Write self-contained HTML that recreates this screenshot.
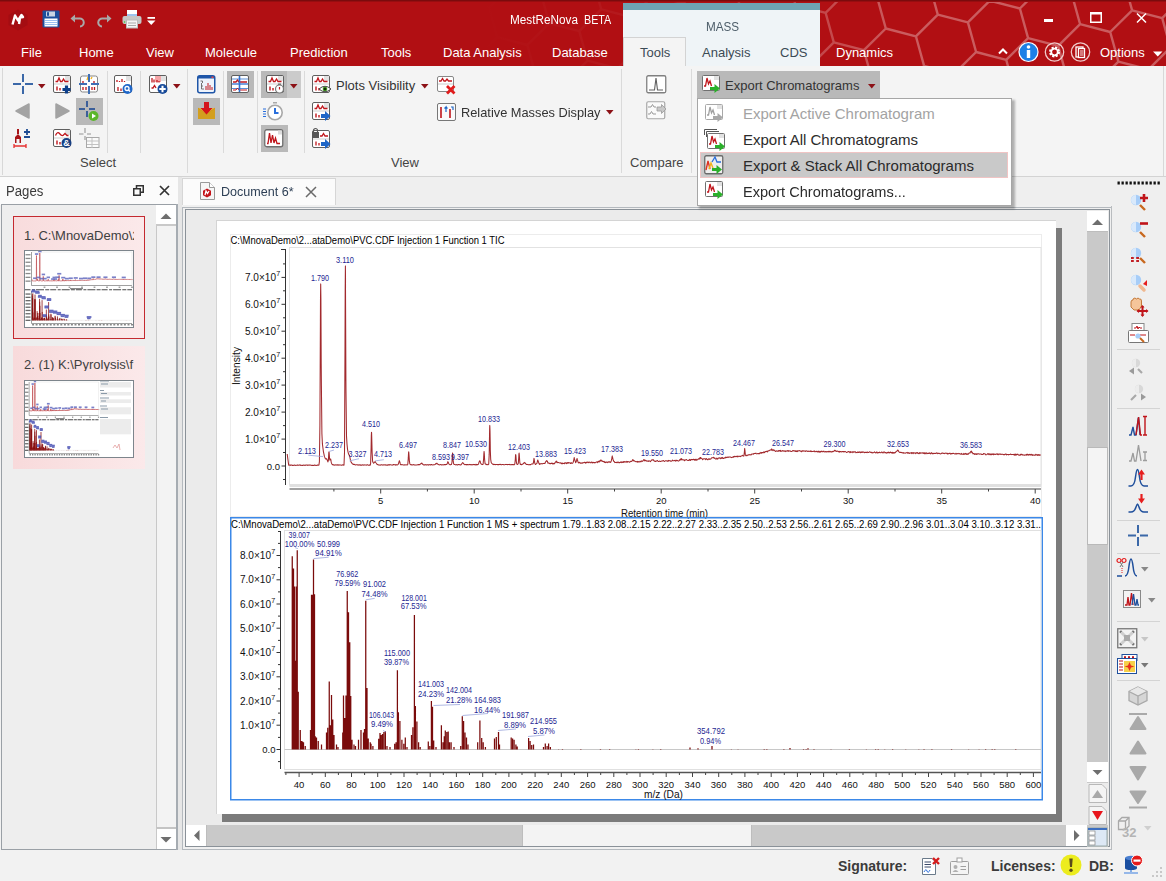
<!DOCTYPE html><html><head><meta charset="utf-8"><style>
*{margin:0;padding:0;box-sizing:border-box}
html,body{width:1166px;height:881px;overflow:hidden;background:#f2f2f2;font-family:"Liberation Sans",sans-serif;position:relative}
.a{position:absolute}
.t{position:absolute;white-space:nowrap;line-height:1}
.tab{color:#fff;font-size:13px;top:46px}
.ctab{color:#3c4a55;font-size:13px;top:46px}
.sep{position:absolute;width:1px;background:#dadada}
.glab{color:#444;font-size:13px;top:156px}
.hl{position:absolute;background:#b9b9b9}
.rtxt{color:#333;font-size:13px}
svg{position:absolute;overflow:visible}
</style></head><body>
<div class="a" style="left:0;top:0;width:1166px;height:66px;background:#b10f13"></div>
<div class="a" style="left:0;top:0;width:1166px;height:1px;background:#7a0b0d"></div><div class="a" style="left:0;top:1px;width:1166px;height:1px;background:#970d10"></div>
<svg style="left:0;top:0" width="1166" height="66"><defs><linearGradient id="hg" x1="480" x2="900" y1="0" y2="0" gradientUnits="userSpaceOnUse"><stop offset="0" stop-color="#fff" stop-opacity="0"/><stop offset="0.45" stop-color="#fff" stop-opacity="0.06"/><stop offset="1" stop-color="#fff" stop-opacity="0.32"/></linearGradient><clipPath id="hc"><rect x="0" y="2" width="1166" height="64"/></clipPath></defs><path clip-path="url(#hc)" d="M483.5 88.5L475.3 58.9M458.9 -0.2L489.0 7.6M497.2 37.2L527.3 45.0M497.2 37.2L489.0 7.6M497.2 37.2L475.3 58.9M535.5 74.6L565.6 82.4M535.5 74.6L527.3 45.0M535.5 74.6L513.6 96.3M510.9 -14.1L489.0 7.6M549.2 23.3L579.3 31.1M549.2 23.3L541.0 -6.3M549.2 23.3L527.3 45.0M587.5 60.7L617.6 68.5M587.5 60.7L579.3 31.1M587.5 60.7L565.6 82.4M625.8 98.1L617.6 68.5M601.2 9.3L631.3 17.2M601.2 9.3L593.0 -20.2M601.2 9.3L579.3 31.1M639.5 46.7L669.6 54.6M639.5 46.7L631.3 17.2M639.5 46.7L617.6 68.5M677.8 84.1L669.6 54.6M653.2 -4.6L683.3 3.3M653.2 -4.6L645.0 -34.1M653.2 -4.6L631.3 17.2M691.5 32.8L721.6 40.7M691.5 32.8L683.3 3.3M691.5 32.8L669.6 54.6M729.8 70.2L759.9 78.1M729.8 70.2L721.6 40.7M729.8 70.2L707.9 92.0M705.2 -18.5L683.3 3.3M743.5 18.9L773.6 26.8M743.5 18.9L735.3 -10.6M743.5 18.9L721.6 40.7M781.8 56.3L811.9 64.2M781.8 56.3L773.6 26.8M781.8 56.3L759.9 78.1M820.1 93.7L811.9 64.2M795.5 5.0L825.6 12.8M795.5 5.0L787.3 -24.6M795.5 5.0L773.6 26.8M833.8 42.4L863.9 50.2M833.8 42.4L825.6 12.8M833.8 42.4L811.9 64.2M872.1 79.8L863.9 50.2M847.5 -8.9L877.6 -1.1M847.5 -8.9L825.6 12.8M885.8 28.5L915.9 36.3M885.8 28.5L877.6 -1.1M885.8 28.5L863.9 50.2M924.1 65.9L954.2 73.7M924.1 65.9L915.9 36.3M924.1 65.9L902.2 87.6M962.4 103.3L954.2 73.7M899.5 -22.8L877.6 -1.1M937.8 14.6L967.9 22.4M937.8 14.6L929.6 -15.0M937.8 14.6L915.9 36.3M976.1 52.0L1006.2 59.8M976.1 52.0L967.9 22.4M976.1 52.0L954.2 73.7M1014.4 89.4L1006.2 59.8M989.8 0.7L1019.9 8.5M989.8 0.7L981.6 -28.9M989.8 0.7L967.9 22.4M1028.1 38.1L1058.2 45.9M1028.1 38.1L1019.9 8.5M1028.1 38.1L1006.2 59.8M1066.4 75.5L1058.2 45.9M1041.8 -13.2L1019.9 8.5M1080.1 24.2L1110.2 32.0M1080.1 24.2L1071.9 -5.4M1080.1 24.2L1058.2 45.9M1118.4 61.6L1148.5 69.4M1118.4 61.6L1110.2 32.0M1118.4 61.6L1096.5 83.3M1156.7 99.0L1148.5 69.4M1132.1 10.3L1162.2 18.1M1132.1 10.3L1123.9 -19.3M1132.1 10.3L1110.2 32.0M1170.4 47.7L1200.5 55.5M1170.4 47.7L1162.2 18.1M1170.4 47.7L1148.5 69.4M1184.1 -3.7L1214.2 4.2M1184.1 -3.7L1175.9 -33.2M1184.1 -3.7L1162.2 18.1" stroke="url(#hg)" stroke-width="2.4" fill="none"/></svg>
<div class="a" style="left:623px;top:3px;width:197px;height:63px;background:#eff4f7"></div>
<div class="a" style="left:623px;top:3px;width:197px;height:7px;background:#6ea3b3"></div>
<div class="t" style="left:706px;top:19.5px;font-size:13px;color:#4d5d69;transform:scaleX(0.9);transform-origin:0 0">MASS</div>
<div class="a" style="left:623px;top:37px;width:63px;height:30px;background:#f4f4f4;border:1px solid #d3d3d3;border-bottom:none"></div>
<div class="t" style="left:510px;top:14px;font-size:12.5px;color:#fff;transform:scaleX(0.94);transform-origin:0 0">MestReNova</div>
<div class="t" style="left:584px;top:14px;font-size:12.5px;color:#fff;transform:scaleX(0.86);transform-origin:0 0">BETA</div>
<div class="t tab" style="left:21px">File</div>
<div class="t tab" style="left:79px">Home</div>
<div class="t tab" style="left:146px">View</div>
<div class="t tab" style="left:205px">Molecule</div>
<div class="t tab" style="left:290px">Prediction</div>
<div class="t tab" style="left:381px">Tools</div>
<div class="t tab" style="left:443px">Data Analysis</div>
<div class="t tab" style="left:552px">Database</div>
<div class="t tab" style="left:836px">Dynamics</div>
<div class="t tab" style="left:1100px">Options</div>
<div class="t ctab" style="left:640px">Tools</div>
<div class="t ctab" style="left:702px">Analysis</div>
<div class="t ctab" style="left:780px">CDS</div>
<div class="a" style="left:0;top:66px;width:1166px;height:111px;background:#f4f4f4;border-bottom:1px solid #d3d3d3"></div>
<div class="a" style="left:2px;top:68px;width:1px;height:107px;background:#d8d8d8"></div>
<div class="a" style="left:1163px;top:66px;width:1px;height:110px;background:#d8d8d8"></div>
<div class="sep" style="left:107px;top:71px;height:82px"></div>
<div class="sep" style="left:140px;top:71px;height:82px"></div>
<div class="sep" style="left:187px;top:69px;height:104px"></div>
<div class="sep" style="left:223px;top:71px;height:82px"></div>
<div class="sep" style="left:257px;top:71px;height:82px"></div>
<div class="sep" style="left:304px;top:71px;height:82px"></div>
<div class="sep" style="left:621px;top:69px;height:104px"></div>
<div class="sep" style="left:691px;top:69px;height:104px"></div>
<div class="t glab" style="left:80px">Select</div>
<div class="t glab" style="left:391px">View</div>
<div class="t glab" style="left:630px">Compare</div>
<div class="hl" style="left:76px;top:98px;width:27px;height:27px"></div>
<div class="hl" style="left:193px;top:98px;width:27px;height:27px"></div>
<div class="hl" style="left:227px;top:71px;width:27px;height:27px"></div>
<div class="hl" style="left:261px;top:71px;width:26px;height:27px"></div>
<div class="hl" style="left:261px;top:125px;width:27px;height:27px"></div>
<div class="a" style="left:287px;top:71px;width:14px;height:27px;background:#cbcbcb"></div>
<div class="t rtxt" style="left:336px;top:79px">Plots Visibility</div>
<div class="t rtxt" style="left:461px;top:106px;transform:scaleX(0.985);transform-origin:0 0">Relative Masses Display</div>
<div class="hl" style="left:697px;top:71px;width:183px;height:27px"></div>
<div class="t rtxt" style="left:725px;top:79px">Export Chromatograms</div>
<div class="a" style="left:0;top:177px;width:178px;height:28px;background:#fbfbfb"></div>
<div class="t" style="left:6px;top:184px;font-size:14px;color:#3a3a3a;transform:scaleX(0.94);transform-origin:0 0">Pages</div>
<div class="a" style="left:1px;top:204px;width:177px;height:646px;background:#eeeeee;border:1px solid #9aa0a6;border-width:1px 1px 1px 1px"></div>
<div class="a" style="left:176px;top:204px;width:2px;height:646px;background:#a6acb2"></div>
<div class="a" style="left:156px;top:205px;width:20px;height:644px;background:#f3f3f3;border-left:1px solid #c8c8c8"></div>
<div class="a" style="left:156px;top:205px;width:20px;height:21px;background:#fff;border-bottom:2px solid #c9c9c9"></div>
<div class="a" style="left:156px;top:827px;width:20px;height:22px;background:#fff;border-top:2px solid #c4c4c4;border-left:1px solid #c8c8c8"></div>
<svg style="left:156px;top:205px" width="20" height="21"><path d="M4.5 14L10 8.5L15.5 14Z" fill="#6e6e6e"/></svg>
<svg style="left:156px;top:829px" width="20" height="20"><path d="M4.5 8L10 13.5L15.5 8Z" fill="#6e6e6e"/></svg>
<div class="a" style="left:13px;top:216px;width:132px;height:123px;background:linear-gradient(90deg,#f8dcdd,#fbe9ea);border:1px solid #c42a30"></div>
<div class="t" style="left:24px;top:229px;font-size:13px;color:#404040;width:110px;overflow:hidden">1. C:\MnovaDemo\2</div>
<div class="a" style="left:13px;top:346px;width:132px;height:123px;background:linear-gradient(90deg,#f8dadb,#fbe9ea)"></div>
<div class="t" style="left:24px;top:358px;font-size:13px;color:#404040;width:110px;overflow:hidden">2. (1) K:\Pyrolysis\f</div>
<div class="a" style="left:24px;top:250px;width:110px;height:78px;background:#fff;border:1px solid #7d858c"></div>
<div class="a" style="left:24px;top:380px;width:110px;height:78px;background:#fff;border:1px solid #7d858c"></div>
<div class="a" style="left:178px;top:177px;width:988px;height:673px;background:#efefef"></div>
<div class="a" style="left:178px;top:177px;width:4px;height:673px;background:#e6e6e6"></div>
<div class="a" style="left:182px;top:178px;width:154px;height:27px;background:#fbfbfb;border:1px solid #d6d6d6;border-bottom:none"></div>
<div class="t" style="left:221px;top:185px;font-size:13.5px;color:#2d3f55;transform:scaleX(0.93);transform-origin:0 0">Document 6*</div>
<svg style="left:305px;top:186px" width="12" height="12"><path d="M1 1L11 11M11 1L1 11" stroke="#6a6a6a" stroke-width="1.5"/></svg>
<div class="a" style="left:182px;top:205px;width:930px;height:645px;background:#f0f0f0"></div>
<div class="a" style="left:182px;top:207px;width:930px;height:643px;background:#f0f0f0;border:1px solid #b4b9be"></div><div class="a" style="left:185px;top:209px;width:925px;height:638px;background:#ebebeb;border:1.5px solid #8a9198"></div>
<div class="a" style="left:222px;top:228px;width:840px;height:594px;background:#7b7b7b"></div>
<div class="a" style="left:216px;top:220px;width:840px;height:594px;background:#fff;border:1px solid #d4d4d4;border-width:1px 0 0 1px"></div>
<div class="a" style="left:1087px;top:211px;width:21px;height:636px;background:#c9c9c9"></div>
<div class="a" style="left:1087px;top:447px;width:21px;height:98px;background:#f4f4f4;border:1px solid #b9b9b9"></div>
<div class="a" style="left:1087px;top:211px;width:21px;height:21px;background:#fff;border-bottom:1px solid #bdbdbd"></div>
<svg style="left:1087px;top:211px" width="21" height="21"><path d="M5 14L10.5 8.5L16 14Z" fill="#6e6e6e"/></svg>
<div class="a" style="left:1087px;top:762px;width:21px;height:20px;background:#fff"></div>
<svg style="left:1087px;top:762px" width="21" height="20"><path d="M5.5 8L10.5 13L15.5 8Z" fill="#6e6e6e"/></svg>
<div class="a" style="left:1087px;top:783px;width:21px;height:42px;background:#ececec"></div>
<svg style="left:1087px;top:783px" width="21" height="42"><path d="M2 1.5H15L19.5 6V19.5H2Z" fill="#f4f4f4" stroke="#b8b8b8"/><path d="M5 15L10.5 7L16 15Z" fill="#a8a8a8"/><path d="M2 23.5H15L19.5 28V41.5H2Z" fill="#f4f4f4" stroke="#b8b8b8"/><path d="M5 28L10.5 37L16 28Z" fill="#e8141b"/></svg>
<div class="a" style="left:186px;top:825px;width:901px;height:21px;background:#c9c9c9"></div>
<div class="a" style="left:522px;top:825px;width:230px;height:21px;background:#f3f3f3;border:1px solid #bdbdbd;border-width:0 1px"></div>
<div class="a" style="left:186px;top:825px;width:21px;height:21px;background:#fff;border-right:1px solid #bdbdbd"></div>
<svg style="left:186px;top:825px" width="21" height="21"><path d="M13.5 5L8 10.5L13.5 16Z" fill="#6e6e6e"/></svg>
<div class="a" style="left:1066px;top:825px;width:21px;height:21px;background:#fff"></div>
<svg style="left:1066px;top:825px" width="21" height="21"><path d="M8 5L13.5 10.5L8 16Z" fill="#6e6e6e"/></svg>
<svg style="left:1087px;top:826px" width="21" height="21"><rect x="1" y="2" width="19" height="18" fill="#dde8f5" stroke="#9aa"/><rect x="1" y="2" width="19" height="2" fill="#3d6fc0"/><rect x="2" y="5" width="6" height="4" fill="#fff" stroke="#888" stroke-width="0.7"/><rect x="2" y="10" width="6" height="4" fill="#fff" stroke="#888" stroke-width="0.7"/><rect x="2" y="15" width="6" height="4" fill="#fff" stroke="#888" stroke-width="0.7"/></svg>
<svg style="left:0;top:0" width="1166" height="881" font-family="Liberation Sans, sans-serif"><g id="cg"><rect x="230.5" y="234.5" width="811" height="282" fill="none" stroke="#ececec" stroke-width="1"/>
<text x="230.5" y="244.0" font-size="10.0" fill="#000" text-anchor="start" textLength="274.0" lengthAdjust="spacingAndGlyphs">C:\MnovaDemo\2...ataDemo\PVC.CDF Injection 1 Function 1 TIC</text>
<rect x="289.5" y="247.5" width="751.5" height="237.5" fill="none" stroke="#e2e2e2" stroke-width="1"/>
<rect x="289.5" y="484" width="751.5" height="3" fill="#e0e0e0"/>
<path d="M285.5 249V485" stroke="#333" stroke-width="1"/>
<path d="M283 479.5H285.5M281.5 466.0H285.5M283 452.5H285.5M281.5 439.1H285.5M283 425.6H285.5M281.5 412.1H285.5M283 398.6H285.5M281.5 385.1H285.5M283 371.7H285.5M281.5 358.2H285.5M283 344.7H285.5M281.5 331.2H285.5M283 317.8H285.5M281.5 304.3H285.5M283 290.8H285.5M281.5 277.4H285.5M283 263.9H285.5M281 249.5H285.5" stroke="#333" stroke-width="1"/>
<text x="280.0" y="469.5" font-size="9.5" fill="#111" text-anchor="end">0.0</text>
<text x="276.0" y="442.6" font-size="10.0" fill="#111" text-anchor="end" textLength="31.0" lengthAdjust="spacingAndGlyphs">1.0×10</text>
<text x="276.3" y="437.8" font-size="7.0" fill="#111" text-anchor="start" textLength="4.0" lengthAdjust="spacingAndGlyphs">7</text>
<text x="276.0" y="415.6" font-size="10.0" fill="#111" text-anchor="end" textLength="31.0" lengthAdjust="spacingAndGlyphs">2.0×10</text>
<text x="276.3" y="410.8" font-size="7.0" fill="#111" text-anchor="start" textLength="4.0" lengthAdjust="spacingAndGlyphs">7</text>
<text x="276.0" y="388.6" font-size="10.0" fill="#111" text-anchor="end" textLength="31.0" lengthAdjust="spacingAndGlyphs">3.0×10</text>
<text x="276.3" y="383.8" font-size="7.0" fill="#111" text-anchor="start" textLength="4.0" lengthAdjust="spacingAndGlyphs">7</text>
<text x="276.0" y="361.7" font-size="10.0" fill="#111" text-anchor="end" textLength="31.0" lengthAdjust="spacingAndGlyphs">4.0×10</text>
<text x="276.3" y="356.9" font-size="7.0" fill="#111" text-anchor="start" textLength="4.0" lengthAdjust="spacingAndGlyphs">7</text>
<text x="276.0" y="334.8" font-size="10.0" fill="#111" text-anchor="end" textLength="31.0" lengthAdjust="spacingAndGlyphs">5.0×10</text>
<text x="276.3" y="329.9" font-size="7.0" fill="#111" text-anchor="start" textLength="4.0" lengthAdjust="spacingAndGlyphs">7</text>
<text x="276.0" y="307.8" font-size="10.0" fill="#111" text-anchor="end" textLength="31.0" lengthAdjust="spacingAndGlyphs">6.0×10</text>
<text x="276.3" y="303.0" font-size="7.0" fill="#111" text-anchor="start" textLength="4.0" lengthAdjust="spacingAndGlyphs">7</text>
<text x="276.0" y="280.9" font-size="10.0" fill="#111" text-anchor="end" textLength="31.0" lengthAdjust="spacingAndGlyphs">7.0×10</text>
<text x="276.3" y="276.1" font-size="7.0" fill="#111" text-anchor="start" textLength="4.0" lengthAdjust="spacingAndGlyphs">7</text>
<text x="0.0" y="0.0" font-size="10.0" fill="#111" text-anchor="middle" textLength="38.0" lengthAdjust="spacingAndGlyphs" transform="translate(239.5 366) rotate(-90)">Intensity</text>
<path d="M289.5 489H1041" stroke="#444" stroke-width="1"/>
<path d="M333.9 489V491.5M380.7 489V493.5M427.4 489V491.5M474.2 489V493.5M521.0 489V491.5M567.7 489V493.5M614.5 489V491.5M661.2 489V493.5M708.0 489V491.5M754.7 489V493.5M801.5 489V491.5M848.2 489V493.5M895.0 489V491.5M941.7 489V493.5M988.5 489V491.5M1035.2 489V493.5" stroke="#444" stroke-width="1"/>
<text x="380.7" y="504.0" font-size="9.5" fill="#111" text-anchor="middle">5</text>
<text x="474.2" y="504.0" font-size="9.5" fill="#111" text-anchor="middle">10</text>
<text x="567.7" y="504.0" font-size="9.5" fill="#111" text-anchor="middle">15</text>
<text x="661.2" y="504.0" font-size="9.5" fill="#111" text-anchor="middle">20</text>
<text x="754.7" y="504.0" font-size="9.5" fill="#111" text-anchor="middle">25</text>
<text x="848.2" y="504.0" font-size="9.5" fill="#111" text-anchor="middle">30</text>
<text x="941.7" y="504.0" font-size="9.5" fill="#111" text-anchor="middle">35</text>
<text x="1035.2" y="504.0" font-size="9.5" fill="#111" text-anchor="middle">40</text>
<text x="621.0" y="516.5" font-size="10.0" fill="#111" text-anchor="start" textLength="87.0" lengthAdjust="spacingAndGlyphs">Retention time (min)</text>
<path d="M287.2 454.0 287.7 457.9 288.2 461.5 288.7 465.3 289.2 465.3 289.7 464.9 290.2 464.9 290.7 465.4 291.2 465.0 291.7 465.0 292.2 465.5 292.7 465.2 293.2 465.4 293.7 465.2 294.2 465.3 294.7 465.0 295.2 465.3 295.7 465.4 296.2 465.2 296.7 465.3 297.2 465.3 297.8 464.9 298.3 465.3 298.8 465.2 299.3 465.0 299.8 464.9 300.3 465.4 300.8 465.1 301.3 465.3 301.8 465.4 302.3 465.3 302.8 465.4 303.3 465.1 303.8 465.3 304.3 465.1 304.8 465.4 305.3 465.4 305.8 464.9 306.3 464.9 306.8 465.0 307.3 465.4 307.8 465.1 308.3 465.2 308.8 465.0 309.3 465.1 309.8 465.1 310.3 465.0 310.8 465.2 311.3 465.2 311.8 465.4 312.3 465.2 312.8 465.4 313.3 465.3 313.8 465.4 314.3 465.2 314.8 464.9 315.3 465.3 315.8 465.4 316.3 465.4 316.8 465.2 317.3 465.2 317.8 464.9 318.3 465.3 318.9 465.1 319.4 461.6 319.9 425.5 320.4 320.9 320.5 298.3 320.7 283.9 320.9 298.3 320.9 298.3 321.2 363.6 321.4 386.1 321.9 433.4 322.4 443.9 322.9 447.8 323.4 451.6 323.9 453.9 324.4 456.4 324.9 457.6 325.4 458.7 325.9 458.9 326.4 458.7 326.5 459.1 326.7 458.9 326.9 459.2 326.9 459.5 327.3 460.1 327.4 460.5 327.9 461.9 328.4 460.3 328.8 452.8 328.9 452.1 329.0 451.9 329.2 453.2 329.4 456.3 329.6 458.8 329.9 460.1 330.4 459.0 330.4 459.0 330.6 459.0 330.8 459.6 330.9 460.2 331.1 461.4 331.4 462.9 331.9 464.1 332.4 464.5 332.9 464.9 333.4 464.7 333.9 464.8 334.4 465.2 334.9 465.0 335.4 465.0 335.9 464.7 336.4 465.0 336.9 465.1 337.4 464.7 337.9 465.1 338.4 465.1 338.9 464.8 339.5 465.1 340.0 465.0 340.5 465.1 341.0 465.0 341.5 465.2 342.0 465.2 342.5 464.8 343.0 464.8 343.5 465.1 344.0 465.1 344.5 452.6 345.0 346.3 345.2 289.5 345.4 265.9 345.5 276.9 345.5 288.2 345.9 379.6 346.0 392.5 346.5 436.1 347.0 444.1 347.5 449.1 348.0 451.9 348.5 453.9 349.0 454.6 349.2 454.8 349.4 455.2 349.5 455.8 349.6 455.9 350.0 457.7 350.0 457.9 350.5 460.4 351.0 461.7 351.5 462.7 352.0 463.3 352.5 464.0 353.0 464.1 353.5 464.5 354.0 464.3 354.5 464.5 355.0 464.8 355.5 465.0 356.0 464.8 356.5 464.7 357.0 464.7 357.5 464.9 358.0 464.8 358.5 465.1 359.0 465.2 359.5 464.8 360.0 464.8 360.6 465.2 361.1 465.1 361.6 465.2 362.1 464.9 362.6 464.8 363.1 464.9 363.6 465.2 364.1 464.8 364.6 464.9 365.1 464.9 365.6 464.9 366.1 464.9 366.6 465.2 367.1 464.8 367.6 464.7 368.1 465.2 368.6 465.2 369.1 465.3 369.6 464.9 370.1 465.2 370.6 463.8 371.1 448.0 371.3 436.0 371.5 432.2 371.6 432.9 371.7 436.1 372.1 451.8 372.1 452.1 372.6 461.2 373.1 462.5 373.6 463.2 374.1 462.7 374.6 462.4 375.1 461.4 375.1 461.9 375.3 461.8 375.5 462.1 375.6 462.3 375.9 462.7 376.1 463.0 376.6 463.5 377.1 464.6 377.6 464.5 378.1 464.7 378.6 465.0 379.1 464.9 379.6 464.9 380.1 465.2 380.6 465.0 381.2 464.8 381.7 464.8 382.2 465.1 382.7 464.9 383.2 465.1 383.7 464.8 384.2 464.7 384.7 464.9 385.2 465.1 385.7 464.7 386.2 465.1 386.7 465.2 387.2 465.1 387.7 465.1 388.2 464.6 388.7 465.0 389.2 465.1 389.7 464.6 390.2 464.8 390.7 464.8 391.2 464.9 391.7 464.9 392.2 464.9 392.7 465.1 393.2 464.6 393.7 464.6 394.2 464.7 394.7 464.7 395.2 464.6 395.7 465.2 396.2 465.1 396.7 464.6 397.2 464.9 397.7 464.7 398.2 464.3 398.7 462.8 399.2 461.2 399.2 461.1 399.4 460.8 399.6 461.1 399.7 461.7 400.0 462.5 400.2 463.7 400.7 464.7 401.2 464.7 401.7 464.6 402.3 464.7 402.8 464.8 403.3 464.9 403.8 465.0 404.3 464.8 404.8 465.0 405.3 464.9 405.8 464.8 406.3 464.8 406.8 464.9 407.3 465.0 407.8 464.2 408.3 457.9 408.5 453.4 408.7 451.7 408.8 452.4 408.9 453.7 409.3 459.6 409.3 460.3 409.8 463.7 410.3 464.5 410.8 464.8 411.3 464.6 411.8 465.0 412.3 464.9 412.8 464.7 413.3 464.8 413.8 464.6 414.3 465.0 414.8 464.9 415.3 465.1 415.8 465.0 416.3 464.9 416.8 465.0 417.3 464.9 417.8 464.6 418.3 464.9 418.8 464.5 419.3 464.6 419.8 464.8 420.3 464.1 420.8 463.7 421.3 463.3 421.7 463.6 421.8 463.1 421.8 463.0 422.0 463.7 422.3 463.5 422.4 464.0 422.8 464.3 423.4 464.7 423.9 465.0 424.4 464.8 424.9 465.0 425.4 464.5 425.9 465.0 426.4 464.8 426.9 464.9 427.4 464.6 427.9 464.9 428.4 465.1 428.9 464.5 429.4 464.7 429.9 464.8 430.4 465.0 430.9 464.6 431.4 464.6 431.9 464.6 432.4 464.9 432.9 464.9 433.4 464.7 433.9 464.7 434.4 464.7 434.9 464.5 435.4 464.2 435.9 463.6 436.4 463.4 436.6 463.6 436.8 463.2 436.9 463.5 437.0 463.2 437.4 463.9 437.4 463.9 437.9 464.3 438.4 464.5 438.9 464.7 439.4 464.8 439.9 465.0 440.4 464.5 440.9 464.5 441.4 464.9 441.9 465.0 442.4 464.8 442.9 464.7 443.4 464.9 444.0 464.6 444.5 464.6 445.0 464.6 445.5 464.8 446.0 464.6 446.5 464.5 447.0 464.1 447.5 462.7 447.7 461.8 447.9 461.9 448.0 461.8 448.1 462.3 448.5 463.1 448.5 463.0 449.0 464.1 449.5 464.4 450.0 464.7 450.5 464.7 451.0 464.5 451.5 464.5 452.0 462.0 452.5 454.3 452.5 453.4 452.6 453.0 452.8 454.4 453.0 457.2 453.2 460.4 453.5 463.3 454.0 464.4 454.5 464.5 455.0 464.6 455.5 464.8 456.0 464.9 456.5 464.6 457.0 464.8 457.5 465.0 458.0 464.7 458.5 464.5 459.0 464.5 459.5 464.8 460.0 464.8 460.5 465.0 461.0 464.8 461.5 464.2 462.0 463.5 462.5 462.8 462.7 462.6 462.9 462.8 463.0 463.0 463.1 463.1 463.5 463.2 463.5 463.7 464.0 464.0 464.5 464.5 465.1 464.8 465.6 464.4 466.1 464.4 466.6 464.9 467.1 464.6 467.6 464.6 468.1 464.7 468.6 464.8 469.1 464.4 469.6 464.6 470.1 464.6 470.6 464.7 471.1 464.5 471.6 464.7 472.1 464.9 472.6 464.6 473.1 464.7 473.6 464.4 474.1 464.5 474.6 464.8 475.1 464.4 475.6 464.9 476.1 464.9 476.6 464.4 477.1 464.9 477.6 464.5 478.1 464.5 478.6 463.7 479.1 461.9 479.6 460.9 479.6 460.9 479.8 460.8 480.0 460.9 480.1 461.5 480.4 462.3 480.6 462.9 481.1 463.9 481.6 464.2 482.1 464.6 482.6 464.5 483.1 464.3 483.6 458.8 483.9 453.2 484.1 451.4 484.1 451.9 484.3 453.6 484.6 459.3 484.7 460.2 485.1 463.7 485.7 464.0 486.2 464.7 486.7 464.3 487.2 464.5 487.7 464.7 488.2 464.7 488.7 464.2 489.2 454.4 489.6 430.2 489.7 427.1 489.8 425.4 490.0 430.6 490.2 441.6 490.3 449.9 490.7 459.3 491.2 462.5 491.7 463.3 492.2 463.7 492.7 464.1 493.2 464.6 493.7 464.2 494.2 464.5 494.7 464.4 495.2 464.7 495.7 464.5 496.2 464.5 496.7 464.5 497.2 464.6 497.7 464.8 498.2 464.5 498.7 464.8 499.2 464.4 499.7 464.5 500.2 464.3 500.7 464.4 501.2 464.8 501.7 464.7 502.2 464.4 502.7 464.4 503.2 464.5 503.7 464.7 504.2 464.8 504.7 464.7 505.2 464.6 505.7 464.4 506.2 464.5 506.8 464.4 507.3 464.6 507.8 464.6 508.3 464.4 508.8 464.4 509.3 464.7 509.8 464.3 510.3 464.7 510.8 464.8 511.3 464.8 511.8 464.5 512.3 464.6 512.8 464.6 513.3 464.6 513.8 464.8 514.3 464.7 514.8 464.0 515.3 459.5 515.5 455.7 515.7 454.6 515.8 455.2 515.9 455.8 516.3 461.3 516.3 461.5 516.8 464.1 517.3 464.4 517.8 464.4 518.3 463.3 518.8 456.7 518.9 454.1 519.1 453.0 519.3 454.8 519.3 454.8 519.7 460.7 519.8 462.3 520.3 464.4 520.8 464.2 521.3 464.6 521.8 464.6 522.3 464.2 522.8 464.2 523.3 463.7 523.8 462.9 524.3 462.7 524.5 462.8 524.7 462.4 524.8 462.9 524.9 462.9 525.3 462.9 525.3 463.5 525.8 463.8 526.3 464.4 526.8 464.5 527.4 464.6 527.9 464.4 528.4 464.7 528.9 464.8 529.4 464.7 529.9 464.5 530.4 464.8 530.9 464.5 531.4 464.0 531.9 463.9 532.4 463.9 532.9 464.0 533.4 462.7 533.9 459.1 533.9 459.1 534.0 458.4 534.2 459.2 534.4 460.8 534.6 462.1 534.9 463.6 535.4 464.5 535.9 464.1 536.4 463.7 536.9 463.5 537.4 461.3 537.6 460.3 537.8 460.0 537.9 460.5 538.0 460.8 538.3 461.7 538.4 461.6 538.9 463.3 539.4 464.4 539.9 463.7 540.4 464.0 540.9 463.7 541.4 463.7 541.9 463.6 542.4 463.9 542.9 463.6 543.4 463.4 543.9 463.5 544.4 463.4 544.9 463.5 545.4 462.3 545.9 461.4 546.4 461.0 546.6 460.8 546.8 461.1 546.9 460.5 547.0 461.0 547.4 461.5 547.4 461.2 547.9 463.2 548.5 462.9 549.0 463.1 549.5 463.7 550.0 463.3 550.5 463.8 551.0 463.5 551.5 463.2 552.0 463.1 552.5 463.9 553.0 463.3 553.5 463.9 554.0 463.5 554.5 463.8 555.0 462.7 555.5 462.1 556.0 461.4 556.3 461.9 556.5 461.6 556.5 461.3 556.7 461.1 557.0 462.2 557.0 462.6 557.5 462.6 558.0 462.4 558.5 462.6 559.0 462.8 559.5 462.9 560.0 462.8 560.5 462.8 561.0 463.5 561.5 463.7 562.0 462.9 562.5 463.8 563.0 463.2 563.5 463.5 564.0 463.6 564.5 463.7 565.0 462.5 565.5 462.9 566.0 463.2 566.5 463.6 567.0 462.5 567.5 462.8 568.0 463.4 568.5 462.5 569.1 462.8 569.6 462.8 570.1 463.2 570.6 463.5 571.1 462.5 571.6 463.2 572.1 463.2 572.6 463.3 573.1 462.4 573.6 461.0 574.1 458.0 574.1 458.0 574.2 457.6 574.4 458.8 574.6 459.0 574.8 459.9 575.1 460.9 575.6 462.7 576.1 462.0 576.6 460.2 576.9 458.9 577.0 458.8 577.1 458.5 577.2 459.5 577.6 460.0 577.6 460.6 578.1 462.4 578.6 462.9 579.1 462.3 579.6 462.5 580.1 463.2 580.6 462.9 581.1 463.2 581.6 463.2 582.1 462.7 582.6 463.2 583.1 463.0 583.6 462.5 584.1 462.6 584.6 462.2 585.1 462.6 585.6 463.2 586.1 462.2 586.6 462.7 587.1 462.2 587.6 462.1 588.1 462.8 588.6 462.3 589.1 462.1 589.6 462.2 590.2 462.8 590.7 462.7 591.2 462.0 591.7 462.2 592.2 463.1 592.7 462.2 593.2 462.6 593.7 462.4 594.2 462.9 594.7 462.6 595.2 462.8 595.7 462.5 596.2 462.1 596.7 462.0 597.2 461.8 597.7 462.6 598.2 461.5 598.7 461.2 599.2 462.0 599.7 460.7 600.2 461.2 600.7 460.0 601.2 460.4 601.2 460.1 601.4 460.8 601.5 460.7 601.7 460.8 601.9 461.1 602.2 461.4 602.7 461.0 603.2 461.6 603.7 461.6 604.2 461.4 604.7 462.4 605.2 462.3 605.7 462.6 606.2 461.9 606.7 462.3 607.2 462.2 607.7 462.6 608.2 461.8 608.7 462.1 609.2 462.2 609.7 461.7 610.2 462.3 610.7 462.4 611.3 460.9 611.8 458.4 612.1 456.7 612.3 455.9 612.3 456.0 612.4 457.3 612.8 458.1 612.8 458.6 613.3 460.3 613.8 461.4 614.3 461.6 614.8 462.6 615.3 462.4 615.8 462.6 616.3 462.7 616.8 462.2 617.3 462.6 617.8 462.1 618.3 462.0 618.8 462.6 619.3 462.6 619.8 462.6 620.3 462.0 620.8 462.4 621.3 461.9 621.8 462.6 622.3 462.5 622.8 461.8 623.3 462.5 623.8 461.6 624.3 461.5 624.8 462.2 625.3 461.7 625.8 462.0 626.3 462.1 626.8 461.4 627.3 462.2 627.8 461.6 628.3 461.8 628.8 461.7 629.3 462.1 629.8 462.1 630.3 461.6 630.8 461.3 631.3 461.4 631.9 461.2 632.4 460.1 632.9 459.5 633.0 460.1 633.1 460.0 633.3 460.5 633.4 460.5 633.7 460.9 633.9 460.5 634.4 460.9 634.9 461.3 635.4 461.6 635.9 461.7 636.4 461.7 636.9 461.5 637.4 462.1 637.9 461.4 638.4 461.6 638.9 462.1 639.4 462.0 639.9 461.3 640.4 461.2 640.9 461.9 641.4 460.9 641.9 461.0 642.4 461.4 642.9 461.1 643.4 460.2 643.9 459.6 644.2 459.6 644.4 460.3 644.4 459.9 644.6 460.6 644.9 460.7 644.9 460.9 645.4 460.2 645.9 460.7 646.4 460.7 646.9 461.3 647.4 461.2 647.9 460.8 648.4 461.4 648.9 460.8 649.4 461.1 649.9 461.0 650.4 461.6 650.9 461.0 651.4 460.4 651.9 459.7 652.4 459.7 652.6 459.9 652.8 459.9 653.0 460.3 653.0 460.2 653.3 459.8 653.5 459.8 654.0 460.9 654.5 461.3 655.0 461.1 655.5 461.5 656.0 461.2 656.5 460.9 657.0 460.7 657.5 460.5 658.0 461.3 658.5 461.5 659.0 461.5 659.5 461.0 660.0 461.2 660.5 461.5 661.0 461.4 661.5 461.1 662.0 460.9 662.5 461.0 663.0 460.6 663.5 460.6 664.0 461.1 664.5 461.5 665.0 461.0 665.5 460.8 666.0 460.7 666.5 460.8 667.0 461.2 667.5 460.8 668.0 461.4 668.5 460.4 669.0 460.6 669.5 460.8 670.0 460.7 670.5 461.2 671.0 461.1 671.5 461.2 672.0 460.8 672.5 460.1 673.0 460.8 673.6 460.7 674.1 460.6 674.6 460.4 675.1 460.9 675.6 461.1 676.1 460.1 676.6 460.8 677.1 460.4 677.6 460.6 678.1 461.0 678.6 461.1 679.1 460.6 679.6 459.8 680.1 460.3 680.6 458.9 681.1 458.8 681.1 459.4 681.3 458.7 681.5 458.8 681.6 459.7 681.8 459.9 682.1 459.3 682.6 459.8 683.1 459.9 683.6 459.8 684.1 460.0 684.6 460.8 685.1 459.7 685.6 459.9 686.1 459.8 686.6 459.6 687.1 460.1 687.6 460.4 688.1 460.5 688.6 460.2 689.1 460.4 689.6 459.4 690.1 459.7 690.6 460.5 691.1 459.4 691.6 459.6 692.1 459.8 692.6 459.5 693.1 459.8 693.6 459.2 694.1 459.4 694.7 460.3 695.2 459.3 695.7 460.1 696.2 459.2 696.7 460.2 697.2 459.8 697.7 459.7 698.2 459.0 698.7 458.7 699.2 459.2 699.7 458.0 700.2 457.6 700.3 458.3 700.5 458.3 700.7 457.5 700.7 458.6 701.0 458.3 701.2 458.3 701.7 458.3 702.2 459.0 702.7 459.8 703.2 459.0 703.7 458.8 704.2 458.8 704.7 458.7 705.2 459.0 705.7 459.6 706.2 458.6 706.7 458.7 707.2 459.6 707.7 459.6 708.2 459.6 708.7 458.7 709.2 458.8 709.7 459.4 710.2 458.9 710.7 459.1 711.2 458.5 711.7 457.8 712.2 457.7 712.7 457.7 713.1 457.6 713.2 457.3 713.2 457.2 713.4 457.4 713.7 457.5 713.8 457.7 714.2 458.4 714.7 457.9 715.3 458.6 715.8 459.1 716.3 459.0 716.8 458.1 717.3 459.1 717.8 458.9 718.3 458.0 718.8 458.1 719.3 457.9 719.8 457.7 720.3 458.8 720.8 458.0 721.3 458.5 721.8 457.6 722.3 457.4 722.8 458.4 723.3 458.2 723.8 458.4 724.3 458.0 724.8 457.7 725.3 458.0 725.8 457.1 726.3 457.6 726.8 457.4 727.3 457.0 727.8 457.5 728.3 457.1 728.8 457.3 729.3 457.1 729.8 456.9 730.3 456.9 730.8 457.2 731.3 457.6 731.8 457.5 732.3 457.3 732.8 457.2 733.3 456.5 733.8 457.3 734.3 456.4 734.8 456.2 735.3 456.6 735.8 456.8 736.4 456.3 736.9 456.6 737.4 456.1 737.9 456.9 738.4 456.2 738.9 456.2 739.4 456.2 739.9 456.5 740.4 456.6 740.9 456.0 741.4 455.9 741.9 456.0 742.4 455.3 742.9 455.7 743.4 456.1 743.9 455.9 744.4 451.8 744.5 450.4 744.7 448.4 744.9 450.5 744.9 450.1 745.3 454.1 745.4 454.9 745.9 455.8 746.4 455.2 746.9 455.7 747.4 455.4 747.9 454.9 748.4 454.7 748.9 454.9 749.4 454.7 749.9 454.6 750.4 454.8 750.9 455.0 751.4 454.6 751.9 453.9 752.4 453.9 752.9 454.0 753.4 454.2 753.9 453.6 754.4 453.4 754.9 453.6 755.4 453.5 755.9 453.1 756.4 453.6 757.0 454.0 757.5 453.5 758.0 453.6 758.5 453.6 759.0 453.6 759.5 453.6 760.0 452.9 760.5 453.1 761.0 452.4 761.5 453.2 762.0 452.5 762.5 452.5 763.0 452.9 763.5 452.1 764.0 451.9 764.5 452.6 765.0 452.2 765.5 451.5 766.0 451.4 766.5 451.6 767.0 451.1 767.5 451.9 768.0 451.0 768.5 450.8 769.0 450.7 769.5 450.5 770.0 450.1 770.5 450.0 771.0 449.8 771.3 449.5 771.5 449.0 771.5 450.1 771.7 449.8 772.0 449.2 772.1 449.6 772.5 450.2 773.0 450.7 773.5 449.8 774.0 449.9 774.5 450.7 775.0 450.7 775.5 451.4 776.0 451.3 776.5 450.8 777.0 450.9 777.5 451.1 778.1 451.5 778.6 450.6 779.1 450.9 779.6 450.5 780.1 451.2 780.6 450.4 781.1 451.5 781.6 451.0 782.1 451.1 782.6 450.5 783.1 450.7 783.6 451.0 784.1 451.4 784.6 451.0 785.1 450.7 785.6 451.6 786.1 451.2 786.6 451.0 787.1 450.6 787.6 450.8 788.1 451.5 788.6 450.6 789.1 451.0 789.6 451.1 790.1 450.8 790.6 451.3 791.1 451.5 791.6 451.4 792.1 451.3 792.6 450.7 793.1 450.5 793.6 450.9 794.1 450.8 794.6 450.7 795.1 451.5 795.6 450.7 796.1 451.5 796.6 451.6 797.1 450.6 797.6 451.6 798.1 451.0 798.6 450.8 799.2 450.7 799.7 450.6 800.2 451.1 800.7 451.0 801.2 451.6 801.7 451.6 802.2 450.6 802.7 451.1 803.2 451.1 803.7 450.8 804.2 450.9 804.7 450.9 805.2 451.5 805.7 451.1 806.2 450.8 806.7 450.9 807.2 451.2 807.7 451.4 808.2 451.0 808.7 451.5 809.2 451.0 809.7 451.5 810.2 451.5 810.7 450.9 811.2 451.6 811.7 451.2 812.2 451.4 812.7 451.5 813.2 451.5 813.7 451.3 814.2 450.9 814.7 451.7 815.2 451.8 815.7 451.4 816.2 451.5 816.7 451.2 817.2 451.9 817.7 451.7 818.2 451.1 818.7 451.9 819.2 452.1 819.8 451.3 820.3 452.1 820.8 451.5 821.3 451.1 821.8 451.8 822.3 451.3 822.8 451.8 823.3 451.7 823.8 451.1 824.3 451.6 824.8 452.0 825.3 451.6 825.8 451.6 826.3 452.0 826.8 451.6 827.3 451.6 827.8 451.7 828.3 452.0 828.8 451.3 829.3 451.2 829.8 452.0 830.3 451.7 830.8 451.4 831.3 452.0 831.8 452.0 832.3 451.4 832.8 451.8 833.3 451.5 833.8 451.3 834.3 450.6 834.8 450.2 834.9 451.0 835.1 451.0 835.3 450.6 835.3 450.8 835.7 451.0 835.8 450.7 836.3 451.4 836.8 451.3 837.3 451.3 837.8 451.1 838.3 451.7 838.8 451.5 839.3 452.1 839.8 451.4 840.3 451.7 840.9 451.5 841.4 451.8 841.9 452.0 842.4 451.4 842.9 451.4 843.4 451.9 843.9 451.6 844.4 451.9 844.9 451.5 845.4 451.5 845.9 452.0 846.4 452.5 846.9 452.4 847.4 452.0 847.9 451.9 848.4 451.5 848.9 451.7 849.4 451.8 849.9 452.6 850.4 451.6 850.9 452.6 851.4 452.0 851.9 452.0 852.4 451.8 852.9 452.6 853.4 451.7 853.9 452.2 854.4 452.1 854.9 451.7 855.4 451.8 855.9 452.7 856.4 452.5 856.9 452.4 857.4 452.6 857.9 451.7 858.4 452.4 858.9 452.5 859.4 451.9 859.9 452.1 860.4 452.8 860.9 452.0 861.5 452.5 862.0 451.8 862.5 452.4 863.0 452.0 863.5 452.3 864.0 452.1 864.5 452.7 865.0 452.6 865.5 452.3 866.0 452.5 866.5 452.2 867.0 452.7 867.5 452.0 868.0 452.4 868.5 452.4 869.0 452.2 869.5 451.8 870.0 452.0 870.5 452.5 871.0 452.0 871.5 452.7 872.0 452.4 872.5 452.9 873.0 452.8 873.5 452.7 874.0 452.3 874.5 451.9 875.0 452.5 875.5 452.7 876.0 453.0 876.5 452.1 877.0 452.1 877.5 453.0 878.0 452.8 878.5 452.5 879.0 452.8 879.5 452.1 880.0 452.6 880.5 452.7 881.0 452.7 881.5 452.1 882.0 452.1 882.6 452.7 883.1 453.0 883.6 452.1 884.1 452.0 884.6 452.1 885.1 452.9 885.6 452.5 886.1 452.6 886.6 453.2 887.1 452.8 887.6 452.3 888.1 452.9 888.6 452.1 889.1 452.4 889.6 452.9 890.1 452.3 890.6 452.1 891.1 452.7 891.6 452.5 892.1 453.3 892.6 452.2 893.1 453.1 893.6 452.6 894.1 453.1 894.6 452.6 895.1 452.8 895.6 452.2 896.1 451.6 896.6 451.3 897.1 451.1 897.6 450.1 897.8 450.0 898.0 450.4 898.1 450.2 898.4 450.7 898.6 451.3 899.1 451.9 899.6 452.4 900.1 452.4 900.6 452.2 901.1 452.3 901.6 452.7 902.1 452.5 902.6 453.0 903.2 452.6 903.7 453.2 904.2 453.0 904.7 453.1 905.2 453.2 905.7 452.9 906.2 452.8 906.7 452.7 907.2 452.4 907.7 453.3 908.2 453.0 908.7 452.5 909.2 453.5 909.7 453.1 910.2 453.1 910.7 452.9 911.2 452.6 911.7 453.6 912.2 452.6 912.7 452.9 913.2 453.6 913.7 452.6 914.2 453.1 914.7 453.0 915.2 452.8 915.7 453.6 916.2 453.0 916.7 452.5 917.2 453.1 917.7 452.5 918.2 453.4 918.7 453.6 919.2 453.6 919.7 452.6 920.2 453.4 920.7 452.9 921.2 453.1 921.7 452.9 922.2 453.0 922.7 452.8 923.2 453.4 923.7 452.7 924.3 453.8 924.8 452.7 925.3 453.8 925.8 452.9 926.3 452.8 926.8 453.6 927.3 453.3 927.8 453.6 928.3 453.3 928.8 453.4 929.3 452.8 929.8 453.5 930.3 453.3 930.8 453.9 931.3 452.7 931.8 452.8 932.3 453.6 932.8 453.9 933.3 453.3 933.8 453.6 934.3 453.5 934.8 453.3 935.3 453.4 935.8 453.5 936.3 452.8 936.8 453.2 937.3 453.7 937.8 453.1 938.3 453.4 938.8 453.2 939.3 453.3 939.8 453.7 940.3 453.8 940.8 454.0 941.3 453.5 941.8 453.1 942.3 453.3 942.8 453.0 943.3 453.2 943.8 453.6 944.3 453.7 944.9 453.2 945.4 453.2 945.9 453.1 946.4 453.2 946.9 453.6 947.4 453.3 947.9 454.1 948.4 453.7 948.9 453.4 949.4 453.5 949.9 453.1 950.4 453.9 950.9 453.9 951.4 453.5 951.9 453.9 952.4 453.4 952.9 453.3 953.4 453.4 953.9 453.3 954.4 453.8 954.9 453.9 955.4 454.0 955.9 453.2 956.4 454.0 956.9 453.7 957.4 453.6 957.9 453.7 958.4 453.7 958.9 453.4 959.4 453.6 959.9 454.0 960.4 454.0 960.9 454.3 961.4 453.4 961.9 454.3 962.4 454.2 962.9 454.1 963.4 454.4 963.9 453.4 964.4 454.2 964.9 454.3 965.4 453.4 966.0 454.0 966.5 454.4 967.0 453.6 967.5 454.3 968.0 454.4 968.5 453.7 969.0 453.2 969.5 452.9 970.0 453.1 970.5 451.9 971.0 451.3 971.1 451.4 971.3 452.0 971.5 451.3 971.5 451.1 971.9 452.6 972.0 452.0 972.5 452.7 973.0 453.9 973.5 453.4 974.0 453.4 974.5 454.4 975.0 453.7 975.5 453.7 976.0 454.5 976.5 453.7 977.0 454.5 977.5 453.8 978.0 453.8 978.5 453.7 979.0 454.1 979.5 454.1 980.0 454.0 980.5 454.1 981.0 453.9 981.5 454.5 982.0 454.6 982.5 454.4 983.0 454.5 983.5 453.6 984.0 453.8 984.5 453.8 985.0 453.7 985.5 454.7 986.0 454.7 986.6 454.7 987.1 454.3 987.6 453.7 988.1 454.1 988.6 453.7 989.1 454.7 989.6 453.9 990.1 454.0 990.6 454.8 991.1 453.9 991.6 454.8 992.1 454.0 992.6 454.5 993.1 453.8 993.6 454.8 994.1 454.2 994.6 454.1 995.1 454.5 995.6 454.4 996.1 454.0 996.6 453.9 997.1 454.4 997.6 453.8 998.1 454.8 998.6 454.2 999.1 454.0 999.6 454.2 1000.1 453.9 1000.6 454.2 1001.1 454.5 1001.6 454.3 1002.1 454.2 1002.6 454.2 1003.1 454.4 1003.6 454.8 1004.1 454.4 1004.6 454.8 1005.1 454.4 1005.6 454.0 1006.1 454.1 1006.6 454.9 1007.1 454.5 1007.7 454.4 1008.2 454.5 1008.7 454.9 1009.2 454.4 1009.7 454.4 1010.2 454.4 1010.7 454.0 1011.2 454.6 1011.7 454.5 1012.2 454.6 1012.7 454.5 1013.2 454.5 1013.7 454.8 1014.2 454.2 1014.7 455.2 1015.2 454.1 1015.7 455.1 1016.2 454.2 1016.7 455.0 1017.2 454.4 1017.7 454.1 1018.2 454.7 1018.7 455.1 1019.2 455.1 1019.7 455.1 1020.2 455.3 1020.7 454.2 1021.2 454.6 1021.7 454.2 1022.2 455.0 1022.7 454.7 1023.2 455.0 1023.7 455.1 1024.2 455.3 1024.7 455.0 1025.2 455.2 1025.7 454.8 1026.2 454.3 1026.7 455.3 1027.2 454.3 1027.7 454.3 1028.2 455.2 1028.8 454.6 1029.3 455.0 1029.8 454.3 1030.3 454.5 1030.8 455.1 1031.3 454.3 1031.8 454.9 1032.3 455.4 1032.8 454.5 1033.3 455.1 1033.8 455.2 1034.3 455.0 1034.8 455.2 1035.3 455.2 1035.8 454.3 1036.3 454.6 1036.8 455.0 1037.3 455.5 1037.8 454.6 1038.3 455.1 1038.8 454.5 1039.3 455.4 1039.8 454.9 1040.3 455.0 1040.8 455.2" fill="none" stroke="#a22a2e" stroke-width="1.05" stroke-linejoin="round"/>
<text x="311.0" y="281.0" font-size="9.0" fill="#1d2692" text-anchor="start" textLength="18.0" lengthAdjust="spacingAndGlyphs">1.790</text>
<text x="336.0" y="263.0" font-size="9.0" fill="#1d2692" text-anchor="start" textLength="18.0" lengthAdjust="spacingAndGlyphs">3.110</text>
<text x="298.0" y="454.0" font-size="9.0" fill="#1d2692" text-anchor="start" textLength="18.0" lengthAdjust="spacingAndGlyphs">2.113</text>
<text x="325.0" y="448.0" font-size="9.0" fill="#1d2692" text-anchor="start" textLength="18.0" lengthAdjust="spacingAndGlyphs">2.237</text>
<text x="348.6" y="457.0" font-size="9.0" fill="#1d2692" text-anchor="start" textLength="18.0" lengthAdjust="spacingAndGlyphs">3.327</text>
<text x="362.0" y="427.0" font-size="9.0" fill="#1d2692" text-anchor="start" textLength="18.0" lengthAdjust="spacingAndGlyphs">4.510</text>
<text x="374.0" y="457.0" font-size="9.0" fill="#1d2692" text-anchor="start" textLength="18.0" lengthAdjust="spacingAndGlyphs">4.713</text>
<text x="399.0" y="447.7" font-size="9.0" fill="#1d2692" text-anchor="start" textLength="18.0" lengthAdjust="spacingAndGlyphs">6.497</text>
<text x="443.0" y="448.0" font-size="9.0" fill="#1d2692" text-anchor="start" textLength="18.0" lengthAdjust="spacingAndGlyphs">8.847</text>
<text x="465.0" y="447.0" font-size="9.0" fill="#1d2692" text-anchor="start" textLength="21.9" lengthAdjust="spacingAndGlyphs">10.530</text>
<text x="478.0" y="421.5" font-size="9.0" fill="#1d2692" text-anchor="start" textLength="21.9" lengthAdjust="spacingAndGlyphs">10.833</text>
<text x="432.0" y="459.5" font-size="9.0" fill="#1d2692" text-anchor="start" textLength="18.0" lengthAdjust="spacingAndGlyphs">8.593</text>
<text x="451.0" y="459.5" font-size="9.0" fill="#1d2692" text-anchor="start" textLength="18.0" lengthAdjust="spacingAndGlyphs">9.397</text>
<text x="508.0" y="450.0" font-size="9.0" fill="#1d2692" text-anchor="start" textLength="21.9" lengthAdjust="spacingAndGlyphs">12.403</text>
<text x="535.0" y="457.0" font-size="9.0" fill="#1d2692" text-anchor="start" textLength="21.9" lengthAdjust="spacingAndGlyphs">13.883</text>
<text x="564.0" y="454.0" font-size="9.0" fill="#1d2692" text-anchor="start" textLength="21.9" lengthAdjust="spacingAndGlyphs">15.423</text>
<text x="601.0" y="452.0" font-size="9.0" fill="#1d2692" text-anchor="start" textLength="21.9" lengthAdjust="spacingAndGlyphs">17.383</text>
<text x="641.0" y="456.0" font-size="9.0" fill="#1d2692" text-anchor="start" textLength="21.9" lengthAdjust="spacingAndGlyphs">19.550</text>
<text x="670.0" y="454.0" font-size="9.0" fill="#1d2692" text-anchor="start" textLength="21.9" lengthAdjust="spacingAndGlyphs">21.073</text>
<text x="702.0" y="455.0" font-size="9.0" fill="#1d2692" text-anchor="start" textLength="21.9" lengthAdjust="spacingAndGlyphs">22.783</text>
<text x="733.0" y="446.0" font-size="9.0" fill="#1d2692" text-anchor="start" textLength="21.9" lengthAdjust="spacingAndGlyphs">24.467</text>
<text x="772.0" y="446.0" font-size="9.0" fill="#1d2692" text-anchor="start" textLength="21.9" lengthAdjust="spacingAndGlyphs">26.547</text>
<text x="823.5" y="447.0" font-size="9.0" fill="#1d2692" text-anchor="start" textLength="21.9" lengthAdjust="spacingAndGlyphs">29.300</text>
<text x="887.0" y="447.0" font-size="9.0" fill="#1d2692" text-anchor="start" textLength="21.9" lengthAdjust="spacingAndGlyphs">32.653</text>
<text x="960.0" y="448.0" font-size="9.0" fill="#1d2692" text-anchor="start" textLength="21.9" lengthAdjust="spacingAndGlyphs">36.583</text>
<path d="M308.3 455.2L323.0 456.6M329.0 451.5L334.0 450.0M349.5 460.9L359.0 458.7M375.2 460.9L383.8 459.7" stroke="#9aa6dc" stroke-width="0.8" fill="none"/><rect x="230.75" y="517.75" width="811.5" height="282" fill="none" stroke="#3b88e8" stroke-width="1.5"/>
<text x="231.0" y="528.0" font-size="10.0" fill="#000" text-anchor="start" textLength="810.0" lengthAdjust="spacingAndGlyphs">C:\MnovaDemo\2...ataDemo\PVC.CDF Injection 1 Function 1 MS + spectrum 1.79..1.83 2.08..2.15 2.22..2.27 2.33..2.35 2.50..2.53 2.56..2.61 2.65..2.69 2.90..2.96 3.01..3.04 3.10..3.12 3.31..</text>
<rect x="284.5" y="530.5" width="756.5" height="239" fill="none" stroke="#e0e0e0" stroke-width="1"/>
<path d="M284.5 749.5H1041" stroke="#c8c8c8" stroke-width="1"/>
<path d="M280.5 531V769" stroke="#333" stroke-width="1"/>
<path d="M278 761.6H280.5M276.5 749.5H280.5M278 737.4H280.5M276.5 725.2H280.5M278 713.1H280.5M276.5 701.0H280.5M278 688.9H280.5M276.5 676.8H280.5M278 664.6H280.5M276.5 652.5H280.5M278 640.4H280.5M276.5 628.2H280.5M278 616.1H280.5M276.5 604.0H280.5M278 591.9H280.5M276.5 579.8H280.5M278 567.6H280.5M276.5 555.5H280.5M278 543.4H280.5M278 531.5H280.5" stroke="#333" stroke-width="1"/>
<text x="275.5" y="753.0" font-size="9.5" fill="#111" text-anchor="end">0.0</text>
<text x="271.0" y="728.8" font-size="10.0" fill="#111" text-anchor="end" textLength="31.0" lengthAdjust="spacingAndGlyphs">1.0×10</text>
<text x="271.3" y="724.0" font-size="7.0" fill="#111" text-anchor="start" textLength="4.0" lengthAdjust="spacingAndGlyphs">7</text>
<text x="271.0" y="704.5" font-size="10.0" fill="#111" text-anchor="end" textLength="31.0" lengthAdjust="spacingAndGlyphs">2.0×10</text>
<text x="271.3" y="699.7" font-size="7.0" fill="#111" text-anchor="start" textLength="4.0" lengthAdjust="spacingAndGlyphs">7</text>
<text x="271.0" y="680.2" font-size="10.0" fill="#111" text-anchor="end" textLength="31.0" lengthAdjust="spacingAndGlyphs">3.0×10</text>
<text x="271.3" y="675.5" font-size="7.0" fill="#111" text-anchor="start" textLength="4.0" lengthAdjust="spacingAndGlyphs">7</text>
<text x="271.0" y="656.0" font-size="10.0" fill="#111" text-anchor="end" textLength="31.0" lengthAdjust="spacingAndGlyphs">4.0×10</text>
<text x="271.3" y="651.2" font-size="7.0" fill="#111" text-anchor="start" textLength="4.0" lengthAdjust="spacingAndGlyphs">7</text>
<text x="271.0" y="631.8" font-size="10.0" fill="#111" text-anchor="end" textLength="31.0" lengthAdjust="spacingAndGlyphs">5.0×10</text>
<text x="271.3" y="627.0" font-size="7.0" fill="#111" text-anchor="start" textLength="4.0" lengthAdjust="spacingAndGlyphs">7</text>
<text x="271.0" y="607.5" font-size="10.0" fill="#111" text-anchor="end" textLength="31.0" lengthAdjust="spacingAndGlyphs">6.0×10</text>
<text x="271.3" y="602.7" font-size="7.0" fill="#111" text-anchor="start" textLength="4.0" lengthAdjust="spacingAndGlyphs">7</text>
<text x="271.0" y="583.2" font-size="10.0" fill="#111" text-anchor="end" textLength="31.0" lengthAdjust="spacingAndGlyphs">7.0×10</text>
<text x="271.3" y="578.5" font-size="7.0" fill="#111" text-anchor="start" textLength="4.0" lengthAdjust="spacingAndGlyphs">7</text>
<text x="271.0" y="559.0" font-size="10.0" fill="#111" text-anchor="end" textLength="31.0" lengthAdjust="spacingAndGlyphs">8.0×10</text>
<text x="271.3" y="554.2" font-size="7.0" fill="#111" text-anchor="start" textLength="4.0" lengthAdjust="spacingAndGlyphs">7</text>
<path d="M284.5 772.5H1041" stroke="#555" stroke-width="1.5"/>
<path d="M285.9 773V775.0M299.1 773V777.0M312.2 773V775.0M325.3 773V777.0M338.4 773V775.0M351.5 773V777.0M364.6 773V775.0M377.7 773V777.0M390.9 773V775.0M404.0 773V777.0M417.1 773V775.0M430.2 773V777.0M443.3 773V775.0M456.4 773V777.0M469.5 773V775.0M482.7 773V777.0M495.8 773V775.0M508.9 773V777.0M522.0 773V775.0M535.1 773V777.0M548.2 773V775.0M561.3 773V777.0M574.4 773V775.0M587.6 773V777.0M600.7 773V775.0M613.8 773V777.0M626.9 773V775.0M640.0 773V777.0M653.1 773V775.0M666.2 773V777.0M679.4 773V775.0M692.5 773V777.0M705.6 773V775.0M718.7 773V777.0M731.8 773V775.0M744.9 773V777.0M758.0 773V775.0M771.2 773V777.0M784.3 773V775.0M797.4 773V777.0M810.5 773V775.0M823.6 773V777.0M836.7 773V775.0M849.8 773V777.0M863.0 773V775.0M876.1 773V777.0M889.2 773V775.0M902.3 773V777.0M915.4 773V775.0M928.5 773V777.0M941.6 773V775.0M954.8 773V777.0M967.9 773V775.0M981.0 773V777.0M994.1 773V775.0M1007.2 773V777.0M1020.3 773V775.0M1033.4 773V777.0" stroke="#444" stroke-width="1"/>
<text x="299.1" y="787.8" font-size="9.5" fill="#111" text-anchor="middle">40</text>
<text x="325.3" y="787.8" font-size="9.5" fill="#111" text-anchor="middle">60</text>
<text x="351.5" y="787.8" font-size="9.5" fill="#111" text-anchor="middle">80</text>
<text x="377.7" y="787.8" font-size="9.5" fill="#111" text-anchor="middle">100</text>
<text x="404.0" y="787.8" font-size="9.5" fill="#111" text-anchor="middle">120</text>
<text x="430.2" y="787.8" font-size="9.5" fill="#111" text-anchor="middle">140</text>
<text x="456.4" y="787.8" font-size="9.5" fill="#111" text-anchor="middle">160</text>
<text x="482.7" y="787.8" font-size="9.5" fill="#111" text-anchor="middle">180</text>
<text x="508.9" y="787.8" font-size="9.5" fill="#111" text-anchor="middle">200</text>
<text x="535.1" y="787.8" font-size="9.5" fill="#111" text-anchor="middle">220</text>
<text x="561.3" y="787.8" font-size="9.5" fill="#111" text-anchor="middle">240</text>
<text x="587.6" y="787.8" font-size="9.5" fill="#111" text-anchor="middle">260</text>
<text x="613.8" y="787.8" font-size="9.5" fill="#111" text-anchor="middle">280</text>
<text x="640.0" y="787.8" font-size="9.5" fill="#111" text-anchor="middle">300</text>
<text x="666.2" y="787.8" font-size="9.5" fill="#111" text-anchor="middle">320</text>
<text x="692.5" y="787.8" font-size="9.5" fill="#111" text-anchor="middle">340</text>
<text x="718.7" y="787.8" font-size="9.5" fill="#111" text-anchor="middle">360</text>
<text x="744.9" y="787.8" font-size="9.5" fill="#111" text-anchor="middle">380</text>
<text x="771.2" y="787.8" font-size="9.5" fill="#111" text-anchor="middle">400</text>
<text x="797.4" y="787.8" font-size="9.5" fill="#111" text-anchor="middle">420</text>
<text x="823.6" y="787.8" font-size="9.5" fill="#111" text-anchor="middle">440</text>
<text x="849.8" y="787.8" font-size="9.5" fill="#111" text-anchor="middle">460</text>
<text x="876.1" y="787.8" font-size="9.5" fill="#111" text-anchor="middle">480</text>
<text x="902.3" y="787.8" font-size="9.5" fill="#111" text-anchor="middle">500</text>
<text x="928.5" y="787.8" font-size="9.5" fill="#111" text-anchor="middle">520</text>
<text x="954.8" y="787.8" font-size="9.5" fill="#111" text-anchor="middle">540</text>
<text x="981.0" y="787.8" font-size="9.5" fill="#111" text-anchor="middle">560</text>
<text x="1007.2" y="787.8" font-size="9.5" fill="#111" text-anchor="middle">580</text>
<text x="1033.4" y="787.8" font-size="9.5" fill="#111" text-anchor="middle">600</text>
<text x="644.0" y="798.0" font-size="10.0" fill="#111" text-anchor="start" textLength="39.0" lengthAdjust="spacingAndGlyphs">m/z (Da)</text>
<path d="M292.25 749.5V556.2M293.50 749.5V568.4M294.50 749.5V586.5M295.50 749.5V660.7M296.30 749.5V586.5M297.25 749.5V550.2M298.25 749.5V691.8M300.25 749.5V730.1M301.50 749.5V741.0M302.50 749.5V741.5M303.50 749.5V742.2M305.25 749.5V745.9M310.50 749.5V730.1M311.50 749.5V594.8M312.30 749.5V594.8M313.50 749.5V559.6M314.50 749.5V594.3M315.25 749.5V736.2M316.50 749.5V737.4M318.25 749.5V741.0M321.50 749.5V744.6M326.50 749.5V732.5M327.75 749.5V727.7M329.25 749.5V681.6M330.25 749.5V725.2M331.50 749.5V694.9M332.75 749.5V719.4M334.00 749.5V735.0M336.50 749.5V744.6M338.00 749.5V747.1M342.75 749.5V732.5M343.50 749.5V695.4M344.75 749.5V718.0M346.00 749.5V695.4M347.25 749.5V590.9M348.50 749.5V612.2M349.75 749.5V642.3M350.75 749.5V696.1M352.00 749.5V739.8M354.00 749.5V744.6M355.50 749.5V745.9M358.50 749.5V739.8M361.00 749.5V730.1M363.50 749.5V732.5M364.50 749.5V728.9M365.75 749.5V600.8M367.00 749.5V687.9M368.25 749.5V738.6M370.25 749.5V742.2M371.00 749.5V743.7M372.90 749.5V745.9M378.70 749.5V738.8M380.00 749.5V733.0M381.20 749.5V735.0M382.50 749.5V734.0M383.90 749.5V732.0M385.40 749.5V731.1M387.00 749.5V745.9M390.00 749.5V747.1M394.70 749.5V743.7M396.10 749.5V742.2M397.40 749.5V670.2M398.40 749.5V712.2M399.90 749.5V721.1M401.90 749.5V739.8M403.80 749.5V743.7M405.30 749.5V737.4M407.00 749.5V747.1M411.50 749.5V735.0M412.90 749.5V727.2M414.40 749.5V614.9M415.40 749.5V705.9M416.90 749.5V721.4M418.60 749.5V742.2M420.20 749.5V747.1M428.30 749.5V741.5M429.80 749.5V745.9M431.40 749.5V701.0M432.50 749.5V706.8M433.70 749.5V740.5M436.00 749.5V747.1M441.40 749.5V725.2M443.00 749.5V742.2M444.30 749.5V736.2M445.30 749.5V730.6M446.80 749.5V732.0M448.20 749.5V731.6M449.50 749.5V742.2M451.10 749.5V742.2M454.00 749.5V747.1M460.70 749.5V745.9M462.30 749.5V716.3M463.60 749.5V721.1M465.00 749.5V732.5M466.50 749.5V737.4M468.00 749.5V744.6M477.70 749.5V742.2M479.90 749.5V720.6M481.70 749.5V737.9M483.20 749.5V742.2M485.40 749.5V747.1M494.50 749.5V738.6M496.30 749.5V737.1M498.50 749.5V732.0M499.50 749.5V744.6M511.20 749.5V737.4M512.60 749.5V738.6M514.10 749.5V739.8M515.90 749.5V744.6M517.20 749.5V746.6M528.60 749.5V738.1M530.10 749.5V741.0M531.70 749.5V745.1M533.50 749.5V744.6M543.50 749.5V747.1M545.30 749.5V743.4M547.10 749.5V745.9M548.60 749.5V743.4M550.40 749.5V747.1M690.00 749.5V747.6M698.00 749.5V748.3M712.00 749.5V745.9M790.00 749.5V748.0M808.00 749.5V748.3M558.55 749.5V749.3M562.48 749.5V749.1M580.82 749.5V749.0M600.47 749.5V749.0M609.64 749.5V749.0M635.84 749.5V749.3M638.46 749.5V749.1M652.87 749.5V749.3M660.73 749.5V749.0M731.47 749.5V749.3M738.02 749.5V749.3M764.22 749.5V749.1M766.84 749.5V749.0M783.87 749.5V749.1M803.52 749.5V749.1M806.14 749.5V749.0M814.00 749.5V749.1M831.03 749.5V749.3M849.37 749.5V749.1M866.40 749.5V749.3M875.57 749.5V749.1M878.19 749.5V749.1M884.74 749.5V749.3M892.60 749.5V749.0M905.70 749.5V749.3M918.80 749.5V749.3M924.04 749.5V749.0M931.90 749.5V749.0M951.55 749.5V749.1M968.58 749.5V749.3M979.06 749.5V749.3M985.61 749.5V749.1M992.16 749.5V749.1M994.78 749.5V749.0M1015.74 749.5V749.1" stroke="#7a0b0b" stroke-width="1.25" fill="none"/>
<text x="288.5" y="538.0" font-size="9.0" fill="#1d2692" text-anchor="start" textLength="21.4" lengthAdjust="spacingAndGlyphs">39.007</text>
<text x="284.8" y="546.7" font-size="9.0" fill="#1d2692" text-anchor="start" textLength="29.5" lengthAdjust="spacingAndGlyphs">100.00%</text>
<text x="317.0" y="546.7" font-size="9.0" fill="#1d2692" text-anchor="start" textLength="23.0" lengthAdjust="spacingAndGlyphs">50.999</text>
<text x="315.0" y="555.9" font-size="9.0" fill="#1d2692" text-anchor="start" textLength="26.7" lengthAdjust="spacingAndGlyphs">94.91%</text>
<text x="336.3" y="576.9" font-size="9.0" fill="#1d2692" text-anchor="start" textLength="22.0" lengthAdjust="spacingAndGlyphs">76.962</text>
<text x="334.5" y="586.0" font-size="9.0" fill="#1d2692" text-anchor="start" textLength="25.7" lengthAdjust="spacingAndGlyphs">79.59%</text>
<text x="363.0" y="586.7" font-size="9.0" fill="#1d2692" text-anchor="start" textLength="23.0" lengthAdjust="spacingAndGlyphs">91.002</text>
<text x="361.6" y="596.7" font-size="9.0" fill="#1d2692" text-anchor="start" textLength="26.0" lengthAdjust="spacingAndGlyphs">74.48%</text>
<text x="401.4" y="600.9" font-size="9.0" fill="#1d2692" text-anchor="start" textLength="25.4" lengthAdjust="spacingAndGlyphs">128.001</text>
<text x="400.7" y="609.4" font-size="9.0" fill="#1d2692" text-anchor="start" textLength="26.0" lengthAdjust="spacingAndGlyphs">67.53%</text>
<text x="384.0" y="656.0" font-size="9.0" fill="#1d2692" text-anchor="start" textLength="26.0" lengthAdjust="spacingAndGlyphs">115.000</text>
<text x="384.0" y="665.0" font-size="9.0" fill="#1d2692" text-anchor="start" textLength="25.0" lengthAdjust="spacingAndGlyphs">39.87%</text>
<text x="369.0" y="717.5" font-size="9.0" fill="#1d2692" text-anchor="start" textLength="25.0" lengthAdjust="spacingAndGlyphs">106.043</text>
<text x="371.0" y="726.5" font-size="9.0" fill="#1d2692" text-anchor="start" textLength="22.0" lengthAdjust="spacingAndGlyphs">9.49%</text>
<text x="418.0" y="687.0" font-size="9.0" fill="#1d2692" text-anchor="start" textLength="26.0" lengthAdjust="spacingAndGlyphs">141.003</text>
<text x="418.0" y="697.0" font-size="9.0" fill="#1d2692" text-anchor="start" textLength="26.0" lengthAdjust="spacingAndGlyphs">24.23%</text>
<text x="446.0" y="693.0" font-size="9.0" fill="#1d2692" text-anchor="start" textLength="26.0" lengthAdjust="spacingAndGlyphs">142.004</text>
<text x="446.0" y="703.0" font-size="9.0" fill="#1d2692" text-anchor="start" textLength="26.0" lengthAdjust="spacingAndGlyphs">21.28%</text>
<text x="474.0" y="703.0" font-size="9.0" fill="#1d2692" text-anchor="start" textLength="27.0" lengthAdjust="spacingAndGlyphs">164.983</text>
<text x="474.0" y="713.0" font-size="9.0" fill="#1d2692" text-anchor="start" textLength="26.0" lengthAdjust="spacingAndGlyphs">16.44%</text>
<text x="502.0" y="718.0" font-size="9.0" fill="#1d2692" text-anchor="start" textLength="27.0" lengthAdjust="spacingAndGlyphs">191.987</text>
<text x="504.0" y="728.0" font-size="9.0" fill="#1d2692" text-anchor="start" textLength="22.0" lengthAdjust="spacingAndGlyphs">8.89%</text>
<text x="530.0" y="724.0" font-size="9.0" fill="#1d2692" text-anchor="start" textLength="27.0" lengthAdjust="spacingAndGlyphs">214.955</text>
<text x="533.0" y="734.0" font-size="9.0" fill="#1d2692" text-anchor="start" textLength="22.0" lengthAdjust="spacingAndGlyphs">5.87%</text>
<text x="697.0" y="734.0" font-size="9.0" fill="#1d2692" text-anchor="start" textLength="28.0" lengthAdjust="spacingAndGlyphs">354.792</text>
<text x="700.0" y="743.5" font-size="9.0" fill="#1d2692" text-anchor="start" textLength="21.0" lengthAdjust="spacingAndGlyphs">0.94%</text>
<path d="M295.0 547.6L297.8 548.6M313.6 558.6L328.7 557.2M365.8 599.8L374.7 598.4M383.0 730.5L386.0 732.0M433.5 705.5L460.0 704.5M462.5 715.5L488.0 713.5M498.0 730.5L516.0 729.0M528.0 736.5L544.5 735.0" stroke="#9aa6dc" stroke-width="0.8" fill="none"/></g></svg><svg style="left:24px;top:250px" width="110" height="78" viewBox="0 0 110 78"><g transform="scale(1.000 1)"><path d="M287.2 454.0 287.7 457.9 288.2 461.5 288.7 465.3 289.2 465.3 289.7 464.9 290.2 464.9 290.7 465.4 291.2 465.0 291.7 465.0 292.2 465.5 292.7 465.2 293.2 465.4 293.7 465.2 294.2 465.3 294.7 465.0 295.2 465.3 295.7 465.4 296.2 465.2 296.7 465.3 297.2 465.3 297.8 464.9 298.3 465.3 298.8 465.2 299.3 465.0 299.8 464.9 300.3 465.4 300.8 465.1 301.3 465.3 301.8 465.4 302.3 465.3 302.8 465.4 303.3 465.1 303.8 465.3 304.3 465.1 304.8 465.4 305.3 465.4 305.8 464.9 306.3 464.9 306.8 465.0 307.3 465.4 307.8 465.1 308.3 465.2 308.8 465.0 309.3 465.1 309.8 465.1 310.3 465.0 310.8 465.2 311.3 465.2 311.8 465.4 312.3 465.2 312.8 465.4 313.3 465.3 313.8 465.4 314.3 465.2 314.8 464.9 315.3 465.3 315.8 465.4 316.3 465.4 316.8 465.2 317.3 465.2 317.8 464.9 318.3 465.3 318.9 465.1 319.4 461.6 319.9 425.5 320.4 320.9 320.5 298.3 320.7 283.9 320.9 298.3 320.9 298.3 321.2 363.6 321.4 386.1 321.9 433.4 322.4 443.9 322.9 447.8 323.4 451.6 323.9 453.9 324.4 456.4 324.9 457.6 325.4 458.7 325.9 458.9 326.4 458.7 326.5 459.1 326.7 458.9 326.9 459.2 326.9 459.5 327.3 460.1 327.4 460.5 327.9 461.9 328.4 460.3 328.8 452.8 328.9 452.1 329.0 451.9 329.2 453.2 329.4 456.3 329.6 458.8 329.9 460.1 330.4 459.0 330.4 459.0 330.6 459.0 330.8 459.6 330.9 460.2 331.1 461.4 331.4 462.9 331.9 464.1 332.4 464.5 332.9 464.9 333.4 464.7 333.9 464.8 334.4 465.2 334.9 465.0 335.4 465.0 335.9 464.7 336.4 465.0 336.9 465.1 337.4 464.7 337.9 465.1 338.4 465.1 338.9 464.8 339.5 465.1 340.0 465.0 340.5 465.1 341.0 465.0 341.5 465.2 342.0 465.2 342.5 464.8 343.0 464.8 343.5 465.1 344.0 465.1 344.5 452.6 345.0 346.3 345.2 289.5 345.4 265.9 345.5 276.9 345.5 288.2 345.9 379.6 346.0 392.5 346.5 436.1 347.0 444.1 347.5 449.1 348.0 451.9 348.5 453.9 349.0 454.6 349.2 454.8 349.4 455.2 349.5 455.8 349.6 455.9 350.0 457.7 350.0 457.9 350.5 460.4 351.0 461.7 351.5 462.7 352.0 463.3 352.5 464.0 353.0 464.1 353.5 464.5 354.0 464.3 354.5 464.5 355.0 464.8 355.5 465.0 356.0 464.8 356.5 464.7 357.0 464.7 357.5 464.9 358.0 464.8 358.5 465.1 359.0 465.2 359.5 464.8 360.0 464.8 360.6 465.2 361.1 465.1 361.6 465.2 362.1 464.9 362.6 464.8 363.1 464.9 363.6 465.2 364.1 464.8 364.6 464.9 365.1 464.9 365.6 464.9 366.1 464.9 366.6 465.2 367.1 464.8 367.6 464.7 368.1 465.2 368.6 465.2 369.1 465.3 369.6 464.9 370.1 465.2 370.6 463.8 371.1 448.0 371.3 436.0 371.5 432.2 371.6 432.9 371.7 436.1 372.1 451.8 372.1 452.1 372.6 461.2 373.1 462.5 373.6 463.2 374.1 462.7 374.6 462.4 375.1 461.4 375.1 461.9 375.3 461.8 375.5 462.1 375.6 462.3 375.9 462.7 376.1 463.0 376.6 463.5 377.1 464.6 377.6 464.5 378.1 464.7 378.6 465.0 379.1 464.9 379.6 464.9 380.1 465.2 380.6 465.0 381.2 464.8 381.7 464.8 382.2 465.1 382.7 464.9 383.2 465.1 383.7 464.8 384.2 464.7 384.7 464.9 385.2 465.1 385.7 464.7 386.2 465.1 386.7 465.2 387.2 465.1 387.7 465.1 388.2 464.6 388.7 465.0 389.2 465.1 389.7 464.6 390.2 464.8 390.7 464.8 391.2 464.9 391.7 464.9 392.2 464.9 392.7 465.1 393.2 464.6 393.7 464.6 394.2 464.7 394.7 464.7 395.2 464.6 395.7 465.2 396.2 465.1 396.7 464.6 397.2 464.9 397.7 464.7 398.2 464.3 398.7 462.8 399.2 461.2 399.2 461.1 399.4 460.8 399.6 461.1 399.7 461.7 400.0 462.5 400.2 463.7 400.7 464.7 401.2 464.7 401.7 464.6 402.3 464.7 402.8 464.8 403.3 464.9 403.8 465.0 404.3 464.8 404.8 465.0 405.3 464.9 405.8 464.8 406.3 464.8 406.8 464.9 407.3 465.0 407.8 464.2 408.3 457.9 408.5 453.4 408.7 451.7 408.8 452.4 408.9 453.7 409.3 459.6 409.3 460.3 409.8 463.7 410.3 464.5 410.8 464.8 411.3 464.6 411.8 465.0 412.3 464.9 412.8 464.7 413.3 464.8 413.8 464.6 414.3 465.0 414.8 464.9 415.3 465.1 415.8 465.0 416.3 464.9 416.8 465.0 417.3 464.9 417.8 464.6 418.3 464.9 418.8 464.5 419.3 464.6 419.8 464.8 420.3 464.1 420.8 463.7 421.3 463.3 421.7 463.6 421.8 463.1 421.8 463.0 422.0 463.7 422.3 463.5 422.4 464.0 422.8 464.3 423.4 464.7 423.9 465.0 424.4 464.8 424.9 465.0 425.4 464.5 425.9 465.0 426.4 464.8 426.9 464.9 427.4 464.6 427.9 464.9 428.4 465.1 428.9 464.5 429.4 464.7 429.9 464.8 430.4 465.0 430.9 464.6 431.4 464.6 431.9 464.6 432.4 464.9 432.9 464.9 433.4 464.7 433.9 464.7 434.4 464.7 434.9 464.5 435.4 464.2 435.9 463.6 436.4 463.4 436.6 463.6 436.8 463.2 436.9 463.5 437.0 463.2 437.4 463.9 437.4 463.9 437.9 464.3 438.4 464.5 438.9 464.7 439.4 464.8 439.9 465.0 440.4 464.5 440.9 464.5 441.4 464.9 441.9 465.0 442.4 464.8 442.9 464.7 443.4 464.9 444.0 464.6 444.5 464.6 445.0 464.6 445.5 464.8 446.0 464.6 446.5 464.5 447.0 464.1 447.5 462.7 447.7 461.8 447.9 461.9 448.0 461.8 448.1 462.3 448.5 463.1 448.5 463.0 449.0 464.1 449.5 464.4 450.0 464.7 450.5 464.7 451.0 464.5 451.5 464.5 452.0 462.0 452.5 454.3 452.5 453.4 452.6 453.0 452.8 454.4 453.0 457.2 453.2 460.4 453.5 463.3 454.0 464.4 454.5 464.5 455.0 464.6 455.5 464.8 456.0 464.9 456.5 464.6 457.0 464.8 457.5 465.0 458.0 464.7 458.5 464.5 459.0 464.5 459.5 464.8 460.0 464.8 460.5 465.0 461.0 464.8 461.5 464.2 462.0 463.5 462.5 462.8 462.7 462.6 462.9 462.8 463.0 463.0 463.1 463.1 463.5 463.2 463.5 463.7 464.0 464.0 464.5 464.5 465.1 464.8 465.6 464.4 466.1 464.4 466.6 464.9 467.1 464.6 467.6 464.6 468.1 464.7 468.6 464.8 469.1 464.4 469.6 464.6 470.1 464.6 470.6 464.7 471.1 464.5 471.6 464.7 472.1 464.9 472.6 464.6 473.1 464.7 473.6 464.4 474.1 464.5 474.6 464.8 475.1 464.4 475.6 464.9 476.1 464.9 476.6 464.4 477.1 464.9 477.6 464.5 478.1 464.5 478.6 463.7 479.1 461.9 479.6 460.9 479.6 460.9 479.8 460.8 480.0 460.9 480.1 461.5 480.4 462.3 480.6 462.9 481.1 463.9 481.6 464.2 482.1 464.6 482.6 464.5 483.1 464.3 483.6 458.8 483.9 453.2 484.1 451.4 484.1 451.9 484.3 453.6 484.6 459.3 484.7 460.2 485.1 463.7 485.7 464.0 486.2 464.7 486.7 464.3 487.2 464.5 487.7 464.7 488.2 464.7 488.7 464.2 489.2 454.4 489.6 430.2 489.7 427.1 489.8 425.4 490.0 430.6 490.2 441.6 490.3 449.9 490.7 459.3 491.2 462.5 491.7 463.3 492.2 463.7 492.7 464.1 493.2 464.6 493.7 464.2 494.2 464.5 494.7 464.4 495.2 464.7 495.7 464.5 496.2 464.5 496.7 464.5 497.2 464.6 497.7 464.8 498.2 464.5 498.7 464.8 499.2 464.4 499.7 464.5 500.2 464.3 500.7 464.4 501.2 464.8 501.7 464.7 502.2 464.4 502.7 464.4 503.2 464.5 503.7 464.7 504.2 464.8 504.7 464.7 505.2 464.6 505.7 464.4 506.2 464.5 506.8 464.4 507.3 464.6 507.8 464.6 508.3 464.4 508.8 464.4 509.3 464.7 509.8 464.3 510.3 464.7 510.8 464.8 511.3 464.8 511.8 464.5 512.3 464.6 512.8 464.6 513.3 464.6 513.8 464.8 514.3 464.7 514.8 464.0 515.3 459.5 515.5 455.7 515.7 454.6 515.8 455.2 515.9 455.8 516.3 461.3 516.3 461.5 516.8 464.1 517.3 464.4 517.8 464.4 518.3 463.3 518.8 456.7 518.9 454.1 519.1 453.0 519.3 454.8 519.3 454.8 519.7 460.7 519.8 462.3 520.3 464.4 520.8 464.2 521.3 464.6 521.8 464.6 522.3 464.2 522.8 464.2 523.3 463.7 523.8 462.9 524.3 462.7 524.5 462.8 524.7 462.4 524.8 462.9 524.9 462.9 525.3 462.9 525.3 463.5 525.8 463.8 526.3 464.4 526.8 464.5 527.4 464.6 527.9 464.4 528.4 464.7 528.9 464.8 529.4 464.7 529.9 464.5 530.4 464.8 530.9 464.5 531.4 464.0 531.9 463.9 532.4 463.9 532.9 464.0 533.4 462.7 533.9 459.1 533.9 459.1 534.0 458.4 534.2 459.2 534.4 460.8 534.6 462.1 534.9 463.6 535.4 464.5 535.9 464.1 536.4 463.7 536.9 463.5 537.4 461.3 537.6 460.3 537.8 460.0 537.9 460.5 538.0 460.8 538.3 461.7 538.4 461.6 538.9 463.3 539.4 464.4 539.9 463.7 540.4 464.0 540.9 463.7 541.4 463.7 541.9 463.6 542.4 463.9 542.9 463.6 543.4 463.4 543.9 463.5 544.4 463.4 544.9 463.5 545.4 462.3 545.9 461.4 546.4 461.0 546.6 460.8 546.8 461.1 546.9 460.5 547.0 461.0 547.4 461.5 547.4 461.2 547.9 463.2 548.5 462.9 549.0 463.1 549.5 463.7 550.0 463.3 550.5 463.8 551.0 463.5 551.5 463.2 552.0 463.1 552.5 463.9 553.0 463.3 553.5 463.9 554.0 463.5 554.5 463.8 555.0 462.7 555.5 462.1 556.0 461.4 556.3 461.9 556.5 461.6 556.5 461.3 556.7 461.1 557.0 462.2 557.0 462.6 557.5 462.6 558.0 462.4 558.5 462.6 559.0 462.8 559.5 462.9 560.0 462.8 560.5 462.8 561.0 463.5 561.5 463.7 562.0 462.9 562.5 463.8 563.0 463.2 563.5 463.5 564.0 463.6 564.5 463.7 565.0 462.5 565.5 462.9 566.0 463.2 566.5 463.6 567.0 462.5 567.5 462.8 568.0 463.4 568.5 462.5 569.1 462.8 569.6 462.8 570.1 463.2 570.6 463.5 571.1 462.5 571.6 463.2 572.1 463.2 572.6 463.3 573.1 462.4 573.6 461.0 574.1 458.0 574.1 458.0 574.2 457.6 574.4 458.8 574.6 459.0 574.8 459.9 575.1 460.9 575.6 462.7 576.1 462.0 576.6 460.2 576.9 458.9 577.0 458.8 577.1 458.5 577.2 459.5 577.6 460.0 577.6 460.6 578.1 462.4 578.6 462.9 579.1 462.3 579.6 462.5 580.1 463.2 580.6 462.9 581.1 463.2 581.6 463.2 582.1 462.7 582.6 463.2 583.1 463.0 583.6 462.5 584.1 462.6 584.6 462.2 585.1 462.6 585.6 463.2 586.1 462.2 586.6 462.7 587.1 462.2 587.6 462.1 588.1 462.8 588.6 462.3 589.1 462.1 589.6 462.2 590.2 462.8 590.7 462.7 591.2 462.0 591.7 462.2 592.2 463.1 592.7 462.2 593.2 462.6 593.7 462.4 594.2 462.9 594.7 462.6 595.2 462.8 595.7 462.5 596.2 462.1 596.7 462.0 597.2 461.8 597.7 462.6 598.2 461.5 598.7 461.2 599.2 462.0 599.7 460.7 600.2 461.2 600.7 460.0 601.2 460.4 601.2 460.1 601.4 460.8 601.5 460.7 601.7 460.8 601.9 461.1 602.2 461.4 602.7 461.0 603.2 461.6 603.7 461.6 604.2 461.4 604.7 462.4 605.2 462.3 605.7 462.6 606.2 461.9 606.7 462.3 607.2 462.2 607.7 462.6 608.2 461.8 608.7 462.1 609.2 462.2 609.7 461.7 610.2 462.3 610.7 462.4 611.3 460.9 611.8 458.4 612.1 456.7 612.3 455.9 612.3 456.0 612.4 457.3 612.8 458.1 612.8 458.6 613.3 460.3 613.8 461.4 614.3 461.6 614.8 462.6 615.3 462.4 615.8 462.6 616.3 462.7 616.8 462.2 617.3 462.6 617.8 462.1 618.3 462.0 618.8 462.6 619.3 462.6 619.8 462.6 620.3 462.0 620.8 462.4 621.3 461.9 621.8 462.6 622.3 462.5 622.8 461.8 623.3 462.5 623.8 461.6 624.3 461.5 624.8 462.2 625.3 461.7 625.8 462.0 626.3 462.1 626.8 461.4 627.3 462.2 627.8 461.6 628.3 461.8 628.8 461.7 629.3 462.1 629.8 462.1 630.3 461.6 630.8 461.3 631.3 461.4 631.9 461.2 632.4 460.1 632.9 459.5 633.0 460.1 633.1 460.0 633.3 460.5 633.4 460.5 633.7 460.9 633.9 460.5 634.4 460.9 634.9 461.3 635.4 461.6 635.9 461.7 636.4 461.7 636.9 461.5 637.4 462.1 637.9 461.4 638.4 461.6 638.9 462.1 639.4 462.0 639.9 461.3 640.4 461.2 640.9 461.9 641.4 460.9 641.9 461.0 642.4 461.4 642.9 461.1 643.4 460.2 643.9 459.6 644.2 459.6 644.4 460.3 644.4 459.9 644.6 460.6 644.9 460.7 644.9 460.9 645.4 460.2 645.9 460.7 646.4 460.7 646.9 461.3 647.4 461.2 647.9 460.8 648.4 461.4 648.9 460.8 649.4 461.1 649.9 461.0 650.4 461.6 650.9 461.0 651.4 460.4 651.9 459.7 652.4 459.7 652.6 459.9 652.8 459.9 653.0 460.3 653.0 460.2 653.3 459.8 653.5 459.8 654.0 460.9 654.5 461.3 655.0 461.1 655.5 461.5 656.0 461.2 656.5 460.9 657.0 460.7 657.5 460.5 658.0 461.3 658.5 461.5 659.0 461.5 659.5 461.0 660.0 461.2 660.5 461.5 661.0 461.4 661.5 461.1 662.0 460.9 662.5 461.0 663.0 460.6 663.5 460.6 664.0 461.1 664.5 461.5 665.0 461.0 665.5 460.8 666.0 460.7 666.5 460.8 667.0 461.2 667.5 460.8 668.0 461.4 668.5 460.4 669.0 460.6 669.5 460.8 670.0 460.7 670.5 461.2 671.0 461.1 671.5 461.2 672.0 460.8 672.5 460.1 673.0 460.8 673.6 460.7 674.1 460.6 674.6 460.4 675.1 460.9 675.6 461.1 676.1 460.1 676.6 460.8 677.1 460.4 677.6 460.6 678.1 461.0 678.6 461.1 679.1 460.6 679.6 459.8 680.1 460.3 680.6 458.9 681.1 458.8 681.1 459.4 681.3 458.7 681.5 458.8 681.6 459.7 681.8 459.9 682.1 459.3 682.6 459.8 683.1 459.9 683.6 459.8 684.1 460.0 684.6 460.8 685.1 459.7 685.6 459.9 686.1 459.8 686.6 459.6 687.1 460.1 687.6 460.4 688.1 460.5 688.6 460.2 689.1 460.4 689.6 459.4 690.1 459.7 690.6 460.5 691.1 459.4 691.6 459.6 692.1 459.8 692.6 459.5 693.1 459.8 693.6 459.2 694.1 459.4 694.7 460.3 695.2 459.3 695.7 460.1 696.2 459.2 696.7 460.2 697.2 459.8 697.7 459.7 698.2 459.0 698.7 458.7 699.2 459.2 699.7 458.0 700.2 457.6 700.3 458.3 700.5 458.3 700.7 457.5 700.7 458.6 701.0 458.3 701.2 458.3 701.7 458.3 702.2 459.0 702.7 459.8 703.2 459.0 703.7 458.8 704.2 458.8 704.7 458.7 705.2 459.0 705.7 459.6 706.2 458.6 706.7 458.7 707.2 459.6 707.7 459.6 708.2 459.6 708.7 458.7 709.2 458.8 709.7 459.4 710.2 458.9 710.7 459.1 711.2 458.5 711.7 457.8 712.2 457.7 712.7 457.7 713.1 457.6 713.2 457.3 713.2 457.2 713.4 457.4 713.7 457.5 713.8 457.7 714.2 458.4 714.7 457.9 715.3 458.6 715.8 459.1 716.3 459.0 716.8 458.1 717.3 459.1 717.8 458.9 718.3 458.0 718.8 458.1 719.3 457.9 719.8 457.7 720.3 458.8 720.8 458.0 721.3 458.5 721.8 457.6 722.3 457.4 722.8 458.4 723.3 458.2 723.8 458.4 724.3 458.0 724.8 457.7 725.3 458.0 725.8 457.1 726.3 457.6 726.8 457.4 727.3 457.0 727.8 457.5 728.3 457.1 728.8 457.3 729.3 457.1 729.8 456.9 730.3 456.9 730.8 457.2 731.3 457.6 731.8 457.5 732.3 457.3 732.8 457.2 733.3 456.5 733.8 457.3 734.3 456.4 734.8 456.2 735.3 456.6 735.8 456.8 736.4 456.3 736.9 456.6 737.4 456.1 737.9 456.9 738.4 456.2 738.9 456.2 739.4 456.2 739.9 456.5 740.4 456.6 740.9 456.0 741.4 455.9 741.9 456.0 742.4 455.3 742.9 455.7 743.4 456.1 743.9 455.9 744.4 451.8 744.5 450.4 744.7 448.4 744.9 450.5 744.9 450.1 745.3 454.1 745.4 454.9 745.9 455.8 746.4 455.2 746.9 455.7 747.4 455.4 747.9 454.9 748.4 454.7 748.9 454.9 749.4 454.7 749.9 454.6 750.4 454.8 750.9 455.0 751.4 454.6 751.9 453.9 752.4 453.9 752.9 454.0 753.4 454.2 753.9 453.6 754.4 453.4 754.9 453.6 755.4 453.5 755.9 453.1 756.4 453.6 757.0 454.0 757.5 453.5 758.0 453.6 758.5 453.6 759.0 453.6 759.5 453.6 760.0 452.9 760.5 453.1 761.0 452.4 761.5 453.2 762.0 452.5 762.5 452.5 763.0 452.9 763.5 452.1 764.0 451.9 764.5 452.6 765.0 452.2 765.5 451.5 766.0 451.4 766.5 451.6 767.0 451.1 767.5 451.9 768.0 451.0 768.5 450.8 769.0 450.7 769.5 450.5 770.0 450.1 770.5 450.0 771.0 449.8 771.3 449.5 771.5 449.0 771.5 450.1 771.7 449.8 772.0 449.2 772.1 449.6 772.5 450.2 773.0 450.7 773.5 449.8 774.0 449.9 774.5 450.7 775.0 450.7 775.5 451.4 776.0 451.3 776.5 450.8 777.0 450.9 777.5 451.1 778.1 451.5 778.6 450.6 779.1 450.9 779.6 450.5 780.1 451.2 780.6 450.4 781.1 451.5 781.6 451.0 782.1 451.1 782.6 450.5 783.1 450.7 783.6 451.0 784.1 451.4 784.6 451.0 785.1 450.7 785.6 451.6 786.1 451.2 786.6 451.0 787.1 450.6 787.6 450.8 788.1 451.5 788.6 450.6 789.1 451.0 789.6 451.1 790.1 450.8 790.6 451.3 791.1 451.5 791.6 451.4 792.1 451.3 792.6 450.7 793.1 450.5 793.6 450.9 794.1 450.8 794.6 450.7 795.1 451.5 795.6 450.7 796.1 451.5 796.6 451.6 797.1 450.6 797.6 451.6 798.1 451.0 798.6 450.8 799.2 450.7 799.7 450.6 800.2 451.1 800.7 451.0 801.2 451.6 801.7 451.6 802.2 450.6 802.7 451.1 803.2 451.1 803.7 450.8 804.2 450.9 804.7 450.9 805.2 451.5 805.7 451.1 806.2 450.8 806.7 450.9 807.2 451.2 807.7 451.4 808.2 451.0 808.7 451.5 809.2 451.0 809.7 451.5 810.2 451.5 810.7 450.9 811.2 451.6 811.7 451.2 812.2 451.4 812.7 451.5 813.2 451.5 813.7 451.3 814.2 450.9 814.7 451.7 815.2 451.8 815.7 451.4 816.2 451.5 816.7 451.2 817.2 451.9 817.7 451.7 818.2 451.1 818.7 451.9 819.2 452.1 819.8 451.3 820.3 452.1 820.8 451.5 821.3 451.1 821.8 451.8 822.3 451.3 822.8 451.8 823.3 451.7 823.8 451.1 824.3 451.6 824.8 452.0 825.3 451.6 825.8 451.6 826.3 452.0 826.8 451.6 827.3 451.6 827.8 451.7 828.3 452.0 828.8 451.3 829.3 451.2 829.8 452.0 830.3 451.7 830.8 451.4 831.3 452.0 831.8 452.0 832.3 451.4 832.8 451.8 833.3 451.5 833.8 451.3 834.3 450.6 834.8 450.2 834.9 451.0 835.1 451.0 835.3 450.6 835.3 450.8 835.7 451.0 835.8 450.7 836.3 451.4 836.8 451.3 837.3 451.3 837.8 451.1 838.3 451.7 838.8 451.5 839.3 452.1 839.8 451.4 840.3 451.7 840.9 451.5 841.4 451.8 841.9 452.0 842.4 451.4 842.9 451.4 843.4 451.9 843.9 451.6 844.4 451.9 844.9 451.5 845.4 451.5 845.9 452.0 846.4 452.5 846.9 452.4 847.4 452.0 847.9 451.9 848.4 451.5 848.9 451.7 849.4 451.8 849.9 452.6 850.4 451.6 850.9 452.6 851.4 452.0 851.9 452.0 852.4 451.8 852.9 452.6 853.4 451.7 853.9 452.2 854.4 452.1 854.9 451.7 855.4 451.8 855.9 452.7 856.4 452.5 856.9 452.4 857.4 452.6 857.9 451.7 858.4 452.4 858.9 452.5 859.4 451.9 859.9 452.1 860.4 452.8 860.9 452.0 861.5 452.5 862.0 451.8 862.5 452.4 863.0 452.0 863.5 452.3 864.0 452.1 864.5 452.7 865.0 452.6 865.5 452.3 866.0 452.5 866.5 452.2 867.0 452.7 867.5 452.0 868.0 452.4 868.5 452.4 869.0 452.2 869.5 451.8 870.0 452.0 870.5 452.5 871.0 452.0 871.5 452.7 872.0 452.4 872.5 452.9 873.0 452.8 873.5 452.7 874.0 452.3 874.5 451.9 875.0 452.5 875.5 452.7 876.0 453.0 876.5 452.1 877.0 452.1 877.5 453.0 878.0 452.8 878.5 452.5 879.0 452.8 879.5 452.1 880.0 452.6 880.5 452.7 881.0 452.7 881.5 452.1 882.0 452.1 882.6 452.7 883.1 453.0 883.6 452.1 884.1 452.0 884.6 452.1 885.1 452.9 885.6 452.5 886.1 452.6 886.6 453.2 887.1 452.8 887.6 452.3 888.1 452.9 888.6 452.1 889.1 452.4 889.6 452.9 890.1 452.3 890.6 452.1 891.1 452.7 891.6 452.5 892.1 453.3 892.6 452.2 893.1 453.1 893.6 452.6 894.1 453.1 894.6 452.6 895.1 452.8 895.6 452.2 896.1 451.6 896.6 451.3 897.1 451.1 897.6 450.1 897.8 450.0 898.0 450.4 898.1 450.2 898.4 450.7 898.6 451.3 899.1 451.9 899.6 452.4 900.1 452.4 900.6 452.2 901.1 452.3 901.6 452.7 902.1 452.5 902.6 453.0 903.2 452.6 903.7 453.2 904.2 453.0 904.7 453.1 905.2 453.2 905.7 452.9 906.2 452.8 906.7 452.7 907.2 452.4 907.7 453.3 908.2 453.0 908.7 452.5 909.2 453.5 909.7 453.1 910.2 453.1 910.7 452.9 911.2 452.6 911.7 453.6 912.2 452.6 912.7 452.9 913.2 453.6 913.7 452.6 914.2 453.1 914.7 453.0 915.2 452.8 915.7 453.6 916.2 453.0 916.7 452.5 917.2 453.1 917.7 452.5 918.2 453.4 918.7 453.6 919.2 453.6 919.7 452.6 920.2 453.4 920.7 452.9 921.2 453.1 921.7 452.9 922.2 453.0 922.7 452.8 923.2 453.4 923.7 452.7 924.3 453.8 924.8 452.7 925.3 453.8 925.8 452.9 926.3 452.8 926.8 453.6 927.3 453.3 927.8 453.6 928.3 453.3 928.8 453.4 929.3 452.8 929.8 453.5 930.3 453.3 930.8 453.9 931.3 452.7 931.8 452.8 932.3 453.6 932.8 453.9 933.3 453.3 933.8 453.6 934.3 453.5 934.8 453.3 935.3 453.4 935.8 453.5 936.3 452.8 936.8 453.2 937.3 453.7 937.8 453.1 938.3 453.4 938.8 453.2 939.3 453.3 939.8 453.7 940.3 453.8 940.8 454.0 941.3 453.5 941.8 453.1 942.3 453.3 942.8 453.0 943.3 453.2 943.8 453.6 944.3 453.7 944.9 453.2 945.4 453.2 945.9 453.1 946.4 453.2 946.9 453.6 947.4 453.3 947.9 454.1 948.4 453.7 948.9 453.4 949.4 453.5 949.9 453.1 950.4 453.9 950.9 453.9 951.4 453.5 951.9 453.9 952.4 453.4 952.9 453.3 953.4 453.4 953.9 453.3 954.4 453.8 954.9 453.9 955.4 454.0 955.9 453.2 956.4 454.0 956.9 453.7 957.4 453.6 957.9 453.7 958.4 453.7 958.9 453.4 959.4 453.6 959.9 454.0 960.4 454.0 960.9 454.3 961.4 453.4 961.9 454.3 962.4 454.2 962.9 454.1 963.4 454.4 963.9 453.4 964.4 454.2 964.9 454.3 965.4 453.4 966.0 454.0 966.5 454.4 967.0 453.6 967.5 454.3 968.0 454.4 968.5 453.7 969.0 453.2 969.5 452.9 970.0 453.1 970.5 451.9 971.0 451.3 971.1 451.4 971.3 452.0 971.5 451.3 971.5 451.1 971.9 452.6 972.0 452.0 972.5 452.7 973.0 453.9 973.5 453.4 974.0 453.4 974.5 454.4 975.0 453.7 975.5 453.7 976.0 454.5 976.5 453.7 977.0 454.5 977.5 453.8 978.0 453.8 978.5 453.7 979.0 454.1 979.5 454.1 980.0 454.0 980.5 454.1 981.0 453.9 981.5 454.5 982.0 454.6 982.5 454.4 983.0 454.5 983.5 453.6 984.0 453.8 984.5 453.8 985.0 453.7 985.5 454.7 986.0 454.7 986.6 454.7 987.1 454.3 987.6 453.7 988.1 454.1 988.6 453.7 989.1 454.7 989.6 453.9 990.1 454.0 990.6 454.8 991.1 453.9 991.6 454.8 992.1 454.0 992.6 454.5 993.1 453.8 993.6 454.8 994.1 454.2 994.6 454.1 995.1 454.5 995.6 454.4 996.1 454.0 996.6 453.9 997.1 454.4 997.6 453.8 998.1 454.8 998.6 454.2 999.1 454.0 999.6 454.2 1000.1 453.9 1000.6 454.2 1001.1 454.5 1001.6 454.3 1002.1 454.2 1002.6 454.2 1003.1 454.4 1003.6 454.8 1004.1 454.4 1004.6 454.8 1005.1 454.4 1005.6 454.0 1006.1 454.1 1006.6 454.9 1007.1 454.5 1007.7 454.4 1008.2 454.5 1008.7 454.9 1009.2 454.4 1009.7 454.4 1010.2 454.4 1010.7 454.0 1011.2 454.6 1011.7 454.5 1012.2 454.6 1012.7 454.5 1013.2 454.5 1013.7 454.8 1014.2 454.2 1014.7 455.2 1015.2 454.1 1015.7 455.1 1016.2 454.2 1016.7 455.0 1017.2 454.4 1017.7 454.1 1018.2 454.7 1018.7 455.1 1019.2 455.1 1019.7 455.1 1020.2 455.3 1020.7 454.2 1021.2 454.6 1021.7 454.2 1022.2 455.0 1022.7 454.7 1023.2 455.0 1023.7 455.1 1024.2 455.3 1024.7 455.0 1025.2 455.2 1025.7 454.8 1026.2 454.3 1026.7 455.3 1027.2 454.3 1027.7 454.3 1028.2 455.2 1028.8 454.6 1029.3 455.0 1029.8 454.3 1030.3 454.5 1030.8 455.1 1031.3 454.3 1031.8 454.9 1032.3 455.4 1032.8 454.5 1033.3 455.1 1033.8 455.2 1034.3 455.0 1034.8 455.2 1035.3 455.2 1035.8 454.3 1036.3 454.6 1036.8 455.0 1037.3 455.5 1037.8 454.6 1038.3 455.1 1038.8 454.5 1039.3 455.4 1039.8 454.9 1040.3 455.0 1040.8 455.2" transform="matrix(0.1337 0 0 0.1401 -30.40 -34.20)" fill="none" stroke="#c45a5e" stroke-width="0.8" vector-effect="non-scaling-stroke"/><path d="M7.5 2V35.5H108" stroke="#777" stroke-width="0.7" fill="none"/><path d="M108 35.5V2H8" stroke="#ddd" stroke-width="0.5" fill="none"/><g fill="#5a62bc" opacity="0.8"><rect x="10.9" y="3.2" width="3.4" height="1.7" /><rect x="14.2" y="0.6" width="3.4" height="1.7" /><rect x="9.1" y="27.4" width="3.4" height="1.7" /><rect x="12.8" y="26.6" width="3.4" height="1.7" /><rect x="15.9" y="27.8" width="3.4" height="1.7" /><rect x="17.7" y="23.6" width="3.4" height="1.7" /><rect x="19.3" y="27.8" width="3.4" height="1.7" /><rect x="22.6" y="26.5" width="3.4" height="1.7" /><rect x="28.5" y="26.6" width="3.4" height="1.7" /><rect x="31.5" y="26.4" width="4.1" height="1.7" /><rect x="33.2" y="22.9" width="4.1" height="1.7" /><rect x="27.1" y="28.2" width="3.4" height="1.7" /><rect x="29.6" y="28.2" width="3.4" height="1.7" /><rect x="37.2" y="26.8" width="4.1" height="1.7" /><rect x="40.8" y="27.8" width="4.1" height="1.7" /><rect x="44.7" y="27.4" width="4.1" height="1.7" /><rect x="49.7" y="27.1" width="4.1" height="1.7" /><rect x="55.0" y="27.7" width="4.1" height="1.7" /><rect x="58.9" y="27.4" width="4.1" height="1.7" /><rect x="63.2" y="27.5" width="4.1" height="1.7" /><rect x="67.3" y="26.3" width="4.1" height="1.7" /><rect x="72.5" y="26.3" width="4.1" height="1.7" /><rect x="79.4" y="26.4" width="4.1" height="1.7" /><rect x="87.9" y="26.4" width="4.1" height="1.7" /><rect x="97.7" y="26.6" width="4.1" height="1.7" /></g><g fill="#8a8a8a"><rect x="1.5" y="30.5" width="5" height="1.3"/><rect x="1.5" y="26.7" width="5" height="1.3"/><rect x="1.5" y="22.9" width="5" height="1.3"/><rect x="1.5" y="19.2" width="5" height="1.3"/><rect x="1.5" y="15.4" width="5" height="1.3"/><rect x="1.5" y="11.6" width="5" height="1.3"/><rect x="1.5" y="7.8" width="5" height="1.3"/><rect x="1.5" y="4.1" width="5" height="1.3"/><rect x="19.6" y="36.6" width="1.8" height="1.2"/><rect x="32.1" y="36.6" width="1.8" height="1.2"/><rect x="44.6" y="36.6" width="1.8" height="1.2"/><rect x="57.1" y="36.6" width="1.8" height="1.2"/><rect x="69.6" y="36.6" width="1.8" height="1.2"/><rect x="82.1" y="36.6" width="1.8" height="1.2"/><rect x="94.6" y="36.6" width="1.8" height="1.2"/><rect x="107.1" y="36.6" width="1.8" height="1.2"/><rect x="46" y="38" width="13" height="1.2"/></g><path d="M0.5 39.8H108" stroke="#4a4a4a" stroke-width="1.1" stroke-dasharray="6 1.5 3 1 8 1.2 4 1"/><path d="M292.25 749.5V556.2M293.50 749.5V568.4M294.50 749.5V586.5M295.50 749.5V660.7M296.30 749.5V586.5M297.25 749.5V550.2M298.25 749.5V691.8M300.25 749.5V730.1M301.50 749.5V741.0M302.50 749.5V741.5M303.50 749.5V742.2M305.25 749.5V745.9M310.50 749.5V730.1M311.50 749.5V594.8M312.30 749.5V594.8M313.50 749.5V559.6M314.50 749.5V594.3M315.25 749.5V736.2M316.50 749.5V737.4M318.25 749.5V741.0M321.50 749.5V744.6M326.50 749.5V732.5M327.75 749.5V727.7M329.25 749.5V681.6M330.25 749.5V725.2M331.50 749.5V694.9M332.75 749.5V719.4M334.00 749.5V735.0M336.50 749.5V744.6M338.00 749.5V747.1M342.75 749.5V732.5M343.50 749.5V695.4M344.75 749.5V718.0M346.00 749.5V695.4M347.25 749.5V590.9M348.50 749.5V612.2M349.75 749.5V642.3M350.75 749.5V696.1M352.00 749.5V739.8M354.00 749.5V744.6M355.50 749.5V745.9M358.50 749.5V739.8M361.00 749.5V730.1M363.50 749.5V732.5M364.50 749.5V728.9M365.75 749.5V600.8M367.00 749.5V687.9M368.25 749.5V738.6M370.25 749.5V742.2M371.00 749.5V743.7M372.90 749.5V745.9M378.70 749.5V738.8M380.00 749.5V733.0M381.20 749.5V735.0M382.50 749.5V734.0M383.90 749.5V732.0M385.40 749.5V731.1M387.00 749.5V745.9M390.00 749.5V747.1M394.70 749.5V743.7M396.10 749.5V742.2M397.40 749.5V670.2M398.40 749.5V712.2M399.90 749.5V721.1M401.90 749.5V739.8M403.80 749.5V743.7M405.30 749.5V737.4M407.00 749.5V747.1M411.50 749.5V735.0M412.90 749.5V727.2M414.40 749.5V614.9M415.40 749.5V705.9M416.90 749.5V721.4M418.60 749.5V742.2M420.20 749.5V747.1M428.30 749.5V741.5M429.80 749.5V745.9M431.40 749.5V701.0M432.50 749.5V706.8M433.70 749.5V740.5M436.00 749.5V747.1M441.40 749.5V725.2M443.00 749.5V742.2M444.30 749.5V736.2M445.30 749.5V730.6M446.80 749.5V732.0M448.20 749.5V731.6M449.50 749.5V742.2M451.10 749.5V742.2M454.00 749.5V747.1M460.70 749.5V745.9M462.30 749.5V716.3M463.60 749.5V721.1M465.00 749.5V732.5M466.50 749.5V737.4M468.00 749.5V744.6M477.70 749.5V742.2M479.90 749.5V720.6M481.70 749.5V737.9M483.20 749.5V742.2M485.40 749.5V747.1M494.50 749.5V738.6M496.30 749.5V737.1M498.50 749.5V732.0M499.50 749.5V744.6M511.20 749.5V737.4M512.60 749.5V738.6M514.10 749.5V739.8M515.90 749.5V744.6M517.20 749.5V746.6M528.60 749.5V738.1M530.10 749.5V741.0M531.70 749.5V745.1M533.50 749.5V744.6M543.50 749.5V747.1M545.30 749.5V743.4M547.10 749.5V745.9M548.60 749.5V743.4M550.40 749.5V747.1M690.00 749.5V747.6M698.00 749.5V748.3M712.00 749.5V745.9M790.00 749.5V748.0M808.00 749.5V748.3M558.55 749.5V749.3M562.48 749.5V749.1M580.82 749.5V749.0M600.47 749.5V749.0M609.64 749.5V749.0M635.84 749.5V749.3M638.46 749.5V749.1M652.87 749.5V749.3M660.73 749.5V749.0M731.47 749.5V749.3M738.02 749.5V749.3M764.22 749.5V749.1M766.84 749.5V749.0M783.87 749.5V749.1M803.52 749.5V749.1M806.14 749.5V749.0M814.00 749.5V749.1M831.03 749.5V749.3M849.37 749.5V749.1M866.40 749.5V749.3M875.57 749.5V749.1M878.19 749.5V749.1M884.74 749.5V749.3M892.60 749.5V749.0M905.70 749.5V749.3M918.80 749.5V749.3M924.04 749.5V749.0M931.90 749.5V749.0M951.55 749.5V749.1M968.58 749.5V749.3M979.06 749.5V749.3M985.61 749.5V749.1M992.16 749.5V749.1M994.78 749.5V749.0M1015.74 749.5V749.1" transform="matrix(0.1347 0 0 0.1355 -31.20 -31.26)" fill="none" stroke="#8a1010" stroke-width="0.8" vector-effect="non-scaling-stroke"/><path d="M7.5 41V73.5H108" stroke="#777" stroke-width="0.7" fill="none"/><path d="M8 70.3H108" stroke="#ddd" stroke-width="0.4"/><g fill="#4a52b4" opacity="0.85"><rect x="7.7" y="39.5" width="3.6" height="1.8" /><rect x="7.2" y="40.7" width="5.0" height="1.8" /><rect x="11.5" y="40.7" width="3.9" height="1.8" /><rect x="11.2" y="42.0" width="4.5" height="1.8" /><rect x="14.1" y="44.8" width="3.7" height="1.8" /><rect x="13.9" y="46.0" width="4.3" height="1.8" /><rect x="17.7" y="46.1" width="3.9" height="1.8" /><rect x="17.5" y="47.5" width="4.4" height="1.8" /><rect x="22.9" y="48.1" width="4.3" height="1.8" /><rect x="22.8" y="49.2" width="4.4" height="1.8" /><rect x="20.5" y="55.5" width="4.4" height="1.8" /><rect x="20.5" y="56.7" width="4.2" height="1.8" /><rect x="18.5" y="64.2" width="4.2" height="1.8" /><rect x="18.8" y="65.4" width="3.7" height="1.8" /><rect x="25.1" y="59.7" width="4.4" height="1.8" /><rect x="25.1" y="61.1" width="4.4" height="1.8" /><rect x="28.9" y="60.5" width="4.4" height="1.8" /><rect x="28.9" y="61.9" width="4.4" height="1.8" /><rect x="32.6" y="61.9" width="4.5" height="1.8" /><rect x="32.6" y="63.3" width="4.4" height="1.8" /><rect x="36.4" y="63.9" width="4.5" height="1.8" /><rect x="36.7" y="65.3" width="3.7" height="1.8" /><rect x="40.2" y="64.7" width="4.5" height="1.8" /><rect x="40.6" y="66.1" width="3.7" height="1.8" /><rect x="62.7" y="66.1" width="4.7" height="1.8" /><rect x="63.1" y="67.4" width="3.5" height="1.8" /></g><g fill="#6a6a6a"><rect x="1.5" y="69.7" width="5" height="1.3"/><rect x="1.5" y="66.4" width="5" height="1.3"/><rect x="1.5" y="63.1" width="5" height="1.3"/><rect x="1.5" y="59.8" width="5" height="1.3"/><rect x="1.5" y="56.6" width="5" height="1.3"/><rect x="1.5" y="53.3" width="5" height="1.3"/><rect x="1.5" y="50.0" width="5" height="1.3"/><rect x="1.5" y="46.7" width="5" height="1.3"/><rect x="1.5" y="43.4" width="5" height="1.3"/><rect x="8.1" y="74.2" width="2" height="1.2"/><rect x="11.6" y="74.2" width="2" height="1.2"/><rect x="15.1" y="74.2" width="2" height="1.2"/><rect x="18.7" y="74.2" width="2" height="1.2"/><rect x="22.2" y="74.2" width="2" height="1.2"/><rect x="25.7" y="74.2" width="2" height="1.2"/><rect x="29.3" y="74.2" width="2" height="1.2"/><rect x="32.8" y="74.2" width="2" height="1.2"/><rect x="36.3" y="74.2" width="2" height="1.2"/><rect x="39.9" y="74.2" width="2" height="1.2"/><rect x="43.4" y="74.2" width="2" height="1.2"/><rect x="46.9" y="74.2" width="2" height="1.2"/><rect x="50.5" y="74.2" width="2" height="1.2"/><rect x="54.0" y="74.2" width="2" height="1.2"/><rect x="57.5" y="74.2" width="2" height="1.2"/><rect x="61.1" y="74.2" width="2" height="1.2"/><rect x="64.6" y="74.2" width="2" height="1.2"/><rect x="68.1" y="74.2" width="2" height="1.2"/><rect x="71.7" y="74.2" width="2" height="1.2"/><rect x="75.2" y="74.2" width="2" height="1.2"/><rect x="78.7" y="74.2" width="2" height="1.2"/><rect x="82.3" y="74.2" width="2" height="1.2"/><rect x="85.8" y="74.2" width="2" height="1.2"/><rect x="89.3" y="74.2" width="2" height="1.2"/><rect x="92.9" y="74.2" width="2" height="1.2"/><rect x="96.4" y="74.2" width="2" height="1.2"/><rect x="99.9" y="74.2" width="2" height="1.2"/><rect x="103.5" y="74.2" width="2" height="1.2"/><rect x="107.0" y="74.2" width="2" height="1.2"/></g></g><rect x="0.5" y="0.5" width="109" height="77" fill="none" stroke="#7d858c"/></svg><svg style="left:24px;top:380px" width="110" height="78" viewBox="0 0 110 78"><g transform="scale(0.690 1)"><path d="M287.2 454.0 287.7 457.9 288.2 461.5 288.7 465.3 289.2 465.3 289.7 464.9 290.2 464.9 290.7 465.4 291.2 465.0 291.7 465.0 292.2 465.5 292.7 465.2 293.2 465.4 293.7 465.2 294.2 465.3 294.7 465.0 295.2 465.3 295.7 465.4 296.2 465.2 296.7 465.3 297.2 465.3 297.8 464.9 298.3 465.3 298.8 465.2 299.3 465.0 299.8 464.9 300.3 465.4 300.8 465.1 301.3 465.3 301.8 465.4 302.3 465.3 302.8 465.4 303.3 465.1 303.8 465.3 304.3 465.1 304.8 465.4 305.3 465.4 305.8 464.9 306.3 464.9 306.8 465.0 307.3 465.4 307.8 465.1 308.3 465.2 308.8 465.0 309.3 465.1 309.8 465.1 310.3 465.0 310.8 465.2 311.3 465.2 311.8 465.4 312.3 465.2 312.8 465.4 313.3 465.3 313.8 465.4 314.3 465.2 314.8 464.9 315.3 465.3 315.8 465.4 316.3 465.4 316.8 465.2 317.3 465.2 317.8 464.9 318.3 465.3 318.9 465.1 319.4 461.6 319.9 425.5 320.4 320.9 320.5 298.3 320.7 283.9 320.9 298.3 320.9 298.3 321.2 363.6 321.4 386.1 321.9 433.4 322.4 443.9 322.9 447.8 323.4 451.6 323.9 453.9 324.4 456.4 324.9 457.6 325.4 458.7 325.9 458.9 326.4 458.7 326.5 459.1 326.7 458.9 326.9 459.2 326.9 459.5 327.3 460.1 327.4 460.5 327.9 461.9 328.4 460.3 328.8 452.8 328.9 452.1 329.0 451.9 329.2 453.2 329.4 456.3 329.6 458.8 329.9 460.1 330.4 459.0 330.4 459.0 330.6 459.0 330.8 459.6 330.9 460.2 331.1 461.4 331.4 462.9 331.9 464.1 332.4 464.5 332.9 464.9 333.4 464.7 333.9 464.8 334.4 465.2 334.9 465.0 335.4 465.0 335.9 464.7 336.4 465.0 336.9 465.1 337.4 464.7 337.9 465.1 338.4 465.1 338.9 464.8 339.5 465.1 340.0 465.0 340.5 465.1 341.0 465.0 341.5 465.2 342.0 465.2 342.5 464.8 343.0 464.8 343.5 465.1 344.0 465.1 344.5 452.6 345.0 346.3 345.2 289.5 345.4 265.9 345.5 276.9 345.5 288.2 345.9 379.6 346.0 392.5 346.5 436.1 347.0 444.1 347.5 449.1 348.0 451.9 348.5 453.9 349.0 454.6 349.2 454.8 349.4 455.2 349.5 455.8 349.6 455.9 350.0 457.7 350.0 457.9 350.5 460.4 351.0 461.7 351.5 462.7 352.0 463.3 352.5 464.0 353.0 464.1 353.5 464.5 354.0 464.3 354.5 464.5 355.0 464.8 355.5 465.0 356.0 464.8 356.5 464.7 357.0 464.7 357.5 464.9 358.0 464.8 358.5 465.1 359.0 465.2 359.5 464.8 360.0 464.8 360.6 465.2 361.1 465.1 361.6 465.2 362.1 464.9 362.6 464.8 363.1 464.9 363.6 465.2 364.1 464.8 364.6 464.9 365.1 464.9 365.6 464.9 366.1 464.9 366.6 465.2 367.1 464.8 367.6 464.7 368.1 465.2 368.6 465.2 369.1 465.3 369.6 464.9 370.1 465.2 370.6 463.8 371.1 448.0 371.3 436.0 371.5 432.2 371.6 432.9 371.7 436.1 372.1 451.8 372.1 452.1 372.6 461.2 373.1 462.5 373.6 463.2 374.1 462.7 374.6 462.4 375.1 461.4 375.1 461.9 375.3 461.8 375.5 462.1 375.6 462.3 375.9 462.7 376.1 463.0 376.6 463.5 377.1 464.6 377.6 464.5 378.1 464.7 378.6 465.0 379.1 464.9 379.6 464.9 380.1 465.2 380.6 465.0 381.2 464.8 381.7 464.8 382.2 465.1 382.7 464.9 383.2 465.1 383.7 464.8 384.2 464.7 384.7 464.9 385.2 465.1 385.7 464.7 386.2 465.1 386.7 465.2 387.2 465.1 387.7 465.1 388.2 464.6 388.7 465.0 389.2 465.1 389.7 464.6 390.2 464.8 390.7 464.8 391.2 464.9 391.7 464.9 392.2 464.9 392.7 465.1 393.2 464.6 393.7 464.6 394.2 464.7 394.7 464.7 395.2 464.6 395.7 465.2 396.2 465.1 396.7 464.6 397.2 464.9 397.7 464.7 398.2 464.3 398.7 462.8 399.2 461.2 399.2 461.1 399.4 460.8 399.6 461.1 399.7 461.7 400.0 462.5 400.2 463.7 400.7 464.7 401.2 464.7 401.7 464.6 402.3 464.7 402.8 464.8 403.3 464.9 403.8 465.0 404.3 464.8 404.8 465.0 405.3 464.9 405.8 464.8 406.3 464.8 406.8 464.9 407.3 465.0 407.8 464.2 408.3 457.9 408.5 453.4 408.7 451.7 408.8 452.4 408.9 453.7 409.3 459.6 409.3 460.3 409.8 463.7 410.3 464.5 410.8 464.8 411.3 464.6 411.8 465.0 412.3 464.9 412.8 464.7 413.3 464.8 413.8 464.6 414.3 465.0 414.8 464.9 415.3 465.1 415.8 465.0 416.3 464.9 416.8 465.0 417.3 464.9 417.8 464.6 418.3 464.9 418.8 464.5 419.3 464.6 419.8 464.8 420.3 464.1 420.8 463.7 421.3 463.3 421.7 463.6 421.8 463.1 421.8 463.0 422.0 463.7 422.3 463.5 422.4 464.0 422.8 464.3 423.4 464.7 423.9 465.0 424.4 464.8 424.9 465.0 425.4 464.5 425.9 465.0 426.4 464.8 426.9 464.9 427.4 464.6 427.9 464.9 428.4 465.1 428.9 464.5 429.4 464.7 429.9 464.8 430.4 465.0 430.9 464.6 431.4 464.6 431.9 464.6 432.4 464.9 432.9 464.9 433.4 464.7 433.9 464.7 434.4 464.7 434.9 464.5 435.4 464.2 435.9 463.6 436.4 463.4 436.6 463.6 436.8 463.2 436.9 463.5 437.0 463.2 437.4 463.9 437.4 463.9 437.9 464.3 438.4 464.5 438.9 464.7 439.4 464.8 439.9 465.0 440.4 464.5 440.9 464.5 441.4 464.9 441.9 465.0 442.4 464.8 442.9 464.7 443.4 464.9 444.0 464.6 444.5 464.6 445.0 464.6 445.5 464.8 446.0 464.6 446.5 464.5 447.0 464.1 447.5 462.7 447.7 461.8 447.9 461.9 448.0 461.8 448.1 462.3 448.5 463.1 448.5 463.0 449.0 464.1 449.5 464.4 450.0 464.7 450.5 464.7 451.0 464.5 451.5 464.5 452.0 462.0 452.5 454.3 452.5 453.4 452.6 453.0 452.8 454.4 453.0 457.2 453.2 460.4 453.5 463.3 454.0 464.4 454.5 464.5 455.0 464.6 455.5 464.8 456.0 464.9 456.5 464.6 457.0 464.8 457.5 465.0 458.0 464.7 458.5 464.5 459.0 464.5 459.5 464.8 460.0 464.8 460.5 465.0 461.0 464.8 461.5 464.2 462.0 463.5 462.5 462.8 462.7 462.6 462.9 462.8 463.0 463.0 463.1 463.1 463.5 463.2 463.5 463.7 464.0 464.0 464.5 464.5 465.1 464.8 465.6 464.4 466.1 464.4 466.6 464.9 467.1 464.6 467.6 464.6 468.1 464.7 468.6 464.8 469.1 464.4 469.6 464.6 470.1 464.6 470.6 464.7 471.1 464.5 471.6 464.7 472.1 464.9 472.6 464.6 473.1 464.7 473.6 464.4 474.1 464.5 474.6 464.8 475.1 464.4 475.6 464.9 476.1 464.9 476.6 464.4 477.1 464.9 477.6 464.5 478.1 464.5 478.6 463.7 479.1 461.9 479.6 460.9 479.6 460.9 479.8 460.8 480.0 460.9 480.1 461.5 480.4 462.3 480.6 462.9 481.1 463.9 481.6 464.2 482.1 464.6 482.6 464.5 483.1 464.3 483.6 458.8 483.9 453.2 484.1 451.4 484.1 451.9 484.3 453.6 484.6 459.3 484.7 460.2 485.1 463.7 485.7 464.0 486.2 464.7 486.7 464.3 487.2 464.5 487.7 464.7 488.2 464.7 488.7 464.2 489.2 454.4 489.6 430.2 489.7 427.1 489.8 425.4 490.0 430.6 490.2 441.6 490.3 449.9 490.7 459.3 491.2 462.5 491.7 463.3 492.2 463.7 492.7 464.1 493.2 464.6 493.7 464.2 494.2 464.5 494.7 464.4 495.2 464.7 495.7 464.5 496.2 464.5 496.7 464.5 497.2 464.6 497.7 464.8 498.2 464.5 498.7 464.8 499.2 464.4 499.7 464.5 500.2 464.3 500.7 464.4 501.2 464.8 501.7 464.7 502.2 464.4 502.7 464.4 503.2 464.5 503.7 464.7 504.2 464.8 504.7 464.7 505.2 464.6 505.7 464.4 506.2 464.5 506.8 464.4 507.3 464.6 507.8 464.6 508.3 464.4 508.8 464.4 509.3 464.7 509.8 464.3 510.3 464.7 510.8 464.8 511.3 464.8 511.8 464.5 512.3 464.6 512.8 464.6 513.3 464.6 513.8 464.8 514.3 464.7 514.8 464.0 515.3 459.5 515.5 455.7 515.7 454.6 515.8 455.2 515.9 455.8 516.3 461.3 516.3 461.5 516.8 464.1 517.3 464.4 517.8 464.4 518.3 463.3 518.8 456.7 518.9 454.1 519.1 453.0 519.3 454.8 519.3 454.8 519.7 460.7 519.8 462.3 520.3 464.4 520.8 464.2 521.3 464.6 521.8 464.6 522.3 464.2 522.8 464.2 523.3 463.7 523.8 462.9 524.3 462.7 524.5 462.8 524.7 462.4 524.8 462.9 524.9 462.9 525.3 462.9 525.3 463.5 525.8 463.8 526.3 464.4 526.8 464.5 527.4 464.6 527.9 464.4 528.4 464.7 528.9 464.8 529.4 464.7 529.9 464.5 530.4 464.8 530.9 464.5 531.4 464.0 531.9 463.9 532.4 463.9 532.9 464.0 533.4 462.7 533.9 459.1 533.9 459.1 534.0 458.4 534.2 459.2 534.4 460.8 534.6 462.1 534.9 463.6 535.4 464.5 535.9 464.1 536.4 463.7 536.9 463.5 537.4 461.3 537.6 460.3 537.8 460.0 537.9 460.5 538.0 460.8 538.3 461.7 538.4 461.6 538.9 463.3 539.4 464.4 539.9 463.7 540.4 464.0 540.9 463.7 541.4 463.7 541.9 463.6 542.4 463.9 542.9 463.6 543.4 463.4 543.9 463.5 544.4 463.4 544.9 463.5 545.4 462.3 545.9 461.4 546.4 461.0 546.6 460.8 546.8 461.1 546.9 460.5 547.0 461.0 547.4 461.5 547.4 461.2 547.9 463.2 548.5 462.9 549.0 463.1 549.5 463.7 550.0 463.3 550.5 463.8 551.0 463.5 551.5 463.2 552.0 463.1 552.5 463.9 553.0 463.3 553.5 463.9 554.0 463.5 554.5 463.8 555.0 462.7 555.5 462.1 556.0 461.4 556.3 461.9 556.5 461.6 556.5 461.3 556.7 461.1 557.0 462.2 557.0 462.6 557.5 462.6 558.0 462.4 558.5 462.6 559.0 462.8 559.5 462.9 560.0 462.8 560.5 462.8 561.0 463.5 561.5 463.7 562.0 462.9 562.5 463.8 563.0 463.2 563.5 463.5 564.0 463.6 564.5 463.7 565.0 462.5 565.5 462.9 566.0 463.2 566.5 463.6 567.0 462.5 567.5 462.8 568.0 463.4 568.5 462.5 569.1 462.8 569.6 462.8 570.1 463.2 570.6 463.5 571.1 462.5 571.6 463.2 572.1 463.2 572.6 463.3 573.1 462.4 573.6 461.0 574.1 458.0 574.1 458.0 574.2 457.6 574.4 458.8 574.6 459.0 574.8 459.9 575.1 460.9 575.6 462.7 576.1 462.0 576.6 460.2 576.9 458.9 577.0 458.8 577.1 458.5 577.2 459.5 577.6 460.0 577.6 460.6 578.1 462.4 578.6 462.9 579.1 462.3 579.6 462.5 580.1 463.2 580.6 462.9 581.1 463.2 581.6 463.2 582.1 462.7 582.6 463.2 583.1 463.0 583.6 462.5 584.1 462.6 584.6 462.2 585.1 462.6 585.6 463.2 586.1 462.2 586.6 462.7 587.1 462.2 587.6 462.1 588.1 462.8 588.6 462.3 589.1 462.1 589.6 462.2 590.2 462.8 590.7 462.7 591.2 462.0 591.7 462.2 592.2 463.1 592.7 462.2 593.2 462.6 593.7 462.4 594.2 462.9 594.7 462.6 595.2 462.8 595.7 462.5 596.2 462.1 596.7 462.0 597.2 461.8 597.7 462.6 598.2 461.5 598.7 461.2 599.2 462.0 599.7 460.7 600.2 461.2 600.7 460.0 601.2 460.4 601.2 460.1 601.4 460.8 601.5 460.7 601.7 460.8 601.9 461.1 602.2 461.4 602.7 461.0 603.2 461.6 603.7 461.6 604.2 461.4 604.7 462.4 605.2 462.3 605.7 462.6 606.2 461.9 606.7 462.3 607.2 462.2 607.7 462.6 608.2 461.8 608.7 462.1 609.2 462.2 609.7 461.7 610.2 462.3 610.7 462.4 611.3 460.9 611.8 458.4 612.1 456.7 612.3 455.9 612.3 456.0 612.4 457.3 612.8 458.1 612.8 458.6 613.3 460.3 613.8 461.4 614.3 461.6 614.8 462.6 615.3 462.4 615.8 462.6 616.3 462.7 616.8 462.2 617.3 462.6 617.8 462.1 618.3 462.0 618.8 462.6 619.3 462.6 619.8 462.6 620.3 462.0 620.8 462.4 621.3 461.9 621.8 462.6 622.3 462.5 622.8 461.8 623.3 462.5 623.8 461.6 624.3 461.5 624.8 462.2 625.3 461.7 625.8 462.0 626.3 462.1 626.8 461.4 627.3 462.2 627.8 461.6 628.3 461.8 628.8 461.7 629.3 462.1 629.8 462.1 630.3 461.6 630.8 461.3 631.3 461.4 631.9 461.2 632.4 460.1 632.9 459.5 633.0 460.1 633.1 460.0 633.3 460.5 633.4 460.5 633.7 460.9 633.9 460.5 634.4 460.9 634.9 461.3 635.4 461.6 635.9 461.7 636.4 461.7 636.9 461.5 637.4 462.1 637.9 461.4 638.4 461.6 638.9 462.1 639.4 462.0 639.9 461.3 640.4 461.2 640.9 461.9 641.4 460.9 641.9 461.0 642.4 461.4 642.9 461.1 643.4 460.2 643.9 459.6 644.2 459.6 644.4 460.3 644.4 459.9 644.6 460.6 644.9 460.7 644.9 460.9 645.4 460.2 645.9 460.7 646.4 460.7 646.9 461.3 647.4 461.2 647.9 460.8 648.4 461.4 648.9 460.8 649.4 461.1 649.9 461.0 650.4 461.6 650.9 461.0 651.4 460.4 651.9 459.7 652.4 459.7 652.6 459.9 652.8 459.9 653.0 460.3 653.0 460.2 653.3 459.8 653.5 459.8 654.0 460.9 654.5 461.3 655.0 461.1 655.5 461.5 656.0 461.2 656.5 460.9 657.0 460.7 657.5 460.5 658.0 461.3 658.5 461.5 659.0 461.5 659.5 461.0 660.0 461.2 660.5 461.5 661.0 461.4 661.5 461.1 662.0 460.9 662.5 461.0 663.0 460.6 663.5 460.6 664.0 461.1 664.5 461.5 665.0 461.0 665.5 460.8 666.0 460.7 666.5 460.8 667.0 461.2 667.5 460.8 668.0 461.4 668.5 460.4 669.0 460.6 669.5 460.8 670.0 460.7 670.5 461.2 671.0 461.1 671.5 461.2 672.0 460.8 672.5 460.1 673.0 460.8 673.6 460.7 674.1 460.6 674.6 460.4 675.1 460.9 675.6 461.1 676.1 460.1 676.6 460.8 677.1 460.4 677.6 460.6 678.1 461.0 678.6 461.1 679.1 460.6 679.6 459.8 680.1 460.3 680.6 458.9 681.1 458.8 681.1 459.4 681.3 458.7 681.5 458.8 681.6 459.7 681.8 459.9 682.1 459.3 682.6 459.8 683.1 459.9 683.6 459.8 684.1 460.0 684.6 460.8 685.1 459.7 685.6 459.9 686.1 459.8 686.6 459.6 687.1 460.1 687.6 460.4 688.1 460.5 688.6 460.2 689.1 460.4 689.6 459.4 690.1 459.7 690.6 460.5 691.1 459.4 691.6 459.6 692.1 459.8 692.6 459.5 693.1 459.8 693.6 459.2 694.1 459.4 694.7 460.3 695.2 459.3 695.7 460.1 696.2 459.2 696.7 460.2 697.2 459.8 697.7 459.7 698.2 459.0 698.7 458.7 699.2 459.2 699.7 458.0 700.2 457.6 700.3 458.3 700.5 458.3 700.7 457.5 700.7 458.6 701.0 458.3 701.2 458.3 701.7 458.3 702.2 459.0 702.7 459.8 703.2 459.0 703.7 458.8 704.2 458.8 704.7 458.7 705.2 459.0 705.7 459.6 706.2 458.6 706.7 458.7 707.2 459.6 707.7 459.6 708.2 459.6 708.7 458.7 709.2 458.8 709.7 459.4 710.2 458.9 710.7 459.1 711.2 458.5 711.7 457.8 712.2 457.7 712.7 457.7 713.1 457.6 713.2 457.3 713.2 457.2 713.4 457.4 713.7 457.5 713.8 457.7 714.2 458.4 714.7 457.9 715.3 458.6 715.8 459.1 716.3 459.0 716.8 458.1 717.3 459.1 717.8 458.9 718.3 458.0 718.8 458.1 719.3 457.9 719.8 457.7 720.3 458.8 720.8 458.0 721.3 458.5 721.8 457.6 722.3 457.4 722.8 458.4 723.3 458.2 723.8 458.4 724.3 458.0 724.8 457.7 725.3 458.0 725.8 457.1 726.3 457.6 726.8 457.4 727.3 457.0 727.8 457.5 728.3 457.1 728.8 457.3 729.3 457.1 729.8 456.9 730.3 456.9 730.8 457.2 731.3 457.6 731.8 457.5 732.3 457.3 732.8 457.2 733.3 456.5 733.8 457.3 734.3 456.4 734.8 456.2 735.3 456.6 735.8 456.8 736.4 456.3 736.9 456.6 737.4 456.1 737.9 456.9 738.4 456.2 738.9 456.2 739.4 456.2 739.9 456.5 740.4 456.6 740.9 456.0 741.4 455.9 741.9 456.0 742.4 455.3 742.9 455.7 743.4 456.1 743.9 455.9 744.4 451.8 744.5 450.4 744.7 448.4 744.9 450.5 744.9 450.1 745.3 454.1 745.4 454.9 745.9 455.8 746.4 455.2 746.9 455.7 747.4 455.4 747.9 454.9 748.4 454.7 748.9 454.9 749.4 454.7 749.9 454.6 750.4 454.8 750.9 455.0 751.4 454.6 751.9 453.9 752.4 453.9 752.9 454.0 753.4 454.2 753.9 453.6 754.4 453.4 754.9 453.6 755.4 453.5 755.9 453.1 756.4 453.6 757.0 454.0 757.5 453.5 758.0 453.6 758.5 453.6 759.0 453.6 759.5 453.6 760.0 452.9 760.5 453.1 761.0 452.4 761.5 453.2 762.0 452.5 762.5 452.5 763.0 452.9 763.5 452.1 764.0 451.9 764.5 452.6 765.0 452.2 765.5 451.5 766.0 451.4 766.5 451.6 767.0 451.1 767.5 451.9 768.0 451.0 768.5 450.8 769.0 450.7 769.5 450.5 770.0 450.1 770.5 450.0 771.0 449.8 771.3 449.5 771.5 449.0 771.5 450.1 771.7 449.8 772.0 449.2 772.1 449.6 772.5 450.2 773.0 450.7 773.5 449.8 774.0 449.9 774.5 450.7 775.0 450.7 775.5 451.4 776.0 451.3 776.5 450.8 777.0 450.9 777.5 451.1 778.1 451.5 778.6 450.6 779.1 450.9 779.6 450.5 780.1 451.2 780.6 450.4 781.1 451.5 781.6 451.0 782.1 451.1 782.6 450.5 783.1 450.7 783.6 451.0 784.1 451.4 784.6 451.0 785.1 450.7 785.6 451.6 786.1 451.2 786.6 451.0 787.1 450.6 787.6 450.8 788.1 451.5 788.6 450.6 789.1 451.0 789.6 451.1 790.1 450.8 790.6 451.3 791.1 451.5 791.6 451.4 792.1 451.3 792.6 450.7 793.1 450.5 793.6 450.9 794.1 450.8 794.6 450.7 795.1 451.5 795.6 450.7 796.1 451.5 796.6 451.6 797.1 450.6 797.6 451.6 798.1 451.0 798.6 450.8 799.2 450.7 799.7 450.6 800.2 451.1 800.7 451.0 801.2 451.6 801.7 451.6 802.2 450.6 802.7 451.1 803.2 451.1 803.7 450.8 804.2 450.9 804.7 450.9 805.2 451.5 805.7 451.1 806.2 450.8 806.7 450.9 807.2 451.2 807.7 451.4 808.2 451.0 808.7 451.5 809.2 451.0 809.7 451.5 810.2 451.5 810.7 450.9 811.2 451.6 811.7 451.2 812.2 451.4 812.7 451.5 813.2 451.5 813.7 451.3 814.2 450.9 814.7 451.7 815.2 451.8 815.7 451.4 816.2 451.5 816.7 451.2 817.2 451.9 817.7 451.7 818.2 451.1 818.7 451.9 819.2 452.1 819.8 451.3 820.3 452.1 820.8 451.5 821.3 451.1 821.8 451.8 822.3 451.3 822.8 451.8 823.3 451.7 823.8 451.1 824.3 451.6 824.8 452.0 825.3 451.6 825.8 451.6 826.3 452.0 826.8 451.6 827.3 451.6 827.8 451.7 828.3 452.0 828.8 451.3 829.3 451.2 829.8 452.0 830.3 451.7 830.8 451.4 831.3 452.0 831.8 452.0 832.3 451.4 832.8 451.8 833.3 451.5 833.8 451.3 834.3 450.6 834.8 450.2 834.9 451.0 835.1 451.0 835.3 450.6 835.3 450.8 835.7 451.0 835.8 450.7 836.3 451.4 836.8 451.3 837.3 451.3 837.8 451.1 838.3 451.7 838.8 451.5 839.3 452.1 839.8 451.4 840.3 451.7 840.9 451.5 841.4 451.8 841.9 452.0 842.4 451.4 842.9 451.4 843.4 451.9 843.9 451.6 844.4 451.9 844.9 451.5 845.4 451.5 845.9 452.0 846.4 452.5 846.9 452.4 847.4 452.0 847.9 451.9 848.4 451.5 848.9 451.7 849.4 451.8 849.9 452.6 850.4 451.6 850.9 452.6 851.4 452.0 851.9 452.0 852.4 451.8 852.9 452.6 853.4 451.7 853.9 452.2 854.4 452.1 854.9 451.7 855.4 451.8 855.9 452.7 856.4 452.5 856.9 452.4 857.4 452.6 857.9 451.7 858.4 452.4 858.9 452.5 859.4 451.9 859.9 452.1 860.4 452.8 860.9 452.0 861.5 452.5 862.0 451.8 862.5 452.4 863.0 452.0 863.5 452.3 864.0 452.1 864.5 452.7 865.0 452.6 865.5 452.3 866.0 452.5 866.5 452.2 867.0 452.7 867.5 452.0 868.0 452.4 868.5 452.4 869.0 452.2 869.5 451.8 870.0 452.0 870.5 452.5 871.0 452.0 871.5 452.7 872.0 452.4 872.5 452.9 873.0 452.8 873.5 452.7 874.0 452.3 874.5 451.9 875.0 452.5 875.5 452.7 876.0 453.0 876.5 452.1 877.0 452.1 877.5 453.0 878.0 452.8 878.5 452.5 879.0 452.8 879.5 452.1 880.0 452.6 880.5 452.7 881.0 452.7 881.5 452.1 882.0 452.1 882.6 452.7 883.1 453.0 883.6 452.1 884.1 452.0 884.6 452.1 885.1 452.9 885.6 452.5 886.1 452.6 886.6 453.2 887.1 452.8 887.6 452.3 888.1 452.9 888.6 452.1 889.1 452.4 889.6 452.9 890.1 452.3 890.6 452.1 891.1 452.7 891.6 452.5 892.1 453.3 892.6 452.2 893.1 453.1 893.6 452.6 894.1 453.1 894.6 452.6 895.1 452.8 895.6 452.2 896.1 451.6 896.6 451.3 897.1 451.1 897.6 450.1 897.8 450.0 898.0 450.4 898.1 450.2 898.4 450.7 898.6 451.3 899.1 451.9 899.6 452.4 900.1 452.4 900.6 452.2 901.1 452.3 901.6 452.7 902.1 452.5 902.6 453.0 903.2 452.6 903.7 453.2 904.2 453.0 904.7 453.1 905.2 453.2 905.7 452.9 906.2 452.8 906.7 452.7 907.2 452.4 907.7 453.3 908.2 453.0 908.7 452.5 909.2 453.5 909.7 453.1 910.2 453.1 910.7 452.9 911.2 452.6 911.7 453.6 912.2 452.6 912.7 452.9 913.2 453.6 913.7 452.6 914.2 453.1 914.7 453.0 915.2 452.8 915.7 453.6 916.2 453.0 916.7 452.5 917.2 453.1 917.7 452.5 918.2 453.4 918.7 453.6 919.2 453.6 919.7 452.6 920.2 453.4 920.7 452.9 921.2 453.1 921.7 452.9 922.2 453.0 922.7 452.8 923.2 453.4 923.7 452.7 924.3 453.8 924.8 452.7 925.3 453.8 925.8 452.9 926.3 452.8 926.8 453.6 927.3 453.3 927.8 453.6 928.3 453.3 928.8 453.4 929.3 452.8 929.8 453.5 930.3 453.3 930.8 453.9 931.3 452.7 931.8 452.8 932.3 453.6 932.8 453.9 933.3 453.3 933.8 453.6 934.3 453.5 934.8 453.3 935.3 453.4 935.8 453.5 936.3 452.8 936.8 453.2 937.3 453.7 937.8 453.1 938.3 453.4 938.8 453.2 939.3 453.3 939.8 453.7 940.3 453.8 940.8 454.0 941.3 453.5 941.8 453.1 942.3 453.3 942.8 453.0 943.3 453.2 943.8 453.6 944.3 453.7 944.9 453.2 945.4 453.2 945.9 453.1 946.4 453.2 946.9 453.6 947.4 453.3 947.9 454.1 948.4 453.7 948.9 453.4 949.4 453.5 949.9 453.1 950.4 453.9 950.9 453.9 951.4 453.5 951.9 453.9 952.4 453.4 952.9 453.3 953.4 453.4 953.9 453.3 954.4 453.8 954.9 453.9 955.4 454.0 955.9 453.2 956.4 454.0 956.9 453.7 957.4 453.6 957.9 453.7 958.4 453.7 958.9 453.4 959.4 453.6 959.9 454.0 960.4 454.0 960.9 454.3 961.4 453.4 961.9 454.3 962.4 454.2 962.9 454.1 963.4 454.4 963.9 453.4 964.4 454.2 964.9 454.3 965.4 453.4 966.0 454.0 966.5 454.4 967.0 453.6 967.5 454.3 968.0 454.4 968.5 453.7 969.0 453.2 969.5 452.9 970.0 453.1 970.5 451.9 971.0 451.3 971.1 451.4 971.3 452.0 971.5 451.3 971.5 451.1 971.9 452.6 972.0 452.0 972.5 452.7 973.0 453.9 973.5 453.4 974.0 453.4 974.5 454.4 975.0 453.7 975.5 453.7 976.0 454.5 976.5 453.7 977.0 454.5 977.5 453.8 978.0 453.8 978.5 453.7 979.0 454.1 979.5 454.1 980.0 454.0 980.5 454.1 981.0 453.9 981.5 454.5 982.0 454.6 982.5 454.4 983.0 454.5 983.5 453.6 984.0 453.8 984.5 453.8 985.0 453.7 985.5 454.7 986.0 454.7 986.6 454.7 987.1 454.3 987.6 453.7 988.1 454.1 988.6 453.7 989.1 454.7 989.6 453.9 990.1 454.0 990.6 454.8 991.1 453.9 991.6 454.8 992.1 454.0 992.6 454.5 993.1 453.8 993.6 454.8 994.1 454.2 994.6 454.1 995.1 454.5 995.6 454.4 996.1 454.0 996.6 453.9 997.1 454.4 997.6 453.8 998.1 454.8 998.6 454.2 999.1 454.0 999.6 454.2 1000.1 453.9 1000.6 454.2 1001.1 454.5 1001.6 454.3 1002.1 454.2 1002.6 454.2 1003.1 454.4 1003.6 454.8 1004.1 454.4 1004.6 454.8 1005.1 454.4 1005.6 454.0 1006.1 454.1 1006.6 454.9 1007.1 454.5 1007.7 454.4 1008.2 454.5 1008.7 454.9 1009.2 454.4 1009.7 454.4 1010.2 454.4 1010.7 454.0 1011.2 454.6 1011.7 454.5 1012.2 454.6 1012.7 454.5 1013.2 454.5 1013.7 454.8 1014.2 454.2 1014.7 455.2 1015.2 454.1 1015.7 455.1 1016.2 454.2 1016.7 455.0 1017.2 454.4 1017.7 454.1 1018.2 454.7 1018.7 455.1 1019.2 455.1 1019.7 455.1 1020.2 455.3 1020.7 454.2 1021.2 454.6 1021.7 454.2 1022.2 455.0 1022.7 454.7 1023.2 455.0 1023.7 455.1 1024.2 455.3 1024.7 455.0 1025.2 455.2 1025.7 454.8 1026.2 454.3 1026.7 455.3 1027.2 454.3 1027.7 454.3 1028.2 455.2 1028.8 454.6 1029.3 455.0 1029.8 454.3 1030.3 454.5 1030.8 455.1 1031.3 454.3 1031.8 454.9 1032.3 455.4 1032.8 454.5 1033.3 455.1 1033.8 455.2 1034.3 455.0 1034.8 455.2 1035.3 455.2 1035.8 454.3 1036.3 454.6 1036.8 455.0 1037.3 455.5 1037.8 454.6 1038.3 455.1 1038.8 454.5 1039.3 455.4 1039.8 454.9 1040.3 455.0 1040.8 455.2" transform="matrix(0.1337 0 0 0.1401 -30.40 -34.20)" fill="none" stroke="#c45a5e" stroke-width="0.8" vector-effect="non-scaling-stroke"/><path d="M7.5 2V35.5H108" stroke="#777" stroke-width="0.7" fill="none"/><path d="M108 35.5V2H8" stroke="#ddd" stroke-width="0.5" fill="none"/><g fill="#5a62bc" opacity="0.8"><rect x="10.9" y="3.2" width="3.4" height="1.7" /><rect x="14.2" y="0.6" width="3.4" height="1.7" /><rect x="9.1" y="27.4" width="3.4" height="1.7" /><rect x="12.8" y="26.6" width="3.4" height="1.7" /><rect x="15.9" y="27.8" width="3.4" height="1.7" /><rect x="17.7" y="23.6" width="3.4" height="1.7" /><rect x="19.3" y="27.8" width="3.4" height="1.7" /><rect x="22.6" y="26.5" width="3.4" height="1.7" /><rect x="28.5" y="26.6" width="3.4" height="1.7" /><rect x="31.5" y="26.4" width="4.1" height="1.7" /><rect x="33.2" y="22.9" width="4.1" height="1.7" /><rect x="27.1" y="28.2" width="3.4" height="1.7" /><rect x="29.6" y="28.2" width="3.4" height="1.7" /><rect x="37.2" y="26.8" width="4.1" height="1.7" /><rect x="40.8" y="27.8" width="4.1" height="1.7" /><rect x="44.7" y="27.4" width="4.1" height="1.7" /><rect x="49.7" y="27.1" width="4.1" height="1.7" /><rect x="55.0" y="27.7" width="4.1" height="1.7" /><rect x="58.9" y="27.4" width="4.1" height="1.7" /><rect x="63.2" y="27.5" width="4.1" height="1.7" /><rect x="67.3" y="26.3" width="4.1" height="1.7" /><rect x="72.5" y="26.3" width="4.1" height="1.7" /><rect x="79.4" y="26.4" width="4.1" height="1.7" /><rect x="87.9" y="26.4" width="4.1" height="1.7" /><rect x="97.7" y="26.6" width="4.1" height="1.7" /></g><g fill="#8a8a8a"><rect x="1.5" y="30.5" width="5" height="1.3"/><rect x="1.5" y="26.7" width="5" height="1.3"/><rect x="1.5" y="22.9" width="5" height="1.3"/><rect x="1.5" y="19.2" width="5" height="1.3"/><rect x="1.5" y="15.4" width="5" height="1.3"/><rect x="1.5" y="11.6" width="5" height="1.3"/><rect x="1.5" y="7.8" width="5" height="1.3"/><rect x="1.5" y="4.1" width="5" height="1.3"/><rect x="19.6" y="36.6" width="1.8" height="1.2"/><rect x="32.1" y="36.6" width="1.8" height="1.2"/><rect x="44.6" y="36.6" width="1.8" height="1.2"/><rect x="57.1" y="36.6" width="1.8" height="1.2"/><rect x="69.6" y="36.6" width="1.8" height="1.2"/><rect x="82.1" y="36.6" width="1.8" height="1.2"/><rect x="94.6" y="36.6" width="1.8" height="1.2"/><rect x="107.1" y="36.6" width="1.8" height="1.2"/><rect x="46" y="38" width="13" height="1.2"/></g><path d="M0.5 39.8H108" stroke="#4a4a4a" stroke-width="1.1" stroke-dasharray="6 1.5 3 1 8 1.2 4 1"/><path d="M292.25 749.5V556.2M293.50 749.5V568.4M294.50 749.5V586.5M295.50 749.5V660.7M296.30 749.5V586.5M297.25 749.5V550.2M298.25 749.5V691.8M300.25 749.5V730.1M301.50 749.5V741.0M302.50 749.5V741.5M303.50 749.5V742.2M305.25 749.5V745.9M310.50 749.5V730.1M311.50 749.5V594.8M312.30 749.5V594.8M313.50 749.5V559.6M314.50 749.5V594.3M315.25 749.5V736.2M316.50 749.5V737.4M318.25 749.5V741.0M321.50 749.5V744.6M326.50 749.5V732.5M327.75 749.5V727.7M329.25 749.5V681.6M330.25 749.5V725.2M331.50 749.5V694.9M332.75 749.5V719.4M334.00 749.5V735.0M336.50 749.5V744.6M338.00 749.5V747.1M342.75 749.5V732.5M343.50 749.5V695.4M344.75 749.5V718.0M346.00 749.5V695.4M347.25 749.5V590.9M348.50 749.5V612.2M349.75 749.5V642.3M350.75 749.5V696.1M352.00 749.5V739.8M354.00 749.5V744.6M355.50 749.5V745.9M358.50 749.5V739.8M361.00 749.5V730.1M363.50 749.5V732.5M364.50 749.5V728.9M365.75 749.5V600.8M367.00 749.5V687.9M368.25 749.5V738.6M370.25 749.5V742.2M371.00 749.5V743.7M372.90 749.5V745.9M378.70 749.5V738.8M380.00 749.5V733.0M381.20 749.5V735.0M382.50 749.5V734.0M383.90 749.5V732.0M385.40 749.5V731.1M387.00 749.5V745.9M390.00 749.5V747.1M394.70 749.5V743.7M396.10 749.5V742.2M397.40 749.5V670.2M398.40 749.5V712.2M399.90 749.5V721.1M401.90 749.5V739.8M403.80 749.5V743.7M405.30 749.5V737.4M407.00 749.5V747.1M411.50 749.5V735.0M412.90 749.5V727.2M414.40 749.5V614.9M415.40 749.5V705.9M416.90 749.5V721.4M418.60 749.5V742.2M420.20 749.5V747.1M428.30 749.5V741.5M429.80 749.5V745.9M431.40 749.5V701.0M432.50 749.5V706.8M433.70 749.5V740.5M436.00 749.5V747.1M441.40 749.5V725.2M443.00 749.5V742.2M444.30 749.5V736.2M445.30 749.5V730.6M446.80 749.5V732.0M448.20 749.5V731.6M449.50 749.5V742.2M451.10 749.5V742.2M454.00 749.5V747.1M460.70 749.5V745.9M462.30 749.5V716.3M463.60 749.5V721.1M465.00 749.5V732.5M466.50 749.5V737.4M468.00 749.5V744.6M477.70 749.5V742.2M479.90 749.5V720.6M481.70 749.5V737.9M483.20 749.5V742.2M485.40 749.5V747.1M494.50 749.5V738.6M496.30 749.5V737.1M498.50 749.5V732.0M499.50 749.5V744.6M511.20 749.5V737.4M512.60 749.5V738.6M514.10 749.5V739.8M515.90 749.5V744.6M517.20 749.5V746.6M528.60 749.5V738.1M530.10 749.5V741.0M531.70 749.5V745.1M533.50 749.5V744.6M543.50 749.5V747.1M545.30 749.5V743.4M547.10 749.5V745.9M548.60 749.5V743.4M550.40 749.5V747.1M690.00 749.5V747.6M698.00 749.5V748.3M712.00 749.5V745.9M790.00 749.5V748.0M808.00 749.5V748.3M558.55 749.5V749.3M562.48 749.5V749.1M580.82 749.5V749.0M600.47 749.5V749.0M609.64 749.5V749.0M635.84 749.5V749.3M638.46 749.5V749.1M652.87 749.5V749.3M660.73 749.5V749.0M731.47 749.5V749.3M738.02 749.5V749.3M764.22 749.5V749.1M766.84 749.5V749.0M783.87 749.5V749.1M803.52 749.5V749.1M806.14 749.5V749.0M814.00 749.5V749.1M831.03 749.5V749.3M849.37 749.5V749.1M866.40 749.5V749.3M875.57 749.5V749.1M878.19 749.5V749.1M884.74 749.5V749.3M892.60 749.5V749.0M905.70 749.5V749.3M918.80 749.5V749.3M924.04 749.5V749.0M931.90 749.5V749.0M951.55 749.5V749.1M968.58 749.5V749.3M979.06 749.5V749.3M985.61 749.5V749.1M992.16 749.5V749.1M994.78 749.5V749.0M1015.74 749.5V749.1" transform="matrix(0.1347 0 0 0.1355 -31.20 -31.26)" fill="none" stroke="#8a1010" stroke-width="0.8" vector-effect="non-scaling-stroke"/><path d="M7.5 41V73.5H108" stroke="#777" stroke-width="0.7" fill="none"/><path d="M8 70.3H108" stroke="#ddd" stroke-width="0.4"/><g fill="#4a52b4" opacity="0.85"><rect x="7.7" y="39.5" width="3.6" height="1.8" /><rect x="7.2" y="40.7" width="5.0" height="1.8" /><rect x="11.5" y="40.7" width="3.9" height="1.8" /><rect x="11.2" y="42.0" width="4.5" height="1.8" /><rect x="14.1" y="44.8" width="3.7" height="1.8" /><rect x="13.9" y="46.0" width="4.3" height="1.8" /><rect x="17.7" y="46.1" width="3.9" height="1.8" /><rect x="17.5" y="47.5" width="4.4" height="1.8" /><rect x="22.9" y="48.1" width="4.3" height="1.8" /><rect x="22.8" y="49.2" width="4.4" height="1.8" /><rect x="20.5" y="55.5" width="4.4" height="1.8" /><rect x="20.5" y="56.7" width="4.2" height="1.8" /><rect x="18.5" y="64.2" width="4.2" height="1.8" /><rect x="18.8" y="65.4" width="3.7" height="1.8" /><rect x="25.1" y="59.7" width="4.4" height="1.8" /><rect x="25.1" y="61.1" width="4.4" height="1.8" /><rect x="28.9" y="60.5" width="4.4" height="1.8" /><rect x="28.9" y="61.9" width="4.4" height="1.8" /><rect x="32.6" y="61.9" width="4.5" height="1.8" /><rect x="32.6" y="63.3" width="4.4" height="1.8" /><rect x="36.4" y="63.9" width="4.5" height="1.8" /><rect x="36.7" y="65.3" width="3.7" height="1.8" /><rect x="40.2" y="64.7" width="4.5" height="1.8" /><rect x="40.6" y="66.1" width="3.7" height="1.8" /><rect x="62.7" y="66.1" width="4.7" height="1.8" /><rect x="63.1" y="67.4" width="3.5" height="1.8" /></g><g fill="#6a6a6a"><rect x="1.5" y="69.7" width="5" height="1.3"/><rect x="1.5" y="66.4" width="5" height="1.3"/><rect x="1.5" y="63.1" width="5" height="1.3"/><rect x="1.5" y="59.8" width="5" height="1.3"/><rect x="1.5" y="56.6" width="5" height="1.3"/><rect x="1.5" y="53.3" width="5" height="1.3"/><rect x="1.5" y="50.0" width="5" height="1.3"/><rect x="1.5" y="46.7" width="5" height="1.3"/><rect x="1.5" y="43.4" width="5" height="1.3"/><rect x="8.1" y="74.2" width="2" height="1.2"/><rect x="11.6" y="74.2" width="2" height="1.2"/><rect x="15.1" y="74.2" width="2" height="1.2"/><rect x="18.7" y="74.2" width="2" height="1.2"/><rect x="22.2" y="74.2" width="2" height="1.2"/><rect x="25.7" y="74.2" width="2" height="1.2"/><rect x="29.3" y="74.2" width="2" height="1.2"/><rect x="32.8" y="74.2" width="2" height="1.2"/><rect x="36.3" y="74.2" width="2" height="1.2"/><rect x="39.9" y="74.2" width="2" height="1.2"/><rect x="43.4" y="74.2" width="2" height="1.2"/><rect x="46.9" y="74.2" width="2" height="1.2"/><rect x="50.5" y="74.2" width="2" height="1.2"/><rect x="54.0" y="74.2" width="2" height="1.2"/><rect x="57.5" y="74.2" width="2" height="1.2"/><rect x="61.1" y="74.2" width="2" height="1.2"/><rect x="64.6" y="74.2" width="2" height="1.2"/><rect x="68.1" y="74.2" width="2" height="1.2"/><rect x="71.7" y="74.2" width="2" height="1.2"/><rect x="75.2" y="74.2" width="2" height="1.2"/><rect x="78.7" y="74.2" width="2" height="1.2"/><rect x="82.3" y="74.2" width="2" height="1.2"/><rect x="85.8" y="74.2" width="2" height="1.2"/><rect x="89.3" y="74.2" width="2" height="1.2"/><rect x="92.9" y="74.2" width="2" height="1.2"/><rect x="96.4" y="74.2" width="2" height="1.2"/><rect x="99.9" y="74.2" width="2" height="1.2"/><rect x="103.5" y="74.2" width="2" height="1.2"/><rect x="107.0" y="74.2" width="2" height="1.2"/></g></g><g fill="#ececec"><rect x="76" y="2" width="31" height="5.5"/><rect x="76" y="12" width="31" height="3.5"/><rect x="76" y="19.3" width="31" height="3.7"/><rect x="76" y="27.3" width="31" height="7"/><rect x="76" y="39" width="31" height="15.3"/></g><g fill="#8a9aa8"><rect x="76" y="0.5" width="9" height="1"/><rect x="77" y="3.5" width="7" height="1"/><rect x="76" y="10" width="4" height="1"/><rect x="77" y="13" width="6" height="1"/><rect x="76" y="17.5" width="9" height="1"/><rect x="77" y="20.5" width="5" height="1"/><rect x="76" y="25.5" width="7" height="1"/><rect x="77" y="28.5" width="7" height="1"/><rect x="76" y="37" width="8" height="1"/></g><path d="M89 68L91 65L93 68L95 64L96 70" stroke="#e09090" stroke-width="0.7" fill="none"/><rect x="0.5" y="0.5" width="109" height="77" fill="none" stroke="#7d858c"/></svg>
<svg style="left:7px;top:9px" width="22" height="22" viewBox="0 0 22 22"><path d="M11 0.5L20.5 6V16L11 21.5L1.5 16V6Z" fill="#a40d12"/><path d="M5.5 15.5L8 6.5L11 11.5L14.5 6L16 8L13 8.5L12 15" stroke="#fff" stroke-width="2.4" fill="none" stroke-linejoin="round"/></svg>
<svg style="left:42px;top:10px" width="18" height="18" viewBox="0 0 18 18"><rect x="0.5" y="0.5" width="17" height="17" rx="1" fill="#1c4e9c"/><rect x="4" y="1.5" width="9" height="5" fill="#c9d3e2"/><rect x="5" y="2.2" width="2" height="3.6" fill="#1c4e9c"/><rect x="2.5" y="8.5" width="13" height="8" fill="#fff"/><path d="M3 10.5H15M3 12.5H15M3 14.5H15" stroke="#9cc0f0" stroke-width="1"/></svg>
<svg style="left:70px;top:14px" width="15" height="14" viewBox="0 0 15 14"><path d="M4 4.5H9.5A4 4 0 0 1 10 12.5" stroke="#a9a9a9" stroke-width="2" fill="none"/><path d="M0.5 4.5L5 0.5V8.5Z" fill="#a9a9a9"/></svg>
<svg style="left:97px;top:14px" width="15" height="14" viewBox="0 0 15 14"><path d="M11 4.5H5.5A4 4 0 0 0 5 12.5" stroke="#a9a9a9" stroke-width="2" fill="none"/><path d="M14.5 4.5L10 0.5V8.5Z" fill="#a9a9a9"/></svg>
<svg style="left:122px;top:10px" width="20" height="18" viewBox="0 0 20 18"><rect x="5" y="0" width="10" height="5" fill="#fff"/><rect x="5" y="4" width="10" height="3" fill="#9ec4ee"/><rect x="0.5" y="6" width="19" height="8" rx="2" fill="#c6c6c6"/><rect x="4.5" y="10" width="11" height="8" fill="#f4f4f4" stroke="#bbb"/><path d="M6 13H14M6 15.5H14" stroke="#aaa"/><circle cx="2.5" cy="12" r="0.8" fill="#3c3"/></svg>
<svg style="left:147px;top:17px" width="9" height="9" viewBox="0 0 9 9"><rect x="0.5" y="0" width="7.5" height="1.8" fill="#fff"/><path d="M0 3.5H8.5L4.25 8Z" fill="#fff"/></svg>
<div class="a" style="left:1044px;top:19px;width:9px;height:3px;background:#fff"></div>
<svg style="left:1090px;top:12px" width="12" height="11" viewBox="0 0 12 11"><rect x="0.75" y="0.75" width="10.5" height="9.5" fill="none" stroke="#fff" stroke-width="1.5"/><rect x="0" y="0" width="12" height="2.5" fill="#fff"/></svg>
<svg style="left:1136px;top:13px" width="11" height="10" viewBox="0 0 11 10"><path d="M1 0.5L10 9.5M10 0.5L1 9.5" stroke="#fff" stroke-width="1.5"/></svg>
<svg style="left:998px;top:48px" width="10" height="7" viewBox="0 0 10 7"><path d="M1 5.5L5 1.5L9 5.5" stroke="#fff" stroke-width="2" fill="none"/></svg>
<svg style="left:1018px;top:42px" width="21" height="20" viewBox="0 0 21 20"><circle cx="10.5" cy="10" r="9.5" fill="#1e7fe6" stroke="#fff" stroke-width="1.2"/><circle cx="10.5" cy="5" r="1.8" fill="#fff"/><rect x="8.8" y="8" width="3.4" height="8" fill="#fff"/></svg>
<svg style="left:1044px;top:42px" width="21" height="20" viewBox="0 0 21 20"><circle cx="10.5" cy="10" r="9.2" fill="none" stroke="#f0caca" stroke-width="1.3"/><circle cx="10.5" cy="10" r="4.2" fill="none" stroke="#fff" stroke-width="2.6" stroke-dasharray="2 1.3"/><circle cx="10.5" cy="10" r="3.3" fill="none" stroke="#fff" stroke-width="1.8"/></svg>
<svg style="left:1070px;top:42px" width="21" height="20" viewBox="0 0 21 20"><circle cx="10.5" cy="10" r="9.2" fill="none" stroke="#f0caca" stroke-width="1.3"/><rect x="6" y="5" width="7" height="10" fill="none" stroke="#fff" stroke-width="1.3"/><rect x="8.5" y="6.5" width="6" height="9" fill="#b10f13" stroke="#fff" stroke-width="1.3"/><path d="M10 9H13.5M10 11H13.5M10 13H13.5" stroke="#fff" stroke-width="0.9"/></svg>
<svg style="left:1153px;top:51px" width="10" height="6" viewBox="0 0 10 6"><path d="M0 0.5H9.5L4.75 5.5Z" fill="#fff"/></svg>
<svg style="left:13px;top:74px" width="20" height="20" viewBox="0 0 20 20"><path d="M10 0V8M10 12V20M0 10H8M12 10H20" stroke="#3b68a8" stroke-width="2"/></svg>
<svg style="left:38px;top:84px" width="8" height="5" viewBox="0 0 8 5"><path d="M0 0H7.5L3.75 4.5Z" fill="#8c1116"/></svg>
<svg style="left:53px;top:75px" width="19" height="19" viewBox="0 0 19 19"><rect x="0.5" y="0.5" width="17" height="17" rx="1.5" fill="#fff" stroke="#5f5f5f"/><rect x="12" y="1" width="5" height="5" fill="#e2e2e2"/><path d="M2.5 6.5H4.5L6 3L7.5 6.5H9L10.5 4L12 6.5H15.5" stroke="#c0161c" stroke-width="1.3" fill="none"/><path d="M1 9H17" stroke="#cfcfcf" stroke-width="1"/><path d="M4 11.5V15.5M7 13V15.5" stroke="#c0161c" stroke-width="1.4"/><path d="M13.5 10.5V18.5M9.5 14.5H17.5" stroke="#0d3f8a" stroke-width="3.2"/></svg>
<svg style="left:79px;top:74px" width="20" height="20" viewBox="0 0 20 20"><rect x="1.5" y="2" width="17" height="16" rx="2" fill="#fff" stroke="#888"/><path d="M4 7V9M15 7V9M4 13V16M7 13V16M13 13V16M15.5 13V16" stroke="#c0161c" stroke-width="1.3"/><path d="M8 6L9 3M12 5L13 3" stroke="#f2b21b" stroke-width="1.3"/><path d="M10 0V8M10 12V20M0 10H8M12 10H20" stroke="#3f6fb5" stroke-width="2"/></svg>
<svg style="left:15px;top:103px" width="15" height="16" viewBox="0 0 15 16"><path d="M14 1L14 15L1 8Z" fill="#a3a3a3" stroke="#a3a3a3" stroke-linejoin="round" stroke-width="1.5"/></svg>
<svg style="left:55px;top:103px" width="15" height="16" viewBox="0 0 15 16"><path d="M1 1L1 15L14 8Z" fill="#a3a3a3" stroke="#a3a3a3" stroke-linejoin="round" stroke-width="1.5"/></svg>
<svg style="left:79px;top:101px" width="20" height="20" viewBox="0 0 20 20"><path d="M8 0V6M8 10V16M0 8H6M10 8H16" stroke="#3b5f9a" stroke-width="2"/><circle cx="14.5" cy="15" r="5" fill="#5bb62a"/><path d="M13 12.5V17.5L17 15Z" fill="#fff"/></svg>
<svg style="left:13px;top:128px" width="20" height="20" viewBox="0 0 20 20"><path d="M2 15V9L5 6L8 9V15H6.5V11H3.5V15Z" fill="#a81418"/><path d="M5 1L5 6" stroke="#a81418" stroke-width="2"/><path d="M11 4H17M14 1V7M11 9H17" stroke="#1e4c93" stroke-width="1.8"/><path d="M1 18H13M1 16V20M13 16V20" stroke="#e63030" stroke-width="1.3"/></svg>
<svg style="left:53px;top:129px" width="19" height="19" viewBox="0 0 19 19"><rect x="0.5" y="0.5" width="17" height="17" rx="1.5" fill="#fff" stroke="#5f5f5f"/><rect x="12" y="1" width="5" height="5" fill="#e2e2e2"/><path d="M2.5 6.5Q4.5 2 6.5 4.5T10 6.5L12 4.5L14 6.5H15.5" stroke="#c0161c" stroke-width="1.3" fill="none"/><path d="M1 9H17" stroke="#cfcfcf" stroke-width="1"/><path d="M4 11.5V15.5M7 13V15.5" stroke="#c0161c" stroke-width="1.4"/><circle cx="13.5" cy="14" r="5" fill="#173f82"/><text x="13.5" y="17.3" font-size="9" font-weight="bold" fill="#fff" text-anchor="middle" font-family="Liberation Sans">&amp;</text></svg>
<svg style="left:79px;top:128px" width="21" height="20" viewBox="0 0 21 20"><path d="M6 0V5M6 8V12M0 6H4.5M8 6H12" stroke="#b4b4b4" stroke-width="1.6"/><rect x="7.5" y="9.5" width="12.5" height="10" fill="#fafafa" stroke="#a8a8a8"/><path d="M8 13H20M8 16.5H20M13 10V20" stroke="#c2c2c2"/></svg>
<svg style="left:114px;top:75px" width="19" height="19" viewBox="0 0 19 19"><rect x="0.5" y="0.5" width="17" height="17" rx="1.5" fill="#fff" stroke="#5f5f5f"/><rect x="12" y="1" width="5" height="5" fill="#e2e2e2"/><path d="M3 7V5M5.5 7V6M8 7V4M10.5 7V6M4 12V16M7 13.5V16" stroke="#c0161c" stroke-width="1.3"/><circle cx="13.5" cy="14" r="5" fill="#1f66c7"/><circle cx="13" cy="13.5" r="2" fill="none" stroke="#fff" stroke-width="1.3"/><path d="M14.5 15L16 16.5" stroke="#fff" stroke-width="1.4"/></svg>
<svg style="left:149px;top:75px" width="19" height="19" viewBox="0 0 19 19"><rect x="0.5" y="0.5" width="17" height="17" rx="1.5" fill="#fff" stroke="#5f5f5f"/><rect x="6" y="1" width="6" height="6" fill="#f5a6a8"/><rect x="12" y="1" width="5" height="5" fill="#e2e2e2"/><path d="M3 7.5V3M5 7.5V4.5M8 7.5V5M10 7.5V6" stroke="#c0161c" stroke-width="1.3"/><path d="M2.5 13H4L5.5 10.5L7 13" stroke="#c0161c" stroke-width="1.3" fill="none"/><circle cx="13.5" cy="14" r="5" fill="#184b9a"/><path d="M13.5 10.8V17.2M10.3 14H16.7" stroke="#fff" stroke-width="2"/></svg>
<svg style="left:173px;top:84px" width="8" height="5" viewBox="0 0 8 5"><path d="M0 0H7.5L3.75 4.5Z" fill="#8c1116"/></svg>
<svg style="left:197px;top:75px" width="19" height="19" viewBox="0 0 19 19"><rect x="0.75" y="0.75" width="17" height="17" rx="2" fill="#eef3fb" stroke="#1f56a8" stroke-width="1.5"/><rect x="1" y="1" width="16.5" height="2.5" fill="#1f56a8"/><rect x="14.5" y="1.5" width="2" height="1.5" fill="#e44"/><path d="M3.5 6H5.5V8M4.5 8V14H7M4.5 11H6" stroke="#666" stroke-width="0.9" fill="none"/><path d="M9 15V11M11 15V8M13 15V10M15 15V12" stroke="#c0161c" stroke-width="1"/></svg>
<svg style="left:197px;top:102px" width="19" height="19" viewBox="0 0 19 19"><rect x="1" y="6" width="17" height="11" fill="#d39f1f"/><path d="M1 6L9.5 12L18 6" fill="#e8bb46" stroke="#c48c10" stroke-width="0.6"/><path d="M7 0H12V6H15.5L9.5 12.5L3.5 6H7Z" fill="#d4141a"/></svg>
<svg style="left:231px;top:75px" width="19" height="19" viewBox="0 0 19 19"><rect x="0.5" y="0.5" width="17" height="17" rx="1.5" fill="#fff" stroke="#5f5f5f"/><path d="M1 4H17M1 13.5H17" stroke="#5b8fd9" stroke-width="1"/><path d="M2 7H5L6.5 5L8 7H16" stroke="#c0161c" stroke-width="1.3" fill="none"/><path d="M2 15H5L6.5 13L8 15H16" stroke="#c0161c" stroke-width="1" fill="none"/><path d="M8.5 1V17" stroke="#2d6fd0" stroke-width="1.6"/><path d="M1 9H17" stroke="#2d6fd0" stroke-width="1.3"/></svg>
<svg style="left:266px;top:75px" width="19" height="19" viewBox="0 0 19 19"><rect x="0.5" y="0.5" width="17" height="17" rx="1.5" fill="#fff" stroke="#5f5f5f"/><rect x="12" y="1" width="5" height="5" fill="#e2e2e2"/><path d="M2.5 6.5H4.5L6 3L7.5 6.5H9L10.5 4L12 6.5H15.5" stroke="#c0161c" stroke-width="1.3" fill="none"/><path d="M1 9H17" stroke="#cfcfcf" stroke-width="1"/><path d="M4 11.5V15.5M7 13V15.5" stroke="#c0161c" stroke-width="1.4"/><circle cx="13.5" cy="14" r="4" fill="#fff" stroke="#777" stroke-width="1.2"/><path d="M13.5 12V14.5" stroke="#c0161c" stroke-width="1.2"/><rect x="12" y="8.5" width="3" height="1.5" fill="#777"/></svg>
<svg style="left:290px;top:84px" width="8" height="5" viewBox="0 0 8 5"><path d="M0 0H7.5L3.75 4.5Z" fill="#8c1116"/></svg>
<svg style="left:263px;top:102px" width="20" height="19" viewBox="0 0 20 19"><rect x="10" y="0" width="4" height="1.5" fill="#aaa"/><circle cx="12" cy="10.5" r="7.2" fill="#fff" stroke="#a8a8a8" stroke-width="1.6"/><path d="M12 6V11H15.5" stroke="#2a6fdc" stroke-width="2" fill="none"/><path d="M0 7H3M0 9.5H3M0 12H3M0 14.5H3" stroke="#2a6fdc" stroke-width="1.2"/></svg>
<svg style="left:264px;top:129px" width="20" height="19" viewBox="0 0 20 19"><rect x="0.75" y="0.75" width="18" height="17" rx="2" fill="#fff" stroke="#6f6f6f" stroke-width="1.3"/><rect x="14" y="1.5" width="4" height="4" fill="#ddd"/><path d="M3 14.5H4L5.5 4L7 14L8.5 6L10 14L11.5 9L13 14.5H16" stroke="#c0161c" stroke-width="1.3" fill="none"/></svg>
<svg style="left:312px;top:75px" width="20" height="19" viewBox="0 0 20 19"><rect x="0.5" y="0.5" width="17" height="17" rx="1.5" fill="#fff" stroke="#5f5f5f"/><rect x="12" y="1" width="5" height="5" fill="#e2e2e2"/><path d="M2.5 6.5H4.5L6 3L7.5 6.5H9L10.5 4L12 6.5H15.5" stroke="#c0161c" stroke-width="1.3" fill="none"/><path d="M1 9H17" stroke="#cfcfcf" stroke-width="1"/><path d="M4 11.5V15.5M7 13V15.5" stroke="#c0161c" stroke-width="1.4"/><path d="M7 14Q13 8.5 19 14Q13 19.5 7 14Z" fill="#fff" stroke="#444" stroke-width="1"/><circle cx="13" cy="14" r="2.3" fill="#3a8a1a"/><circle cx="13" cy="14" r="0.9" fill="#000"/></svg>
<svg style="left:312px;top:102px" width="19" height="19" viewBox="0 0 19 19"><rect x="0.5" y="0.5" width="17" height="17" rx="1.5" fill="#fff" stroke="#5f5f5f"/><rect x="12" y="1" width="5" height="5" fill="#e2e2e2"/><path d="M2.5 6.5H4.5L6 3L7.5 6.5H9L10.5 4L12 6.5H15.5" stroke="#c0161c" stroke-width="1.3" fill="none"/><path d="M1 9H17" stroke="#cfcfcf" stroke-width="1"/><path d="M4 11.5V15.5M7 13V15.5" stroke="#c0161c" stroke-width="1.4"/><path d="M9 12H13V9L18.5 14L13 19V16H9Z" fill="#1f66c7"/></svg>
<svg style="left:312px;top:128px" width="19" height="20" viewBox="0 0 19 20"><rect x="0.5" y="2.5" width="17" height="17" rx="1.5" fill="#fff" stroke="#5f5f5f"/><path d="M8 8H10L11.5 5.5L13 8H16M4 13.5V17.5M7 15V17.5" stroke="#c0161c" stroke-width="1.3" fill="none"/><path d="M1 11H17" stroke="#cfcfcf"/><rect x="0" y="4" width="7" height="6" fill="#555"/><path d="M1.5 4.5V2.5A2 2 0 0 1 5.5 2.5V4.5" stroke="#555" stroke-width="1.2" fill="none"/><path d="M9 14H13V11L18.5 16L13 21V18H9Z" fill="#1f66c7"/></svg>
<svg style="left:421px;top:84px" width="8" height="5" viewBox="0 0 8 5"><path d="M0 0H7.5L3.75 4.5Z" fill="#8c1116"/></svg>
<svg style="left:437px;top:76px" width="20" height="19" viewBox="0 0 20 19"><rect x="0.5" y="0.5" width="16" height="15" rx="1.5" fill="#fff" stroke="#888"/><path d="M2 5H4L5.5 2.5L7 5H8.5L10 3L11.5 5H15" stroke="#c0161c" stroke-width="1.3" fill="none"/><path d="M1 8H16" stroke="#ccc"/><path d="M10 10L17.5 17.5M17.5 10L10 17.5" stroke="#e01b1b" stroke-width="2.8"/></svg>
<svg style="left:437px;top:103px" width="20" height="19" viewBox="0 0 20 19"><rect x="0.5" y="0.5" width="18" height="17" rx="1.5" fill="#fafafa" stroke="#777"/><path d="M4 4V15M13 6V15" stroke="#c0161c" stroke-width="1.6"/><path d="M9 9V4L7.5 5.5M9 4L10.5 5.5" stroke="#1f66c7" stroke-width="1.2" fill="none"/><path d="M14 4H16V7" stroke="#1f66c7" stroke-width="1.2" fill="none"/></svg>
<svg style="left:606px;top:110px" width="8" height="5" viewBox="0 0 8 5"><path d="M0 0H7.5L3.75 4.5Z" fill="#8c1116"/></svg>
<svg style="left:646px;top:75px" width="21" height="19" viewBox="0 0 21 19"><rect x="0.75" y="0.75" width="19" height="17" rx="1.5" fill="#fff" stroke="#808080" stroke-width="1.3"/><path d="M3 15H8.5L10 3L11.5 15H17" stroke="#606060" stroke-width="1.1" fill="none"/></svg>
<svg style="left:646px;top:101px" width="21" height="20" viewBox="0 0 21 20"><rect x="0.75" y="0.75" width="18" height="17" rx="1.5" fill="#fafafa" stroke="#a6a6a6" stroke-width="1.2"/><path d="M2 6H5L6.5 3.5L8 6H10M2 13H4L5.5 10.5L7 13H10" stroke="#999" stroke-width="1" fill="none"/><path d="M11 6H15.5V3.5L20 8L15.5 12.5V10H11Z" fill="#c8c8c8" stroke="#999" stroke-width="0.8"/></svg>
<svg style="left:702px;top:75px" width="19" height="19" viewBox="0 0 19 19"><rect x="0.5" y="0.5" width="17" height="15" rx="1" fill="#fff" stroke="#707070"/><rect x="12" y="1" width="5" height="4" fill="#e2e2e2"/><path d="M2 11H3.5L5 3L6.5 9L8 6L9.5 11" stroke="#c0161c" stroke-width="1.3" fill="none"/><path d="M8 12H12.5V9L18 13.5L12.5 18V15H8Z" fill="#2ab02a"/></svg>
<svg style="left:868px;top:84px" width="8" height="5" viewBox="0 0 8 5"><path d="M0 0H7.5L3.75 4.5Z" fill="#8c1116"/></svg>
<svg style="left:133px;top:185px" width="11" height="11" viewBox="0 0 11 11"><rect x="0.75" y="3.75" width="6.5" height="6.5" fill="none" stroke="#333" stroke-width="1.5"/><path d="M3.5 3.5V0.75H10.25V7.25H7.5" stroke="#333" stroke-width="1.5" fill="none"/></svg>
<svg style="left:159px;top:185px" width="11" height="11" viewBox="0 0 11 11"><path d="M1 1L10 10M10 1L1 10" stroke="#333" stroke-width="1.7"/></svg>
<svg style="left:199px;top:181px" width="17" height="20" viewBox="0 0 17 20"><path d="M1.5 1.5H10.5L15.5 6.5V18.5H1.5Z" fill="#f6f6f6" stroke="#9a9a9a"/><path d="M10.5 1.5V6.5H15.5" fill="#fff" stroke="#9a9a9a"/><path d="M8 7.5L12 9.8V14.2L8 16.5L4 14.2V9.8Z" fill="#c4141a"/><path d="M6 14L7 10L8.5 12.5L10 10" stroke="#fff" stroke-width="1.3" fill="none"/></svg>
<svg style="left:1130px;top:193px" width="19" height="19" viewBox="0 0 19 19"><circle cx="6" cy="7" r="5.2" fill="#a7cdf8"/><path d="M6 2A5 5 0 0 0 6 12Z" fill="#d9e9fb"/><path d="M10 12L15 17" stroke="#c8681f" stroke-width="2.4"/><path d="M14 1V9M10 5H18" stroke="#c0141a" stroke-width="2.6"/></svg>
<svg style="left:1130px;top:220px" width="19" height="19" viewBox="0 0 19 19"><circle cx="6" cy="7" r="5.2" fill="#a7cdf8"/><path d="M6 2A5 5 0 0 0 6 12Z" fill="#d9e9fb"/><path d="M10 12L15 17" stroke="#c8681f" stroke-width="2.4"/><path d="M10 3.5H18" stroke="#c0141a" stroke-width="2.6"/></svg>
<svg style="left:1130px;top:246px" width="19" height="19" viewBox="0 0 19 19"><circle cx="6" cy="7" r="5.2" fill="#a7cdf8"/><path d="M6 2A5 5 0 0 0 6 12Z" fill="#d9e9fb"/><path d="M10 12L15 17" stroke="#c8681f" stroke-width="2.4"/><path d="M1 12H4M6 12H9M1 15H4M6 15H9M2 11V13M2 14V16M8 11V13M8 14V16" stroke="#c0141a" stroke-width="1.5"/></svg>
<svg style="left:1130px;top:273px" width="19" height="19" viewBox="0 0 19 19"><circle cx="6" cy="7" r="5.2" fill="#a7cdf8"/><path d="M6 2A5 5 0 0 0 6 12Z" fill="#d9e9fb"/><path d="M10 13L14 17" stroke="#f0b890" stroke-width="3.5" stroke-linecap="round"/><path d="M13 11L17 7V13Z" fill="#e61e1e"/></svg>
<svg style="left:1128px;top:297px" width="21" height="20" viewBox="0 0 21 20"><path d="M3 10V5Q3 3 5 3V2Q7 0 8.5 2Q10 0 11.5 2Q13.5 1.5 13.5 4V9L11 13H6Z" fill="#f5c59a" stroke="#c47a3a" stroke-width="1"/><path d="M14.5 9V19M9.5 14H19.5" stroke="#c0141a" stroke-width="2"/><path d="M14.5 8L12.5 10.5H16.5Z M14.5 20L12.5 17.5H16.5Z M8.5 14L11 12V16Z M20.5 14L18 12V16Z" fill="#c0141a"/></svg>
<svg style="left:1128px;top:323px" width="21" height="21" viewBox="0 0 21 21"><rect x="4" y="0.5" width="12" height="8" fill="#fff" stroke="#888"/><path d="M6 5H8L9 3L10 6L11 4L12 5H14" stroke="#c0141a" fill="none"/><rect x="0.5" y="7.5" width="20" height="12" rx="1" fill="#fff" stroke="#777"/><path d="M2 12H7M12 12H18" stroke="#c0141a"/><circle cx="10" cy="13" r="2.6" fill="#a7cdf8"/><path d="M12 15L16 19" stroke="#c8681f" stroke-width="2"/></svg>
<svg style="left:1128px;top:358px" width="19" height="19" viewBox="0 0 19 19"><circle cx="8" cy="5" r="4.2" fill="#d8d8d8"/><path d="M8 1A4 4 0 0 0 8 9Z" fill="#ececec"/><path d="M10 11L14 15" stroke="#a8a8a8" stroke-width="2.2"/><path d="M1 13L6 9.5V16.5Z" fill="#9a9a9a"/></svg>
<svg style="left:1128px;top:384px" width="19" height="19" viewBox="0 0 19 19"><circle cx="11" cy="5" r="4.2" fill="#d8d8d8"/><path d="M11 1A4 4 0 0 0 11 9Z" fill="#ececec"/><path d="M8 11L3 16" stroke="#a8a8a8" stroke-width="2.2"/><path d="M18 13L13 9.5V16.5Z" fill="#9a9a9a"/></svg>
<svg style="left:1128px;top:415px" width="21" height="22" viewBox="0 0 21 22"><path d="M1 20H3L5 12L6.5 20H8L10.5 2L12 20" stroke="#1f4f9c" stroke-width="1.4" fill="none"/><path d="M8 20L10.5 2L12.5 20H14" stroke="#c0141a" stroke-width="1.4" fill="none"/><path d="M15 1.5H19M17 1.5V20M15 20H19" stroke="#c0141a" stroke-width="1.4"/></svg>
<svg style="left:1128px;top:442px" width="21" height="20" viewBox="0 0 21 20"><path d="M1 19H3L5 11L6.5 19H8L10.5 3L13 19" stroke="#9c9c9c" stroke-width="1.3" fill="none"/><path d="M15 10H19M17 10V18.5M15 18.5H19" stroke="#9c9c9c" stroke-width="1.3"/></svg>
<svg style="left:1128px;top:468px" width="21" height="19" viewBox="0 0 21 19"><path d="M0.5 18H3Q6.5 18 7.5 9Q8.5 1.5 9.5 1.5Q10.5 1.5 11.5 9Q12.5 18 16 18H20" stroke="#1f4f9c" stroke-width="1.5" fill="none"/><path d="M13.5 12V6" stroke="#e61e1e" stroke-width="2.2"/><path d="M10 6.5L13.5 1.5L17 6.5Z" fill="#e61e1e"/></svg>
<svg style="left:1128px;top:494px" width="21" height="19" viewBox="0 0 21 19"><path d="M0.5 18H3Q6.5 18 8 13Q9 10 9.5 10Q10 10 11 13Q12.5 18 16 18H20" stroke="#1f4f9c" stroke-width="1.5" fill="none"/><path d="M13.5 0V5" stroke="#e61e1e" stroke-width="2.2"/><path d="M10 4.5L13.5 9.5L17 4.5Z" fill="#e61e1e"/></svg>
<svg style="left:1128px;top:525px" width="20" height="21" viewBox="0 0 20 21"><path d="M10 0V8M10 12V21M0 10.5H8M12 10.5H20" stroke="#3b68a8" stroke-width="2"/></svg>
<svg style="left:1116px;top:558px" width="21" height="19" viewBox="0 0 21 19"><circle cx="3" cy="2.5" r="2" fill="none" stroke="#e61e1e" stroke-width="1.2"/><circle cx="8" cy="2.5" r="2" fill="none" stroke="#e61e1e" stroke-width="1.2"/><path d="M4 4L7 9M7 4L4 9" stroke="#777" stroke-width="1"/><path d="M1 18H6M9 18Q12 18 13 8Q14 1 15 1Q16 1 17 8Q18 18 21 18" stroke="#1f4f9c" stroke-width="1.5" fill="none"/><path d="M6 10V15" stroke="#e61e1e" stroke-dasharray="1 1"/></svg>
<svg style="left:1141px;top:567px" width="8" height="5" viewBox="0 0 8 5"><path d="M0 0H7.5L3.75 4.5Z" fill="#888"/></svg>
<svg style="left:1123px;top:590px" width="19" height="19" viewBox="0 0 19 19"><rect x="0.5" y="0.5" width="17" height="17" fill="#f3f3f3" stroke="#888"/><path d="M2 15H4L5 7L6 15H7L8.5 3L10 15" stroke="#c0141a" stroke-width="1.3" fill="none"/><path d="M9 15L10.5 4L12 15H13L14 9L15 15H16" stroke="#1f4f9c" stroke-width="1.3" fill="none"/></svg>
<svg style="left:1148px;top:598px" width="8" height="5" viewBox="0 0 8 5"><path d="M0 0H7.5L3.75 4.5Z" fill="#888"/></svg>
<svg style="left:1117px;top:628px" width="21" height="21" viewBox="0 0 21 21"><rect x="0.75" y="0.75" width="19" height="19" fill="#f3f3f3" stroke="#777" stroke-width="1.3"/><path d="M4 4L16 16M16 4L4 16" stroke="#cfcfcf" stroke-width="3"/><rect x="7" y="7" width="6" height="6" fill="#aaa"/><path d="M3 5V3H5M15 3H17V5M17 15V17H15M5 17H3V15" stroke="#999" stroke-width="1"/></svg>
<svg style="left:1141px;top:637px" width="8" height="5" viewBox="0 0 8 5"><path d="M0 0H7.5L3.75 4.5Z" fill="#c6c6c6"/></svg>
<svg style="left:1117px;top:654px" width="21" height="20" viewBox="0 0 21 20"><rect x="5" y="0.5" width="15" height="6" fill="#fff" stroke="#1f4f9c"/><path d="M7 5L8 2L9 5M11 5L12 2L13 5M15 5L16 2L17 5" stroke="#c0141a" fill="none"/><rect x="0.5" y="4.5" width="19" height="15" fill="#fff" stroke="#1f4f9c"/><path d="M2 7H6M2 10H6M2 13H6M2 16H6" stroke="#c0141a" stroke-width="1.2"/><rect x="7" y="7" width="11" height="11" fill="#f6d14a"/><path d="M12.5 8L14 11.5L17.5 12.5L14 13.5L12.5 17L11 13.5L7.5 12.5L11 11.5Z" fill="#e8321a"/></svg>
<svg style="left:1141px;top:663px" width="8" height="5" viewBox="0 0 8 5"><path d="M0 0H7.5L3.75 4.5Z" fill="#777"/></svg>
<svg style="left:1128px;top:686px" width="20" height="20" viewBox="0 0 20 20"><path d="M10 1L19 5.5V14.5L10 19L1 14.5V5.5Z" fill="#d6d6d6" stroke="#a9a9a9" stroke-width="1.3"/><path d="M1 5.5L10 10L19 5.5L10 1Z" fill="#e8e8e8"/><path d="M1 5.5L10 10L19 5.5M10 10V19" stroke="#a9a9a9" stroke-width="1.3" fill="none"/></svg>
<svg style="left:1128px;top:713px" width="20" height="17" viewBox="0 0 20 17"><path d="M1 1H19" stroke="#a9a9a9" stroke-width="2"/><path d="M10 4L17.5 16H2.5Z" fill="#a9a9a9" stroke="#a9a9a9" stroke-linejoin="round" stroke-width="2"/></svg>
<svg style="left:1128px;top:740px" width="20" height="15" viewBox="0 0 20 15"><path d="M10 1.5L17.5 13.5H2.5Z" fill="#a9a9a9" stroke="#a9a9a9" stroke-linejoin="round" stroke-width="2"/></svg>
<svg style="left:1128px;top:765px" width="20" height="16" viewBox="0 0 20 16"><path d="M10 14.5L17.5 2H2.5Z" fill="#a9a9a9" stroke="#a9a9a9" stroke-linejoin="round" stroke-width="2"/></svg>
<svg style="left:1128px;top:790px" width="20" height="19" viewBox="0 0 20 19"><path d="M10 13L17.5 1.5H2.5Z" fill="#a9a9a9" stroke="#a9a9a9" stroke-linejoin="round" stroke-width="2"/><path d="M1 17.5H19" stroke="#a9a9a9" stroke-width="2"/></svg>
<svg style="left:1117px;top:816px" width="26" height="22" viewBox="0 0 26 22"><path d="M1.5 5L5 1.5H12V10L8.5 13.5H1.5Z" fill="#f0f0f0" stroke="#a9a9a9" stroke-width="1.3"/><path d="M1.5 5H8.5V13.5M8.5 5L12 1.5" stroke="#a9a9a9" stroke-width="1.3" fill="none"/><text x="5" y="21" font-size="13" font-weight="bold" fill="#b4b4b4" font-family="Liberation Sans">32</text></svg>
<svg style="left:1144px;top:826px" width="8" height="5" viewBox="0 0 8 5"><path d="M0 0H7.5L3.75 4.5Z" fill="#cfcfcf"/></svg>
<svg style="left:921px;top:857px" width="20" height="19" viewBox="0 0 20 19"><path d="M1.5 1.5H11L14.5 5V17.5H1.5Z" fill="#fff" stroke="#6a7a8a"/><path d="M3.5 5H10M3.5 7.5H10M3.5 10H10" stroke="#3a4a6a" stroke-width="1"/><path d="M3 15Q5 11 6 14T9 13" stroke="#2a6fdc" fill="none"/><path d="M12 1L18 7M18 1L12 7" stroke="#d41b1b" stroke-width="2.4"/></svg>
<svg style="left:950px;top:857px" width="19" height="18" viewBox="0 0 19 18"><rect x="0.5" y="4.5" width="18" height="13" rx="1" fill="#f4f4f4" stroke="#a0a0a0"/><rect x="7" y="1" width="5" height="4" fill="#fff" stroke="#a0a0a0"/><circle cx="5.5" cy="10" r="2" fill="#b0b0b0"/><path d="M2.5 15Q5.5 11 8.5 15Z" fill="#b0b0b0"/><path d="M10.5 9.5H16M10.5 12.5H16" stroke="#a0a0a0" stroke-width="1.2"/></svg>
<svg style="left:1060px;top:854px" width="22" height="22" viewBox="0 0 22 22"><circle cx="11" cy="11" r="10.5" fill="#ecec1e"/><path d="M9.3 4.5H12.7L12 13H10Z" fill="#5a4a1a"/><circle cx="11" cy="16.3" r="1.7" fill="#5a4a1a"/></svg>
<svg style="left:1123px;top:854px" width="20" height="21" viewBox="0 0 20 21"><path d="M2 4V14Q2 16 8 16Q14 16 14 14V4Z" fill="#1a4fa0"/><ellipse cx="8" cy="4" rx="6" ry="2.2" fill="#4a7fd0"/><path d="M8 16V18M1 19H15" stroke="#3a7fe0" stroke-width="1.2"/><circle cx="14" cy="6.5" r="5.5" fill="#e41b1b" stroke="#fff" stroke-width="1"/><rect x="10.5" y="5.5" width="7" height="2.2" fill="#fff"/></svg>
<svg style="left:1152px;top:866px" width="12" height="12" viewBox="0 0 12 12"><g fill="#c8c8c8"><rect x="8" y="1" width="2" height="2"/><rect x="4" y="5" width="2" height="2"/><rect x="8" y="5" width="2" height="2"/><rect x="0" y="9" width="2" height="2"/><rect x="4" y="9" width="2" height="2"/><rect x="8" y="9" width="2" height="2"/></g></svg>
<div class="a" style="left:1111px;top:206px;width:1px;height:644px;background:#b9bcbf"></div>
<svg style="left:1117px;top:181px" width="44" height="4"><path d="M0.5 2H43" stroke="#111" stroke-width="3" stroke-dasharray="2.3 1.7"/></svg>
<div class="a" style="left:1117px;top:349px;width:43px;height:1px;background:#d4d4d4"></div>
<div class="a" style="left:1117px;top:408px;width:43px;height:1px;background:#d4d4d4"></div>
<div class="a" style="left:1117px;top:520px;width:43px;height:1px;background:#d4d4d4"></div>
<div class="a" style="left:1117px;top:553px;width:43px;height:1px;background:#d4d4d4"></div>
<div class="a" style="left:1117px;top:621px;width:43px;height:1px;background:#d4d4d4"></div>
<div class="a" style="left:1117px;top:680px;width:43px;height:1px;background:#d4d4d4"></div>
<div class="t" style="left:838px;top:858.5px;font-size:14px;font-weight:bold;color:#3b3b3b">Signature:</div>
<div class="t" style="left:991px;top:858.5px;font-size:14px;font-weight:bold;color:#3b3b3b">Licenses:</div>
<div class="t" style="left:1089px;top:858.5px;font-size:14px;font-weight:bold;color:#3b3b3b">DB:</div>
<div class="a" style="left:699px;top:100px;width:316px;height:109px;background:rgba(0,0,0,0.28);filter:blur(1px)"></div>
<div class="a" style="left:697px;top:98px;width:315px;height:108px;background:#fff;border:1px solid #a6a6a6"></div>
<div class="a" style="left:700px;top:152px;width:308px;height:26px;background:#c9c9c9;border:1px solid #f0c4c4"></div>
<div class="t" style="left:743px;top:106px;font-size:15px;color:#a3a3a3">Export Active Chromatogram</div>
<div class="t" style="left:743px;top:132px;font-size:15px;color:#2b2b2b">Export All Chromatograms</div>
<div class="t" style="left:743px;top:158px;font-size:15px;color:#2b2b2b">Export &amp; Stack All Chromatograms</div>
<div class="t" style="left:743px;top:184px;font-size:15px;color:#2b2b2b;transform:scaleX(0.972);transform-origin:0 0">Export Chromatograms...</div>
<svg style="left:705px;top:104px" width="19" height="19" viewBox="0 0 19 19"><rect x="0.5" y="0.5" width="17" height="15" rx="1" fill="#fff" stroke="#a8a8a8"/><rect x="12" y="1" width="5" height="4" fill="#e2e2e2"/><path d="M2 11H3.5L5 3L6.5 9L8 6L9.5 11" stroke="#a0a0a0" stroke-width="1.3" fill="none"/><path d="M8 12H12.5V9L18 13.5L12.5 18V15H8Z" fill="#a8a8a8"/></svg>
<svg style="left:704px;top:129px" width="21" height="21" viewBox="0 0 21 21"><path d="M0.5 6V0.5H13" stroke="#555" fill="none"/><path d="M2.5 8V2.5H15" stroke="#555" fill="none"/><g transform="translate(3 4)"><rect x="0.5" y="0.5" width="17" height="15" rx="1" fill="#fff" stroke="#707070"/><rect x="12" y="1" width="5" height="4" fill="#e2e2e2"/><path d="M2 11H3.5L5 3L6.5 9L8 6L9.5 11" stroke="#c0161c" stroke-width="1.3" fill="none"/><path d="M8 12H12.5V9L18 13.5L12.5 18V15H8Z" fill="#2ab02a"/></g></svg>
<svg style="left:704px;top:155px" width="21" height="21" viewBox="0 0 21 21"><rect x="0.75" y="0.75" width="18" height="18" rx="1.5" fill="#eee" stroke="#6b6b6b" stroke-width="1.3"/><path d="M2 15L4 6L6 14" stroke="#d32" stroke-width="1.4" fill="none"/><path d="M5 14L7 8L9 13" stroke="#f2b21b" stroke-width="1.4" fill="none"/><path d="M8 7L11 2L13 7H17" stroke="#2a6fdc" stroke-width="1.3" fill="none"/><path d="M8 13H12.5V10L18 14.5L12.5 19V16H8Z" fill="#2ab02a"/></svg>
<svg style="left:705px;top:181px" width="19" height="19" viewBox="0 0 19 19"><rect x="0.5" y="0.5" width="17" height="15" rx="1" fill="#fff" stroke="#707070"/><rect x="12" y="1" width="5" height="4" fill="#e2e2e2"/><path d="M2 11H3.5L5 3L6.5 9L8 6L9.5 11" stroke="#c0161c" stroke-width="1.3" fill="none"/><path d="M8 12H12.5V9L18 13.5L12.5 18V15H8Z" fill="#2ab02a"/></svg>
</body></html>
